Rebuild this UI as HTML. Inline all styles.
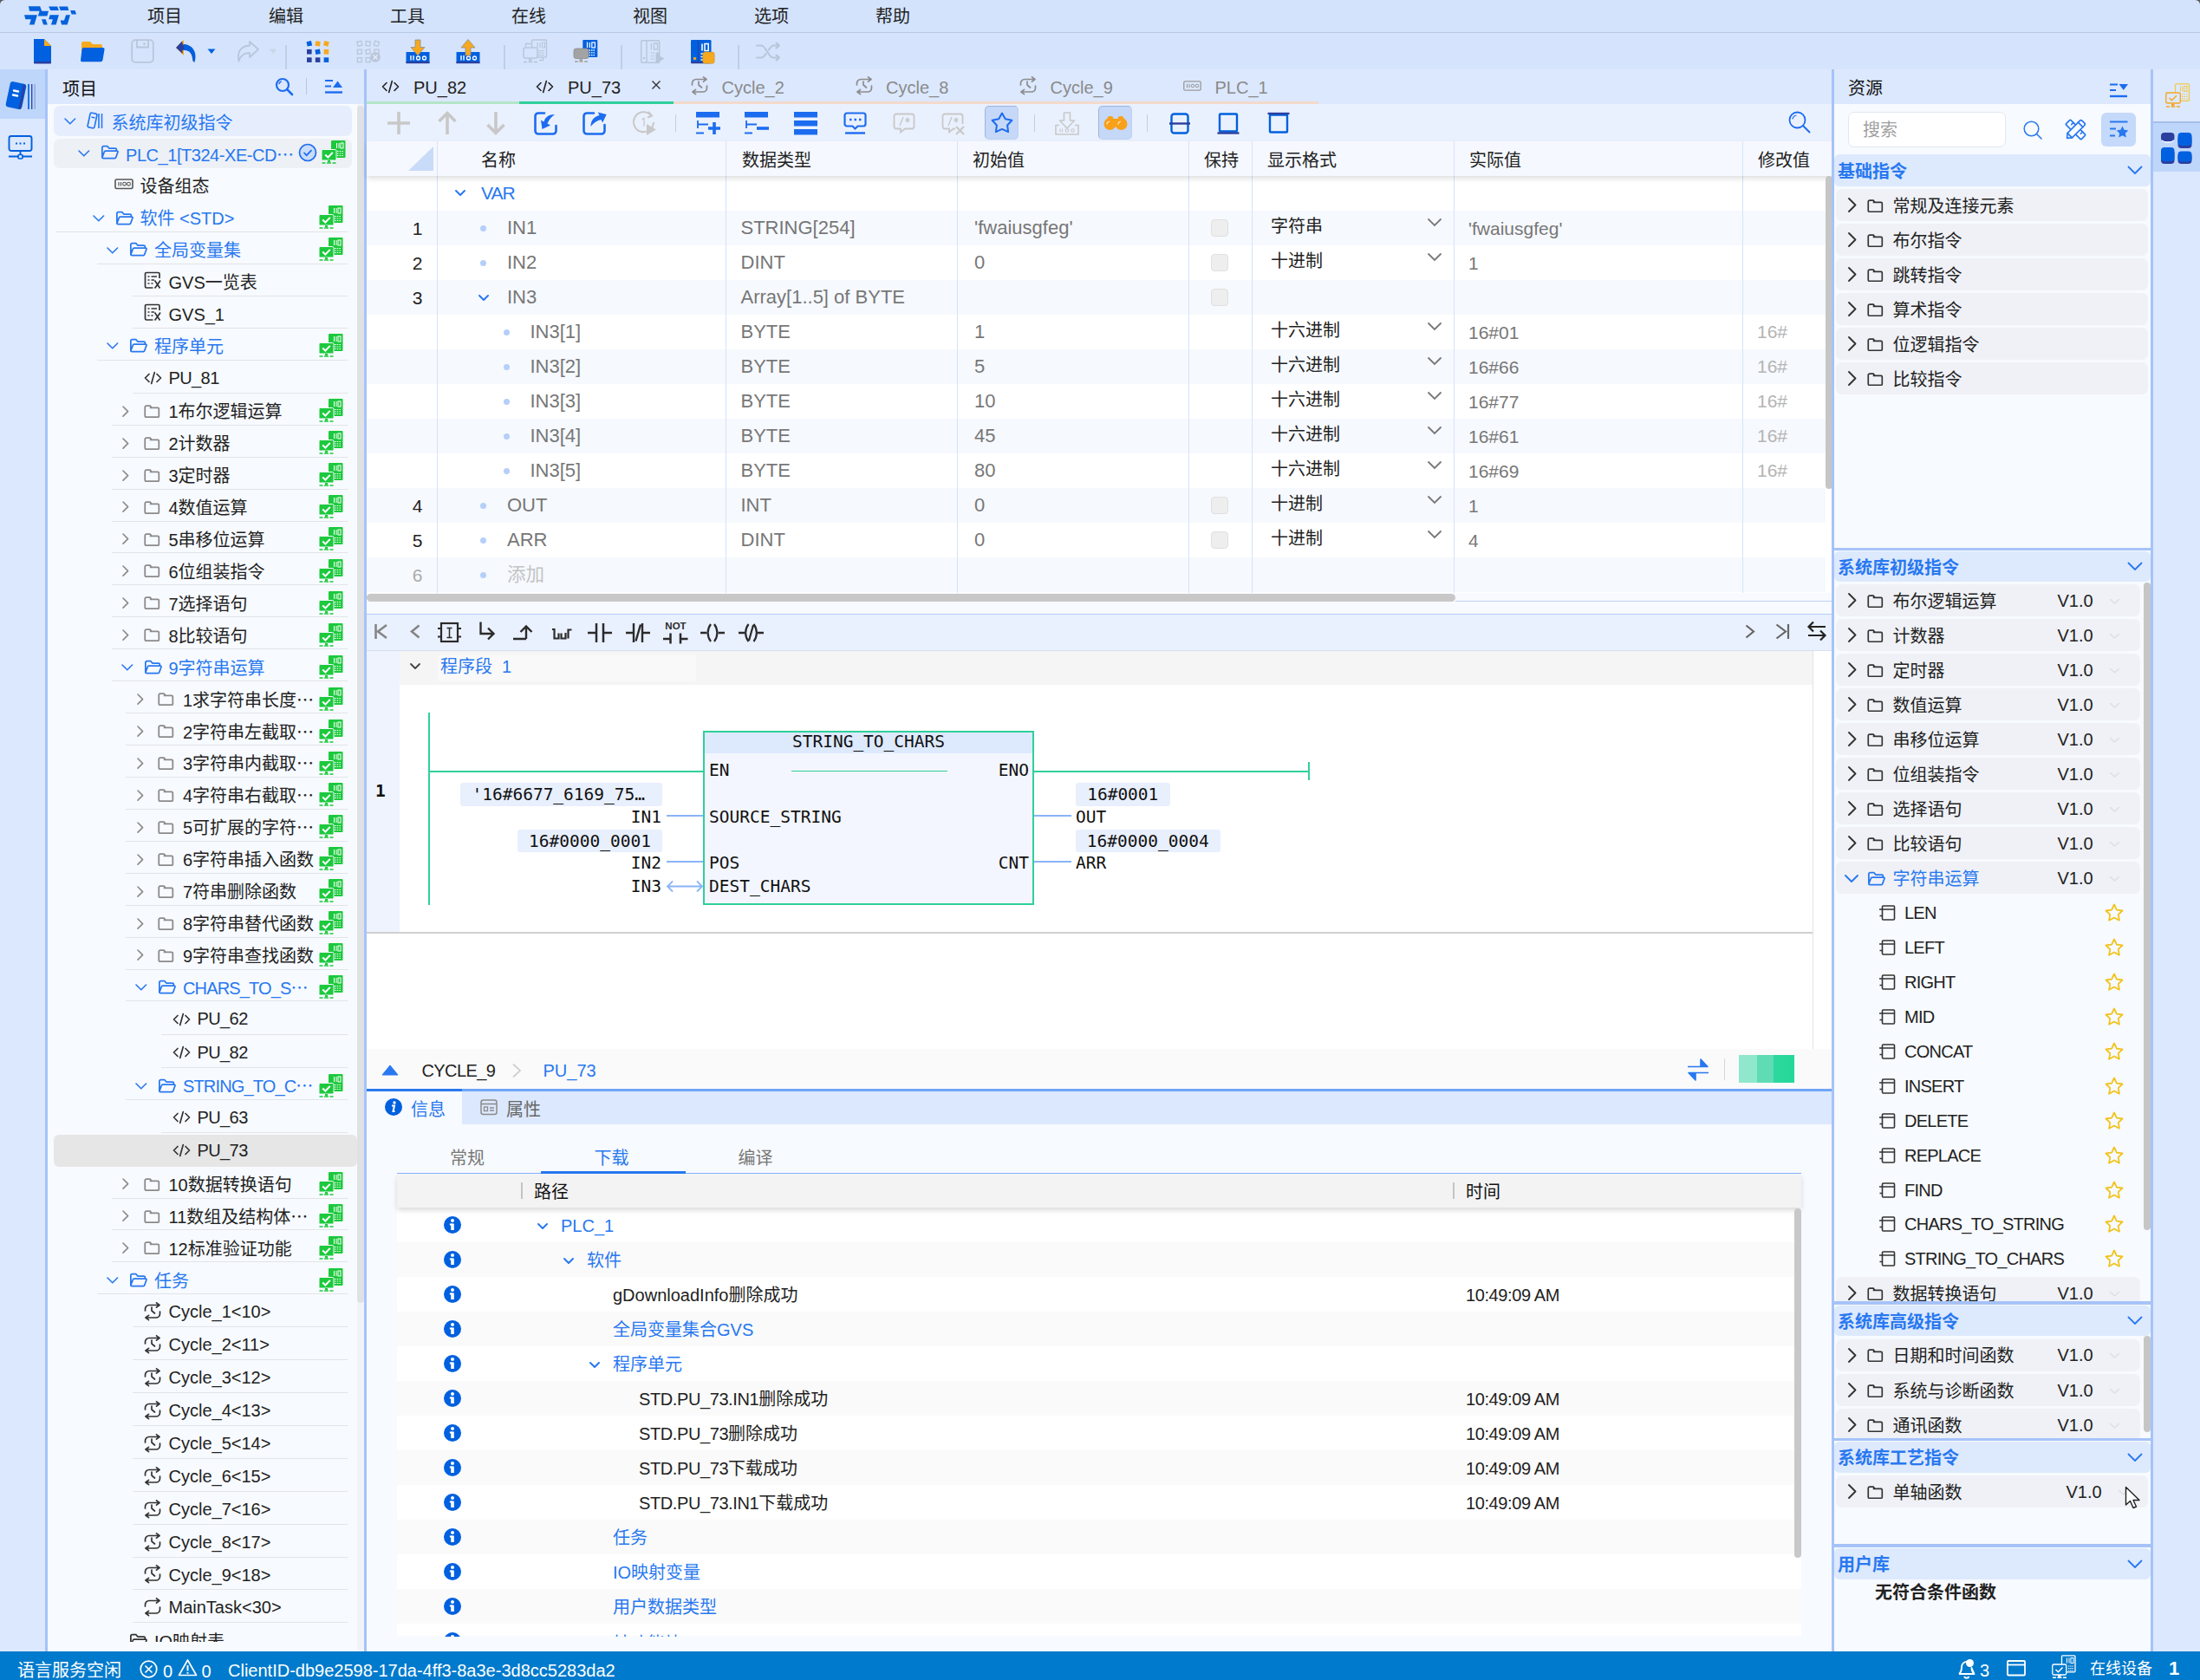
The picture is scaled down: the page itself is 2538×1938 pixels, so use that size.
<!DOCTYPE html>
<html lang="zh-CN"><head><meta charset="utf-8"><title>PLC IDE</title><style>
html,body{margin:0;padding:0;}
body{width:2538px;height:1938px;overflow:hidden;background:#f7fafe;font-family:"Liberation Sans","Noto Sans CJK SC",sans-serif;font-size:20px;color:#222;}
#app{position:relative;width:2538px;height:1938px;overflow:hidden;}
#app div,#app svg{position:absolute;box-sizing:border-box;}
#app svg{overflow:visible;}
.t{white-space:nowrap;padding-top:2.5px;}
.a{font-family:"Liberation Sans","Noto Sans CJK SC",sans-serif;font-size:22px;color:#777;white-space:nowrap;}
.m{font-family:"DejaVu Sans Mono","Liberation Mono","Noto Sans CJK SC",monospace;font-size:19.5px;color:#111;white-space:nowrap;}
</style></head><body><div id="app">
<div style="left:0px;top:0px;width:2538px;height:37px;background:#d3e3fb;"></div>
<div style="left:0px;top:37px;width:2538px;height:1px;background:#b7c9e6;"></div>
<div style="left:0px;top:38px;width:2538px;height:42px;background:#d5e4fc;"></div>
<svg style="left:20px;top:0px;" width="70" height="36" viewBox="0 0 70 36"><g fill="#0562de">
<path d="M12.900 7.200 H26.200 L28.200 12.700 H36 L34.400 18.600 H23.900 L25.600 12.700 H14.100 Z"/>
<path d="M8 17.200 H22.900 L19.600 28.600 H13.900 L15.800 22.300 H9.400 Z"/>
<path d="M28 22.300 H32.700 L34.800 28.600 H30.100 Z"/>
<path d="M36.200 7.400 H46.200 L47.900 11.900 H38.300 Z"/>
<path d="M48.100 7.400 H58.100 L59.300 11.900 H49.700 Z"/>
<path d="M37.600 17.200 H47.900 L44.600 28.600 H38.900 L40.900 22.300 H36.200 Z"/>
<path d="M56.100 17.200 H61 L57.700 28.600 H51.100 L49.700 23.500 H54 Z"/>
<path d="M61.200 12.100 H66.500 L68.100 16.600 H62.600 Z"/></g></svg>
<div class="t" style="left:170px;top:-2px;height:36px;line-height:36px;color:#222;">项目</div>
<div class="t" style="left:310px;top:-2px;height:36px;line-height:36px;color:#222;">编辑</div>
<div class="t" style="left:450px;top:-2px;height:36px;line-height:36px;color:#222;">工具</div>
<div class="t" style="left:590px;top:-2px;height:36px;line-height:36px;color:#222;">在线</div>
<div class="t" style="left:730px;top:-2px;height:36px;line-height:36px;color:#222;">视图</div>
<div class="t" style="left:870px;top:-2px;height:36px;line-height:36px;color:#222;">选项</div>
<div class="t" style="left:1010px;top:-2px;height:36px;line-height:36px;color:#222;">帮助</div>
<svg style="left:38px;top:44px;" width="22" height="30" viewBox="0 0 22 30"><path d="M1 1 h12 l8 8 v19 a1 1 0 0 1 -1 1 h-18 a1 1 0 0 1 -1 -1 z" fill="#0060df"/><path d="M13 1 l8 8 h-8 z" fill="#f6a91e"/><rect x="1" y="27" width="20" height="2.5" rx="1" fill="#2a3f9e"/></svg>
<svg style="left:92px;top:45px;" width="29" height="28" viewBox="0 0 29 28"><path d="M2 5 a2 2 0 0 1 2 -2 h8 l3 3 h9 a2 2 0 0 1 2 2 v6 h-24 z" fill="#f6a91e"/><path d="M4.5 10 h22 a2 2 0 0 1 2 2.3 l-2 12 a2.5 2.5 0 0 1 -2.4 2 h-21 a2 2 0 0 1 -2 -2.3 l1.4 -12 a2.2 2.2 0 0 1 2 -2 z" fill="#0060df"/></svg>
<svg style="left:151px;top:45px;" width="27" height="28" viewBox="0 0 27 28"><rect x="1.2" y="1.2" width="24.6" height="25.6" rx="4" fill="none" stroke="#b9c5da" stroke-width="1.8"/><path d="M7 1.5 v8 h13 v-8" fill="none" stroke="#b9c5da" stroke-width="1.8"/><path d="M15.5 4 v3" stroke="#b9c5da" stroke-width="1.8"/></svg>
<svg style="left:202px;top:44px;" width="28" height="30" viewBox="0 0 28 30"><path d="M1 11 l9 -9 v18 z" fill="#f6a91e"/><path d="M8 3.5 L1 11 l7.5 7 v-4.2 c7 -0.5 10.5 2.5 11.5 9.5 c0.3 2 0.6 4 1.5 4.5 c3.5 -10 -1 -20 -12.5 -20.3 z" fill="#2a3f9e"/><path d="M10 7 c8 0.3 13.5 6 13.5 14 c0 2.5 -0.5 5 -1.2 7 c-1 -0.7 -1.3 -2.5 -1.6 -4.5 c-1 -6.5 -4 -9.5 -10.7 -9.7 z" fill="#0060df"/></svg>
<svg style="left:239px;top:56px;" width="10" height="7" viewBox="0 0 10 7"><path d="M0.5 0.5 h9 l-4.5 5.5 z" fill="#0060df"/></svg>
<svg style="left:272px;top:46px;" width="28" height="27" viewBox="0 0 28 27"><path d="M16 2 l10 9 l-10 9 v-5 c-6 0 -10 2 -12.5 9.5 c-2 -9 1 -17.500 12.500 -18 z" fill="none" stroke="#b9c5da" stroke-width="1.8" stroke-linejoin="round"/></svg>
<svg style="left:310px;top:56px;" width="10" height="7" viewBox="0 0 10 7"><path d="M0.5 0.5 h9 l-4.5 5.5 z" fill="#ccd6e8"/></svg>
<div style="left:329px;top:52px;width:1.5px;height:28px;background:#c0cee6;"></div>
<svg style="left:352px;top:44px;" width="30" height="31" viewBox="0 0 30 31"><rect x="2.0" y="3.5" width="5.6" height="5.6" fill="#0060df" transform="rotate(-12 4.8 6.3)"/><rect x="11.8" y="3.5" width="5.6" height="5.6" fill="#f6a91e" transform="rotate(8 14.600000000000001 6.3)"/><rect x="21.6" y="3.5" width="5.6" height="5.6" fill="#f6a91e" transform="rotate(14 24.400000000000002 6.3)"/><rect x="2.0" y="12.9" width="5.6" height="5.6" fill="#2a3f9e" transform="rotate(0 4.8 15.7)"/><rect x="11.8" y="12.9" width="5.6" height="5.6" fill="#0060df" transform="rotate(-10 14.600000000000001 15.7)"/><rect x="21.6" y="12.9" width="5.6" height="5.6" fill="#f6a91e" transform="rotate(0 24.400000000000002 15.7)"/><rect x="2.0" y="22.3" width="5.6" height="5.6" fill="#2a3f9e" transform="rotate(0 4.8 25.1)"/><rect x="11.8" y="22.3" width="5.6" height="5.6" fill="#2a3f9e" transform="rotate(0 14.600000000000001 25.1)"/><rect x="21.6" y="22.3" width="5.6" height="5.6" fill="#0060df" transform="rotate(0 24.400000000000002 25.1)"/></svg>
<svg style="left:410px;top:44px;" width="30" height="31" viewBox="0 0 30 31"><rect x="2.3" y="3.8" width="5" height="5" fill="none" stroke="#b9c5da" stroke-width="1.3" transform="rotate(-12 4.8 6.3)"/><rect x="12.100000000000001" y="3.8" width="5" height="5" fill="none" stroke="#b9c5da" stroke-width="1.3" transform="rotate(8 14.600000000000001 6.3)"/><rect x="21.900000000000002" y="3.8" width="5" height="5" fill="none" stroke="#b9c5da" stroke-width="1.3" transform="rotate(14 24.400000000000002 6.3)"/><rect x="2.3" y="13.2" width="5" height="5" fill="none" stroke="#b9c5da" stroke-width="1.3" transform="rotate(0 4.8 15.7)"/><rect x="12.100000000000001" y="13.2" width="5" height="5" fill="none" stroke="#b9c5da" stroke-width="1.3" transform="rotate(-10 14.600000000000001 15.7)"/><rect x="21.900000000000002" y="13.2" width="5" height="5" fill="none" stroke="#b9c5da" stroke-width="1.3" transform="rotate(0 24.400000000000002 15.7)"/><rect x="2.3" y="22.6" width="5" height="5" fill="none" stroke="#b9c5da" stroke-width="1.3" transform="rotate(0 4.8 25.1)"/><rect x="12.100000000000001" y="22.6" width="5" height="5" fill="none" stroke="#b9c5da" stroke-width="1.3" transform="rotate(0 14.600000000000001 25.1)"/><circle cx="23" cy="22" r="5.8" fill="#b9c5da"/><path d="M20.500 19.500 l5 5 M25.500 19.500 l-5 5" stroke="#e4ecfa" stroke-width="1.5"/></svg>
<svg style="left:468px;top:42px;" width="28" height="32" viewBox="0 0 28 32"><rect x="0.500" y="18" width="27" height="13" rx="0.500" fill="#0060df"/><rect x="0.500" y="29" width="27" height="2.200" fill="#2a3f9e"/><path d="M6 22 v5.500 M9 22 v5.500" stroke="#fff" stroke-width="1.400"/><circle cx="14.500" cy="25" r="2" fill="none" stroke="#fff" stroke-width="1.300"/><circle cx="21.500" cy="25" r="2" fill="none" stroke="#fff" stroke-width="1.300"/><path d="M11 4 h6 v8.500 h5 l-8 9.500 l-8 -9.500 h5 z" fill="#f6a91e" stroke="#8d8d8d" stroke-width="0.800" stroke-linejoin="round"/></svg>
<svg style="left:526px;top:42px;" width="28" height="32" viewBox="0 0 28 32"><rect x="0.500" y="18" width="27" height="13" rx="0.500" fill="#0060df"/><rect x="0.500" y="29" width="27" height="2.200" fill="#2a3f9e"/><path d="M6 22 v5.500 M9 22 v5.500" stroke="#fff" stroke-width="1.400"/><circle cx="14.500" cy="25" r="2" fill="none" stroke="#fff" stroke-width="1.300"/><circle cx="21.500" cy="25" r="2" fill="none" stroke="#fff" stroke-width="1.300"/><path d="M14 3.500 l8 9.500 h-5 v9 h-6 v-9 h-5 z" fill="#f6a91e" stroke="#8d8d8d" stroke-width="0.800" stroke-linejoin="round"/></svg>
<div style="left:581px;top:52px;width:1.5px;height:28px;background:#c0cee6;"></div>
<svg style="left:603px;top:45px;" width="29" height="29" viewBox="0 0 29 29"><rect x="10.500" y="1" width="17" height="20" rx="1.500" fill="none" stroke="#b9c5da" stroke-width="1.400"/><path d="M17 4 v6 M20 4 v6 M22.500 4 h3 v6 h-3 z M18 13.500 h7 M18 16 h7 M18 18.500 h7" stroke="#b9c5da" stroke-width="1.100" fill="none" stroke-dasharray="none"/><rect x="1" y="10" width="16" height="12" rx="2" fill="#d5e4fc" stroke="#b9c5da" stroke-width="1.500"/><path d="M3.500 9 v-3.500 h6 M19 24.500 h4.500 v-3" fill="none" stroke="#b9c5da" stroke-width="1.300"/><rect x="7" y="22.500" width="3.500" height="3" fill="#b9c5da"/><path d="M1 26.500 h4 M6.500 26.500 h5 M13 26.500 h4" stroke="#b9c5da" stroke-width="1.500"/></svg>
<svg style="left:661px;top:45px;" width="30" height="29" viewBox="0 0 30 29"><rect x="11.300" y="1" width="17" height="20" rx="0.800" fill="#0060df"/><path d="M16.500 3.500 v6.500 M19.300 4 v6" stroke="#fff" stroke-width="1.200"/><rect x="21.800" y="4" width="3.600" height="6" fill="none" stroke="#fff" stroke-width="1.200"/><path d="M18.500 13 h7.500 M18.500 15.800 h7.500 M18.500 18.600 h7.500" stroke="#fff" stroke-width="1.300" stroke-dasharray="1.500 1"/><rect x="1" y="11" width="17" height="11.500" rx="2.500" fill="#a3a3a3" stroke="#8b8b8b" stroke-width="0.800"/><rect x="7.500" y="22.500" width="3.500" height="3" fill="#a3a3a3"/><path d="M2 26 h4 M7.500 26 h4 M13 26 h4" stroke="#a3a3a3" stroke-width="1.500"/></svg>
<div style="left:716px;top:52px;width:1.5px;height:28px;background:#c0cee6;"></div>
<svg style="left:738px;top:45px;" width="32" height="29" viewBox="0 0 32 29"><rect x="1.700" y="1.700" width="21" height="25.500" rx="1.500" fill="none" stroke="#b9c5da" stroke-width="1.500"/><path d="M8 2 v25" stroke="#b9c5da" stroke-width="1.400"/><path d="M13.500 5 v7 M16.500 5 h4 v7 h-4 z" stroke="#b9c5da" stroke-width="1.300" fill="none"/><path d="M13 16 h5 M13 19.500 h5 M13 23 h5" stroke="#b9c5da" stroke-width="1.400" stroke-dasharray="1.500 1" fill="none"/><circle cx="5" cy="22" r="1.300" fill="#b9c5da"/><path d="M18.500 15.500 h4 v4 l6 3 l-6 3.500 v2 h-4 z" fill="#b9c5da"/></svg>
<svg style="left:797px;top:45.5px;" width="28" height="28" viewBox="0 0 28 28"><rect x="0" y="0" width="23.500" height="27" rx="1.200" fill="#0060df"/><rect x="0" y="25" width="23.500" height="2.200" rx="1" fill="#2a3f9e"/><path d="M8.500 0.500 v25" stroke="#2a3f9e" stroke-width="1.100"/><path d="M13 4.500 v8" stroke="#fff" stroke-width="1.600"/><rect x="16" y="4.500" width="4.200" height="8" fill="none" stroke="#fff" stroke-width="1.500"/><circle cx="4.500" cy="21.500" r="1.700" fill="#f6a91e"/><path d="M11.500 16 h2.500 M11.500 19.500 h2.500 M11.500 23 h2.500" stroke="#fff" stroke-width="1.600"/><rect x="13.700" y="14" width="13.500" height="13.200" rx="2.600" fill="#f6a91e" stroke="#b9892f" stroke-width="0.500"/></svg>
<div style="left:851px;top:52px;width:1.5px;height:28px;background:#c0cee6;"></div>
<svg style="left:872px;top:49px;" width="30" height="22" viewBox="0 0 30 22"><path d="M1 3.500 h5 c6 0 8 14 14 14 h7 M1 17.500 h5 c2.500 0 4 -2 5.500 -4.500 M15 8.500 c1.500 -2.500 3 -5 5.500 -5 h6.500 M23.500 0.500 l3.500 3 l-3.500 3 M23.500 14.500 l3.500 3 l-3.500 3" fill="none" stroke="#b9c5da" stroke-width="2.100" stroke-linecap="round" stroke-linejoin="round"/></svg>
<div style="left:0px;top:80px;width:52px;height:1825px;background:#dce8fd;"></div>
<div style="left:0px;top:80px;width:52px;height:57px;background:#bfd6fb;"></div>
<div style="left:52px;top:80px;width:3px;height:1825px;background:#a6c3f8;"></div>
<svg style="left:6px;top:92px;" width="38" height="36" viewBox="0 0 38 36"><rect x="3" y="3" width="19" height="30" rx="3.500" fill="#0060df" transform="rotate(12 12 18)"/><path d="M19.500 4.500 l2.500 0.600 l-5.500 28 l-2.500 -0.500 z" fill="#2a3f9e" transform="translate(1.500 0.800)"/><path d="M10 12.500 l5 1 M9 17.500 l5 1" stroke="#fff" stroke-width="2.400" stroke-linecap="round"/><path d="M27 5 v29" stroke="#0060df" stroke-width="1.700"/><path d="M30.700 5 v29" stroke="#2a3f9e" stroke-width="1.300"/><path d="M34.200 5 v29" stroke="#8ea9dc" stroke-width="1.500"/></svg>
<svg style="left:9px;top:155px;" width="30" height="31" viewBox="0 0 30 31"><rect x="1.500" y="2" width="26" height="17" rx="2.500" fill="none" stroke="#0060df" stroke-width="1.900"/><path d="M9 10.500 h2 M13.500 10.500 h2 M18 10.500 h2" stroke="#0060df" stroke-width="2"/><path d="M14.500 19 v5 M1 25.500 h27" stroke="#0060df" stroke-width="1.900"/><rect x="12" y="23.500" width="5" height="4.500" rx="1.200" fill="#dce8fd" stroke="#0060df" stroke-width="1.700"/></svg>
<div style="left:55px;top:80px;width:366px;height:1825px;background:#f7fafe;"></div>
<div style="left:55px;top:80px;width:366px;height:40px;background:#dce8fd;"></div>
<div class="t" style="left:72px;top:80px;height:41px;line-height:41px;color:#111;">项目</div>
<svg style="left:317px;top:89px;" width="22" height="22" viewBox="0 0 22 22"><circle cx="9" cy="9" r="7" fill="none" stroke="#1c6cf0" stroke-width="2.200"/><path d="M14.200 14.200 L20 20" stroke="#1c6cf0" stroke-width="2.600" stroke-linecap="round"/><path d="M4.800 8 a4.500 4.500 0 0 1 3 -3.200" fill="none" stroke="#1c6cf0" stroke-width="1.400"/></svg>
<div style="left:353px;top:90px;width:1px;height:19px;background:#b9c6dc;"></div>
<svg style="left:374px;top:91px;" width="22" height="18" viewBox="0 0 22 18"><path d="M1 2 h9 M1 8.500 h7 " stroke="#1c6cf0" stroke-width="2.200"/><path d="M1 15.500 h20" stroke="#1c6cf0" stroke-width="2.400"/><path d="M10 10 l5.500 -7.500 l5.500 7.500 z" fill="#1c6cf0"/></svg>
<div style="left:412px;top:120px;width:8px;height:1785px;background:#f0f3f8;"></div>
<div style="left:412px;top:122px;width:7.5px;height:1381px;background:#dfe1e5;border-radius:4px;"></div>
<div style="left:420px;top:80px;width:3px;height:1825px;background:#a6c3f8;"></div>
<div style="left:62px;top:122px;width:344px;height:35px;background:#e6eefd;border-radius:7px;"></div>
<svg style="left:72.7px;top:133.64499999999998px;" width="15.6" height="11.8" viewBox="0 0 15.6 11.8"><path d="M2 3 L7.8 8.8 L13.6 3" fill="none" stroke="#2878f0" stroke-width="1.6" stroke-linecap="round" stroke-linejoin="round"/></svg>
<svg style="left:99.0px;top:128.545px;" width="20" height="21" viewBox="0 0 20 21"><rect x="3.500" y="1.500" width="8" height="17" rx="1.800" fill="none" stroke="#2878f0" stroke-width="1.700" transform="rotate(12 7.500 10)"/><path d="M6.500 6 l4 0.900" stroke="#2878f0" stroke-width="1.500"/><path d="M15 2 v17 M18.500 2 v17" stroke="#2878f0" stroke-width="1.600"/></svg>
<div class="t" style="left:128.5px;top:120.08px;height:36.93px;line-height:36.93px;color:#2878f0;padding-top:3.5px;">系统库初级指令</div>
<div style="left:62px;top:159.5px;width:344px;height:34px;background:#edf0f5;border-radius:7px;"></div>
<svg style="left:89.2px;top:170.575px;" width="15.6" height="11.8" viewBox="0 0 15.6 11.8"><path d="M2 3 L7.8 8.8 L13.6 3" fill="none" stroke="#2878f0" stroke-width="1.6" stroke-linecap="round" stroke-linejoin="round"/></svg>
<svg style="left:116.0px;top:166.475px;" width="21.5" height="18.5" viewBox="0 0 23 19"><path d="M2 16.5 V4.2 a1.7 1.7 0 0 1 1.7 -1.7 h4.8 l2 2.5 h7.5 a1.7 1.7 0 0 1 1.7 1.7 v1.6 M2 16.5 l2.6 -7 a1.6 1.6 0 0 1 1.5 -1.1 h14.2 a1 1 0 0 1 1 1.4 l-2.3 6.4 a1.6 1.6 0 0 1 -1.5 1.1 h-14 a1.5 1.5 0 0 1 -1.5 -1.5 z" fill="none" stroke="#2878f0" stroke-width="1.9" stroke-linejoin="round"/></svg>
<div class="t" style="left:145.0px;top:157.01px;height:36.93px;line-height:36.93px;color:#2878f0;padding-top:3.5px;"><span style="letter-spacing:-0.45px">PLC_1[T324-XE-CD</span>⋯</div>
<svg style="left:371px;top:161.975px;" width="28" height="27" viewBox="0 0 28 27"><rect x="11" y="0" width="16.5" height="20" rx="1" fill="#1cc93c"/>
<path d="M17.5 3 v6 M20 3 v6" stroke="#fff" stroke-width="1" fill="none"/><rect x="22" y="3" width="3" height="6" fill="none" stroke="#fff" stroke-width="1"/>
<path d="M18 12.5 h7 M18 15 h7 M18 17.5 h7" stroke="#fff" stroke-width="1.2" stroke-dasharray="1.5 1.2" fill="none"/>
<rect x="0" y="10.5" width="17" height="12.5" rx="1.5" fill="#1cc93c" stroke="#f4f8ff" stroke-width="1"/>
<path d="M4.2 16.5 l3.2 3 l5.4 -5.6" fill="none" stroke="#fff" stroke-width="2"/>
<rect x="7" y="23" width="3" height="2.2" fill="#1cc93c"/>
<path d="M0.5 26 h4 M6 26 h5 M12.5 26 h4" stroke="#1cc93c" stroke-width="1.6" fill="none"/></svg>
<svg style="left:344px;top:164.975px;" width="22" height="22" viewBox="0 0 22 22"><circle cx="11" cy="11" r="9.500" fill="#c9dcfb" stroke="#1c6cf0" stroke-width="1.700"/><path d="M6.500 11 l3.200 3.200 l5.800 -6" fill="none" stroke="#1c6cf0" stroke-width="1.700"/></svg>
<svg style="left:132.0px;top:205.905px;" width="22" height="13" viewBox="0 0 22 13"><rect x="1" y="1" width="20" height="10.500" rx="1.500" fill="none" stroke="#555" stroke-width="1.600"/><path d="M5 4 v4.500 M7.500 4 v4.500" stroke="#555" stroke-width="1.200"/><circle cx="11.500" cy="6.200" r="1.900" fill="none" stroke="#555" stroke-width="1.100"/><circle cx="16.500" cy="6.200" r="1.900" fill="none" stroke="#555" stroke-width="1.100"/></svg>
<div class="t" style="left:161.5px;top:193.94px;height:36.93px;line-height:36.93px;color:#222;padding-top:3.4px;">设备组态</div>
<div style="left:64px;top:266.8px;width:337px;height:1px;background:#e2e4e8;"></div>
<svg style="left:105.7px;top:245.635px;" width="15.6" height="11.8" viewBox="0 0 15.6 11.8"><path d="M2 3 L7.8 8.8 L13.6 3" fill="none" stroke="#2878f0" stroke-width="1.6" stroke-linecap="round" stroke-linejoin="round"/></svg>
<svg style="left:132.5px;top:241.535px;" width="21.5" height="18.5" viewBox="0 0 23 19"><path d="M2 16.5 V4.2 a1.7 1.7 0 0 1 1.7 -1.7 h4.8 l2 2.5 h7.5 a1.7 1.7 0 0 1 1.7 1.7 v1.6 M2 16.5 l2.6 -7 a1.6 1.6 0 0 1 1.5 -1.1 h14.2 a1 1 0 0 1 1 1.4 l-2.3 6.4 a1.6 1.6 0 0 1 -1.5 1.1 h-14 a1.5 1.5 0 0 1 -1.5 -1.5 z" fill="none" stroke="#2878f0" stroke-width="1.9" stroke-linejoin="round"/></svg>
<div class="t" style="left:161.5px;top:230.87px;height:36.93px;line-height:36.93px;color:#2878f0;padding-top:3.4px;">软件 &lt;STD&gt;</div>
<svg style="left:367.5px;top:237.335px;" width="28" height="27" viewBox="0 0 28 27"><rect x="11" y="0" width="16.5" height="20" rx="1" fill="#1cc93c"/>
<path d="M17.5 3 v6 M20 3 v6" stroke="#fff" stroke-width="1" fill="none"/><rect x="22" y="3" width="3" height="6" fill="none" stroke="#fff" stroke-width="1"/>
<path d="M18 12.5 h7 M18 15 h7 M18 17.5 h7" stroke="#fff" stroke-width="1.2" stroke-dasharray="1.5 1.2" fill="none"/>
<rect x="0" y="10.5" width="17" height="12.5" rx="1.5" fill="#1cc93c" stroke="#f4f8ff" stroke-width="1"/>
<path d="M4.2 16.5 l3.2 3 l5.4 -5.6" fill="none" stroke="#fff" stroke-width="2"/>
<rect x="7" y="23" width="3" height="2.2" fill="#1cc93c"/>
<path d="M0.5 26 h4 M6 26 h5 M12.5 26 h4" stroke="#1cc93c" stroke-width="1.6" fill="none"/></svg>
<div style="left:112.0px;top:303.73px;width:289.0px;height:1px;background:#e2e4e8;"></div>
<svg style="left:122.2px;top:282.565px;" width="15.6" height="11.8" viewBox="0 0 15.6 11.8"><path d="M2 3 L7.8 8.8 L13.6 3" fill="none" stroke="#2878f0" stroke-width="1.6" stroke-linecap="round" stroke-linejoin="round"/></svg>
<svg style="left:149.0px;top:278.465px;" width="21.5" height="18.5" viewBox="0 0 23 19"><path d="M2 16.5 V4.2 a1.7 1.7 0 0 1 1.7 -1.7 h4.8 l2 2.5 h7.5 a1.7 1.7 0 0 1 1.7 1.7 v1.6 M2 16.5 l2.6 -7 a1.6 1.6 0 0 1 1.5 -1.1 h14.2 a1 1 0 0 1 1 1.4 l-2.3 6.4 a1.6 1.6 0 0 1 -1.5 1.1 h-14 a1.5 1.5 0 0 1 -1.5 -1.5 z" fill="none" stroke="#2878f0" stroke-width="1.9" stroke-linejoin="round"/></svg>
<div class="t" style="left:178.0px;top:267.8px;height:36.93px;line-height:36.93px;color:#2878f0;padding-top:3.4px;">全局变量集</div>
<svg style="left:367.5px;top:274.265px;" width="28" height="27" viewBox="0 0 28 27"><rect x="11" y="0" width="16.5" height="20" rx="1" fill="#1cc93c"/>
<path d="M17.5 3 v6 M20 3 v6" stroke="#fff" stroke-width="1" fill="none"/><rect x="22" y="3" width="3" height="6" fill="none" stroke="#fff" stroke-width="1"/>
<path d="M18 12.5 h7 M18 15 h7 M18 17.5 h7" stroke="#fff" stroke-width="1.2" stroke-dasharray="1.5 1.2" fill="none"/>
<rect x="0" y="10.5" width="17" height="12.5" rx="1.5" fill="#1cc93c" stroke="#f4f8ff" stroke-width="1"/>
<path d="M4.2 16.5 l3.2 3 l5.4 -5.6" fill="none" stroke="#fff" stroke-width="2"/>
<rect x="7" y="23" width="3" height="2.2" fill="#1cc93c"/>
<path d="M0.5 26 h4 M6 26 h5 M12.5 26 h4" stroke="#1cc93c" stroke-width="1.6" fill="none"/></svg>
<div style="left:152.5px;top:340.66px;width:248.5px;height:1px;background:#e2e4e8;"></div>
<svg style="left:165.5px;top:313.195px;" width="21" height="21" viewBox="0 0 21 21"><path d="M18 8 V3 a1.500 1.500 0 0 0 -1.500 -1.500 h-13.500 a1.500 1.500 0 0 0 -1.500 1.500 v14.500 a1.500 1.500 0 0 0 1.500 1.500 h7.500" fill="none" stroke="#333" stroke-width="1.700"/><path d="M4.500 6 h2 M8.500 6 h6.500 M4.500 10 h2 M8.500 10 h3.500 M4.500 14 h2 M8.500 14 h2" stroke="#333" stroke-width="1.600"/><path d="M12.500 10.500 l6 9 M19 10.500 c-2 3 -4 6 -6.500 9" stroke="#333" stroke-width="1.700" fill="none"/></svg>
<div class="t" style="left:194.5px;top:304.73px;height:36.93px;line-height:36.93px;color:#222;padding-top:3.4px;">GVS一览表</div>
<div style="left:152.5px;top:377.59000000000003px;width:248.5px;height:1px;background:#e2e4e8;"></div>
<svg style="left:165.5px;top:350.125px;" width="21" height="21" viewBox="0 0 21 21"><path d="M18 8 V3 a1.500 1.500 0 0 0 -1.500 -1.500 h-13.500 a1.500 1.500 0 0 0 -1.500 1.500 v14.500 a1.500 1.500 0 0 0 1.500 1.500 h7.500" fill="none" stroke="#333" stroke-width="1.700"/><path d="M4.500 6 h2 M8.500 6 h6.500 M4.500 10 h2 M8.500 10 h3.500 M4.500 14 h2 M8.500 14 h2" stroke="#333" stroke-width="1.600"/><path d="M12.500 10.500 l6 9 M19 10.500 c-2 3 -4 6 -6.500 9" stroke="#333" stroke-width="1.700" fill="none"/></svg>
<div class="t" style="left:194.5px;top:341.66px;height:36.93px;line-height:36.93px;color:#222;padding-top:3.4px;">GVS_1</div>
<div style="left:112.0px;top:414.52px;width:289.0px;height:1px;background:#e2e4e8;"></div>
<svg style="left:122.2px;top:393.35499999999996px;" width="15.6" height="11.8" viewBox="0 0 15.6 11.8"><path d="M2 3 L7.8 8.8 L13.6 3" fill="none" stroke="#2878f0" stroke-width="1.6" stroke-linecap="round" stroke-linejoin="round"/></svg>
<svg style="left:149.0px;top:389.25499999999994px;" width="21.5" height="18.5" viewBox="0 0 23 19"><path d="M2 16.5 V4.2 a1.7 1.7 0 0 1 1.7 -1.7 h4.8 l2 2.5 h7.5 a1.7 1.7 0 0 1 1.7 1.7 v1.6 M2 16.5 l2.6 -7 a1.6 1.6 0 0 1 1.5 -1.1 h14.2 a1 1 0 0 1 1 1.4 l-2.3 6.4 a1.6 1.6 0 0 1 -1.5 1.1 h-14 a1.5 1.5 0 0 1 -1.5 -1.5 z" fill="none" stroke="#2878f0" stroke-width="1.9" stroke-linejoin="round"/></svg>
<div class="t" style="left:178.0px;top:378.59px;height:36.93px;line-height:36.93px;color:#2878f0;padding-top:3.4px;">程序单元</div>
<svg style="left:367.5px;top:385.05499999999995px;" width="28" height="27" viewBox="0 0 28 27"><rect x="11" y="0" width="16.5" height="20" rx="1" fill="#1cc93c"/>
<path d="M17.5 3 v6 M20 3 v6" stroke="#fff" stroke-width="1" fill="none"/><rect x="22" y="3" width="3" height="6" fill="none" stroke="#fff" stroke-width="1"/>
<path d="M18 12.5 h7 M18 15 h7 M18 17.5 h7" stroke="#fff" stroke-width="1.2" stroke-dasharray="1.5 1.2" fill="none"/>
<rect x="0" y="10.5" width="17" height="12.5" rx="1.5" fill="#1cc93c" stroke="#f4f8ff" stroke-width="1"/>
<path d="M4.2 16.5 l3.2 3 l5.4 -5.6" fill="none" stroke="#fff" stroke-width="2"/>
<rect x="7" y="23" width="3" height="2.2" fill="#1cc93c"/>
<path d="M0.5 26 h4 M6 26 h5 M12.5 26 h4" stroke="#1cc93c" stroke-width="1.6" fill="none"/></svg>
<div style="left:152.5px;top:452.82px;width:248.5px;height:1px;background:#e2e4e8;"></div>
<svg style="left:165.5px;top:427.66999999999996px;" width="21" height="16" viewBox="0 0 21 16"><path d="M6 3.5 L1.5 8 L6 12.5 M15 3.5 L19.5 8 L15 12.5 M12.3 1.5 L8.7 14.5" fill="none" stroke="#333" stroke-width="1.7" stroke-linecap="round" stroke-linejoin="round"/></svg>
<div class="t" style="left:194.5px;top:415.52px;height:38.3px;line-height:38.3px;color:#222;padding-top:1px;letter-spacing:-0.6px;">PU_81</div>
<div style="left:128.5px;top:489.75px;width:272.5px;height:1px;background:#e2e4e8;"></div>
<svg style="left:139.2px;top:466.68499999999995px;" width="11.6" height="15.2" viewBox="0 0 11.6 15.2"><path d="M3 2 L8.6 7.6 L3 13.2" fill="none" stroke="#8a8a8a" stroke-width="1.6" stroke-linecap="round" stroke-linejoin="round"/></svg>
<svg style="left:165.5px;top:465.78499999999997px;" width="18.5" height="16" viewBox="0 0 22 19"><path d="M1.5 4.5 a2 2 0 0 1 2 -2 h5 l2 2.6 h8.5 a1.6 1.6 0 0 1 1.6 1.6 v9.8 a1.6 1.6 0 0 1 -1.6 1.6 h-15.9 a1.6 1.6 0 0 1 -1.6 -1.6 z M8 5.1 h3" fill="none" stroke="#8a8a8a" stroke-width="2.1" stroke-linejoin="round"/></svg>
<div class="t" style="left:194.5px;top:453.82px;height:36.93px;line-height:36.93px;color:#222;padding-top:3.4px;">1布尔逻辑运算</div>
<svg style="left:367.5px;top:460.28499999999997px;" width="28" height="27" viewBox="0 0 28 27"><rect x="11" y="0" width="16.5" height="20" rx="1" fill="#1cc93c"/>
<path d="M17.5 3 v6 M20 3 v6" stroke="#fff" stroke-width="1" fill="none"/><rect x="22" y="3" width="3" height="6" fill="none" stroke="#fff" stroke-width="1"/>
<path d="M18 12.5 h7 M18 15 h7 M18 17.5 h7" stroke="#fff" stroke-width="1.2" stroke-dasharray="1.5 1.2" fill="none"/>
<rect x="0" y="10.5" width="17" height="12.5" rx="1.5" fill="#1cc93c" stroke="#f4f8ff" stroke-width="1"/>
<path d="M4.2 16.5 l3.2 3 l5.4 -5.6" fill="none" stroke="#fff" stroke-width="2"/>
<rect x="7" y="23" width="3" height="2.2" fill="#1cc93c"/>
<path d="M0.5 26 h4 M6 26 h5 M12.5 26 h4" stroke="#1cc93c" stroke-width="1.6" fill="none"/></svg>
<div style="left:128.5px;top:526.68px;width:272.5px;height:1px;background:#e2e4e8;"></div>
<svg style="left:139.2px;top:503.61499999999995px;" width="11.6" height="15.2" viewBox="0 0 11.6 15.2"><path d="M3 2 L8.6 7.6 L3 13.2" fill="none" stroke="#8a8a8a" stroke-width="1.6" stroke-linecap="round" stroke-linejoin="round"/></svg>
<svg style="left:165.5px;top:502.715px;" width="18.5" height="16" viewBox="0 0 22 19"><path d="M1.5 4.5 a2 2 0 0 1 2 -2 h5 l2 2.6 h8.5 a1.6 1.6 0 0 1 1.6 1.6 v9.8 a1.6 1.6 0 0 1 -1.6 1.6 h-15.9 a1.6 1.6 0 0 1 -1.6 -1.6 z M8 5.1 h3" fill="none" stroke="#8a8a8a" stroke-width="2.1" stroke-linejoin="round"/></svg>
<div class="t" style="left:194.5px;top:490.75px;height:36.93px;line-height:36.93px;color:#222;padding-top:3.4px;">2计数器</div>
<svg style="left:367.5px;top:497.215px;" width="28" height="27" viewBox="0 0 28 27"><rect x="11" y="0" width="16.5" height="20" rx="1" fill="#1cc93c"/>
<path d="M17.5 3 v6 M20 3 v6" stroke="#fff" stroke-width="1" fill="none"/><rect x="22" y="3" width="3" height="6" fill="none" stroke="#fff" stroke-width="1"/>
<path d="M18 12.5 h7 M18 15 h7 M18 17.5 h7" stroke="#fff" stroke-width="1.2" stroke-dasharray="1.5 1.2" fill="none"/>
<rect x="0" y="10.5" width="17" height="12.5" rx="1.5" fill="#1cc93c" stroke="#f4f8ff" stroke-width="1"/>
<path d="M4.2 16.5 l3.2 3 l5.4 -5.6" fill="none" stroke="#fff" stroke-width="2"/>
<rect x="7" y="23" width="3" height="2.2" fill="#1cc93c"/>
<path d="M0.5 26 h4 M6 26 h5 M12.5 26 h4" stroke="#1cc93c" stroke-width="1.6" fill="none"/></svg>
<div style="left:128.5px;top:563.6099999999999px;width:272.5px;height:1px;background:#e2e4e8;"></div>
<svg style="left:139.2px;top:540.545px;" width="11.6" height="15.2" viewBox="0 0 11.6 15.2"><path d="M3 2 L8.6 7.6 L3 13.2" fill="none" stroke="#8a8a8a" stroke-width="1.6" stroke-linecap="round" stroke-linejoin="round"/></svg>
<svg style="left:165.5px;top:539.645px;" width="18.5" height="16" viewBox="0 0 22 19"><path d="M1.5 4.5 a2 2 0 0 1 2 -2 h5 l2 2.6 h8.5 a1.6 1.6 0 0 1 1.6 1.6 v9.8 a1.6 1.6 0 0 1 -1.6 1.6 h-15.9 a1.6 1.6 0 0 1 -1.6 -1.6 z M8 5.1 h3" fill="none" stroke="#8a8a8a" stroke-width="2.1" stroke-linejoin="round"/></svg>
<div class="t" style="left:194.5px;top:527.68px;height:36.93px;line-height:36.93px;color:#222;padding-top:3.4px;">3定时器</div>
<svg style="left:367.5px;top:534.145px;" width="28" height="27" viewBox="0 0 28 27"><rect x="11" y="0" width="16.5" height="20" rx="1" fill="#1cc93c"/>
<path d="M17.5 3 v6 M20 3 v6" stroke="#fff" stroke-width="1" fill="none"/><rect x="22" y="3" width="3" height="6" fill="none" stroke="#fff" stroke-width="1"/>
<path d="M18 12.5 h7 M18 15 h7 M18 17.5 h7" stroke="#fff" stroke-width="1.2" stroke-dasharray="1.5 1.2" fill="none"/>
<rect x="0" y="10.5" width="17" height="12.5" rx="1.5" fill="#1cc93c" stroke="#f4f8ff" stroke-width="1"/>
<path d="M4.2 16.5 l3.2 3 l5.4 -5.6" fill="none" stroke="#fff" stroke-width="2"/>
<rect x="7" y="23" width="3" height="2.2" fill="#1cc93c"/>
<path d="M0.5 26 h4 M6 26 h5 M12.5 26 h4" stroke="#1cc93c" stroke-width="1.6" fill="none"/></svg>
<div style="left:128.5px;top:600.54px;width:272.5px;height:1px;background:#e2e4e8;"></div>
<svg style="left:139.2px;top:577.475px;" width="11.6" height="15.2" viewBox="0 0 11.6 15.2"><path d="M3 2 L8.6 7.6 L3 13.2" fill="none" stroke="#8a8a8a" stroke-width="1.6" stroke-linecap="round" stroke-linejoin="round"/></svg>
<svg style="left:165.5px;top:576.575px;" width="18.5" height="16" viewBox="0 0 22 19"><path d="M1.5 4.5 a2 2 0 0 1 2 -2 h5 l2 2.6 h8.5 a1.6 1.6 0 0 1 1.6 1.6 v9.8 a1.6 1.6 0 0 1 -1.6 1.6 h-15.9 a1.6 1.6 0 0 1 -1.6 -1.6 z M8 5.1 h3" fill="none" stroke="#8a8a8a" stroke-width="2.1" stroke-linejoin="round"/></svg>
<div class="t" style="left:194.5px;top:564.61px;height:36.93px;line-height:36.93px;color:#222;padding-top:3.4px;">4数值运算</div>
<svg style="left:367.5px;top:571.075px;" width="28" height="27" viewBox="0 0 28 27"><rect x="11" y="0" width="16.5" height="20" rx="1" fill="#1cc93c"/>
<path d="M17.5 3 v6 M20 3 v6" stroke="#fff" stroke-width="1" fill="none"/><rect x="22" y="3" width="3" height="6" fill="none" stroke="#fff" stroke-width="1"/>
<path d="M18 12.5 h7 M18 15 h7 M18 17.5 h7" stroke="#fff" stroke-width="1.2" stroke-dasharray="1.5 1.2" fill="none"/>
<rect x="0" y="10.5" width="17" height="12.5" rx="1.5" fill="#1cc93c" stroke="#f4f8ff" stroke-width="1"/>
<path d="M4.2 16.5 l3.2 3 l5.4 -5.6" fill="none" stroke="#fff" stroke-width="2"/>
<rect x="7" y="23" width="3" height="2.2" fill="#1cc93c"/>
<path d="M0.5 26 h4 M6 26 h5 M12.5 26 h4" stroke="#1cc93c" stroke-width="1.6" fill="none"/></svg>
<div style="left:128.5px;top:637.4699999999999px;width:272.5px;height:1px;background:#e2e4e8;"></div>
<svg style="left:139.2px;top:614.405px;" width="11.6" height="15.2" viewBox="0 0 11.6 15.2"><path d="M3 2 L8.6 7.6 L3 13.2" fill="none" stroke="#8a8a8a" stroke-width="1.6" stroke-linecap="round" stroke-linejoin="round"/></svg>
<svg style="left:165.5px;top:613.505px;" width="18.5" height="16" viewBox="0 0 22 19"><path d="M1.5 4.5 a2 2 0 0 1 2 -2 h5 l2 2.6 h8.5 a1.6 1.6 0 0 1 1.6 1.6 v9.8 a1.6 1.6 0 0 1 -1.6 1.6 h-15.9 a1.6 1.6 0 0 1 -1.6 -1.6 z M8 5.1 h3" fill="none" stroke="#8a8a8a" stroke-width="2.1" stroke-linejoin="round"/></svg>
<div class="t" style="left:194.5px;top:601.54px;height:36.93px;line-height:36.93px;color:#222;padding-top:3.4px;">5串移位运算</div>
<svg style="left:367.5px;top:608.005px;" width="28" height="27" viewBox="0 0 28 27"><rect x="11" y="0" width="16.5" height="20" rx="1" fill="#1cc93c"/>
<path d="M17.5 3 v6 M20 3 v6" stroke="#fff" stroke-width="1" fill="none"/><rect x="22" y="3" width="3" height="6" fill="none" stroke="#fff" stroke-width="1"/>
<path d="M18 12.5 h7 M18 15 h7 M18 17.5 h7" stroke="#fff" stroke-width="1.2" stroke-dasharray="1.5 1.2" fill="none"/>
<rect x="0" y="10.5" width="17" height="12.5" rx="1.5" fill="#1cc93c" stroke="#f4f8ff" stroke-width="1"/>
<path d="M4.2 16.5 l3.2 3 l5.4 -5.6" fill="none" stroke="#fff" stroke-width="2"/>
<rect x="7" y="23" width="3" height="2.2" fill="#1cc93c"/>
<path d="M0.5 26 h4 M6 26 h5 M12.5 26 h4" stroke="#1cc93c" stroke-width="1.6" fill="none"/></svg>
<div style="left:128.5px;top:674.4px;width:272.5px;height:1px;background:#e2e4e8;"></div>
<svg style="left:139.2px;top:651.335px;" width="11.6" height="15.2" viewBox="0 0 11.6 15.2"><path d="M3 2 L8.6 7.6 L3 13.2" fill="none" stroke="#8a8a8a" stroke-width="1.6" stroke-linecap="round" stroke-linejoin="round"/></svg>
<svg style="left:165.5px;top:650.4350000000001px;" width="18.5" height="16" viewBox="0 0 22 19"><path d="M1.5 4.5 a2 2 0 0 1 2 -2 h5 l2 2.6 h8.5 a1.6 1.6 0 0 1 1.6 1.6 v9.8 a1.6 1.6 0 0 1 -1.6 1.6 h-15.9 a1.6 1.6 0 0 1 -1.6 -1.6 z M8 5.1 h3" fill="none" stroke="#8a8a8a" stroke-width="2.1" stroke-linejoin="round"/></svg>
<div class="t" style="left:194.5px;top:638.47px;height:36.93px;line-height:36.93px;color:#222;padding-top:3.4px;">6位组装指令</div>
<svg style="left:367.5px;top:644.9350000000001px;" width="28" height="27" viewBox="0 0 28 27"><rect x="11" y="0" width="16.5" height="20" rx="1" fill="#1cc93c"/>
<path d="M17.5 3 v6 M20 3 v6" stroke="#fff" stroke-width="1" fill="none"/><rect x="22" y="3" width="3" height="6" fill="none" stroke="#fff" stroke-width="1"/>
<path d="M18 12.5 h7 M18 15 h7 M18 17.5 h7" stroke="#fff" stroke-width="1.2" stroke-dasharray="1.5 1.2" fill="none"/>
<rect x="0" y="10.5" width="17" height="12.5" rx="1.5" fill="#1cc93c" stroke="#f4f8ff" stroke-width="1"/>
<path d="M4.2 16.5 l3.2 3 l5.4 -5.6" fill="none" stroke="#fff" stroke-width="2"/>
<rect x="7" y="23" width="3" height="2.2" fill="#1cc93c"/>
<path d="M0.5 26 h4 M6 26 h5 M12.5 26 h4" stroke="#1cc93c" stroke-width="1.6" fill="none"/></svg>
<div style="left:128.5px;top:711.3299999999999px;width:272.5px;height:1px;background:#e2e4e8;"></div>
<svg style="left:139.2px;top:688.265px;" width="11.6" height="15.2" viewBox="0 0 11.6 15.2"><path d="M3 2 L8.6 7.6 L3 13.2" fill="none" stroke="#8a8a8a" stroke-width="1.6" stroke-linecap="round" stroke-linejoin="round"/></svg>
<svg style="left:165.5px;top:687.365px;" width="18.5" height="16" viewBox="0 0 22 19"><path d="M1.5 4.5 a2 2 0 0 1 2 -2 h5 l2 2.6 h8.5 a1.6 1.6 0 0 1 1.6 1.6 v9.8 a1.6 1.6 0 0 1 -1.6 1.6 h-15.9 a1.6 1.6 0 0 1 -1.6 -1.6 z M8 5.1 h3" fill="none" stroke="#8a8a8a" stroke-width="2.1" stroke-linejoin="round"/></svg>
<div class="t" style="left:194.5px;top:675.4px;height:36.93px;line-height:36.93px;color:#222;padding-top:3.4px;">7选择语句</div>
<svg style="left:367.5px;top:681.865px;" width="28" height="27" viewBox="0 0 28 27"><rect x="11" y="0" width="16.5" height="20" rx="1" fill="#1cc93c"/>
<path d="M17.5 3 v6 M20 3 v6" stroke="#fff" stroke-width="1" fill="none"/><rect x="22" y="3" width="3" height="6" fill="none" stroke="#fff" stroke-width="1"/>
<path d="M18 12.5 h7 M18 15 h7 M18 17.5 h7" stroke="#fff" stroke-width="1.2" stroke-dasharray="1.5 1.2" fill="none"/>
<rect x="0" y="10.5" width="17" height="12.5" rx="1.5" fill="#1cc93c" stroke="#f4f8ff" stroke-width="1"/>
<path d="M4.2 16.5 l3.2 3 l5.4 -5.6" fill="none" stroke="#fff" stroke-width="2"/>
<rect x="7" y="23" width="3" height="2.2" fill="#1cc93c"/>
<path d="M0.5 26 h4 M6 26 h5 M12.5 26 h4" stroke="#1cc93c" stroke-width="1.6" fill="none"/></svg>
<div style="left:128.5px;top:748.26px;width:272.5px;height:1px;background:#e2e4e8;"></div>
<svg style="left:139.2px;top:725.195px;" width="11.6" height="15.2" viewBox="0 0 11.6 15.2"><path d="M3 2 L8.6 7.6 L3 13.2" fill="none" stroke="#8a8a8a" stroke-width="1.6" stroke-linecap="round" stroke-linejoin="round"/></svg>
<svg style="left:165.5px;top:724.2950000000001px;" width="18.5" height="16" viewBox="0 0 22 19"><path d="M1.5 4.5 a2 2 0 0 1 2 -2 h5 l2 2.6 h8.5 a1.6 1.6 0 0 1 1.6 1.6 v9.8 a1.6 1.6 0 0 1 -1.6 1.6 h-15.9 a1.6 1.6 0 0 1 -1.6 -1.6 z M8 5.1 h3" fill="none" stroke="#8a8a8a" stroke-width="2.1" stroke-linejoin="round"/></svg>
<div class="t" style="left:194.5px;top:712.33px;height:36.93px;line-height:36.93px;color:#222;padding-top:3.4px;">8比较语句</div>
<svg style="left:367.5px;top:718.7950000000001px;" width="28" height="27" viewBox="0 0 28 27"><rect x="11" y="0" width="16.5" height="20" rx="1" fill="#1cc93c"/>
<path d="M17.5 3 v6 M20 3 v6" stroke="#fff" stroke-width="1" fill="none"/><rect x="22" y="3" width="3" height="6" fill="none" stroke="#fff" stroke-width="1"/>
<path d="M18 12.5 h7 M18 15 h7 M18 17.5 h7" stroke="#fff" stroke-width="1.2" stroke-dasharray="1.5 1.2" fill="none"/>
<rect x="0" y="10.5" width="17" height="12.5" rx="1.5" fill="#1cc93c" stroke="#f4f8ff" stroke-width="1"/>
<path d="M4.2 16.5 l3.2 3 l5.4 -5.6" fill="none" stroke="#fff" stroke-width="2"/>
<rect x="7" y="23" width="3" height="2.2" fill="#1cc93c"/>
<path d="M0.5 26 h4 M6 26 h5 M12.5 26 h4" stroke="#1cc93c" stroke-width="1.6" fill="none"/></svg>
<div style="left:128.5px;top:785.1899999999999px;width:272.5px;height:1px;background:#e2e4e8;"></div>
<svg style="left:138.7px;top:764.0250000000001px;" width="15.6" height="11.8" viewBox="0 0 15.6 11.8"><path d="M2 3 L7.8 8.8 L13.6 3" fill="none" stroke="#2878f0" stroke-width="1.6" stroke-linecap="round" stroke-linejoin="round"/></svg>
<svg style="left:165.5px;top:759.9250000000001px;" width="21.5" height="18.5" viewBox="0 0 23 19"><path d="M2 16.5 V4.2 a1.7 1.7 0 0 1 1.7 -1.7 h4.8 l2 2.5 h7.5 a1.7 1.7 0 0 1 1.7 1.7 v1.6 M2 16.5 l2.6 -7 a1.6 1.6 0 0 1 1.5 -1.1 h14.2 a1 1 0 0 1 1 1.4 l-2.3 6.4 a1.6 1.6 0 0 1 -1.5 1.1 h-14 a1.5 1.5 0 0 1 -1.5 -1.5 z" fill="none" stroke="#2878f0" stroke-width="1.9" stroke-linejoin="round"/></svg>
<div class="t" style="left:194.5px;top:749.26px;height:36.93px;line-height:36.93px;color:#2878f0;padding-top:3.4px;">9字符串运算</div>
<svg style="left:367.5px;top:755.725px;" width="28" height="27" viewBox="0 0 28 27"><rect x="11" y="0" width="16.5" height="20" rx="1" fill="#1cc93c"/>
<path d="M17.5 3 v6 M20 3 v6" stroke="#fff" stroke-width="1" fill="none"/><rect x="22" y="3" width="3" height="6" fill="none" stroke="#fff" stroke-width="1"/>
<path d="M18 12.5 h7 M18 15 h7 M18 17.5 h7" stroke="#fff" stroke-width="1.2" stroke-dasharray="1.5 1.2" fill="none"/>
<rect x="0" y="10.5" width="17" height="12.5" rx="1.5" fill="#1cc93c" stroke="#f4f8ff" stroke-width="1"/>
<path d="M4.2 16.5 l3.2 3 l5.4 -5.6" fill="none" stroke="#fff" stroke-width="2"/>
<rect x="7" y="23" width="3" height="2.2" fill="#1cc93c"/>
<path d="M0.5 26 h4 M6 26 h5 M12.5 26 h4" stroke="#1cc93c" stroke-width="1.6" fill="none"/></svg>
<div style="left:145.0px;top:822.12px;width:256.0px;height:1px;background:#e2e4e8;"></div>
<svg style="left:155.7px;top:799.0550000000001px;" width="11.6" height="15.2" viewBox="0 0 11.6 15.2"><path d="M3 2 L8.6 7.6 L3 13.2" fill="none" stroke="#8a8a8a" stroke-width="1.6" stroke-linecap="round" stroke-linejoin="round"/></svg>
<svg style="left:182.0px;top:798.1550000000001px;" width="18.5" height="16" viewBox="0 0 22 19"><path d="M1.5 4.5 a2 2 0 0 1 2 -2 h5 l2 2.6 h8.5 a1.6 1.6 0 0 1 1.6 1.6 v9.8 a1.6 1.6 0 0 1 -1.6 1.6 h-15.9 a1.6 1.6 0 0 1 -1.6 -1.6 z M8 5.1 h3" fill="none" stroke="#8a8a8a" stroke-width="2.1" stroke-linejoin="round"/></svg>
<div class="t" style="left:211.0px;top:786.19px;height:36.93px;line-height:36.93px;color:#222;padding-top:3.4px;">1求字符串长度⋯</div>
<svg style="left:367.5px;top:792.6550000000001px;" width="28" height="27" viewBox="0 0 28 27"><rect x="11" y="0" width="16.5" height="20" rx="1" fill="#1cc93c"/>
<path d="M17.5 3 v6 M20 3 v6" stroke="#fff" stroke-width="1" fill="none"/><rect x="22" y="3" width="3" height="6" fill="none" stroke="#fff" stroke-width="1"/>
<path d="M18 12.5 h7 M18 15 h7 M18 17.5 h7" stroke="#fff" stroke-width="1.2" stroke-dasharray="1.5 1.2" fill="none"/>
<rect x="0" y="10.5" width="17" height="12.5" rx="1.5" fill="#1cc93c" stroke="#f4f8ff" stroke-width="1"/>
<path d="M4.2 16.5 l3.2 3 l5.4 -5.6" fill="none" stroke="#fff" stroke-width="2"/>
<rect x="7" y="23" width="3" height="2.2" fill="#1cc93c"/>
<path d="M0.5 26 h4 M6 26 h5 M12.5 26 h4" stroke="#1cc93c" stroke-width="1.6" fill="none"/></svg>
<div style="left:145.0px;top:859.05px;width:256.0px;height:1px;background:#e2e4e8;"></div>
<svg style="left:155.7px;top:835.985px;" width="11.6" height="15.2" viewBox="0 0 11.6 15.2"><path d="M3 2 L8.6 7.6 L3 13.2" fill="none" stroke="#8a8a8a" stroke-width="1.6" stroke-linecap="round" stroke-linejoin="round"/></svg>
<svg style="left:182.0px;top:835.085px;" width="18.5" height="16" viewBox="0 0 22 19"><path d="M1.5 4.5 a2 2 0 0 1 2 -2 h5 l2 2.6 h8.5 a1.6 1.6 0 0 1 1.6 1.6 v9.8 a1.6 1.6 0 0 1 -1.6 1.6 h-15.9 a1.6 1.6 0 0 1 -1.6 -1.6 z M8 5.1 h3" fill="none" stroke="#8a8a8a" stroke-width="2.1" stroke-linejoin="round"/></svg>
<div class="t" style="left:211.0px;top:823.12px;height:36.93px;line-height:36.93px;color:#222;padding-top:3.4px;">2字符串左截取⋯</div>
<svg style="left:367.5px;top:829.585px;" width="28" height="27" viewBox="0 0 28 27"><rect x="11" y="0" width="16.5" height="20" rx="1" fill="#1cc93c"/>
<path d="M17.5 3 v6 M20 3 v6" stroke="#fff" stroke-width="1" fill="none"/><rect x="22" y="3" width="3" height="6" fill="none" stroke="#fff" stroke-width="1"/>
<path d="M18 12.5 h7 M18 15 h7 M18 17.5 h7" stroke="#fff" stroke-width="1.2" stroke-dasharray="1.5 1.2" fill="none"/>
<rect x="0" y="10.5" width="17" height="12.5" rx="1.5" fill="#1cc93c" stroke="#f4f8ff" stroke-width="1"/>
<path d="M4.2 16.5 l3.2 3 l5.4 -5.6" fill="none" stroke="#fff" stroke-width="2"/>
<rect x="7" y="23" width="3" height="2.2" fill="#1cc93c"/>
<path d="M0.5 26 h4 M6 26 h5 M12.5 26 h4" stroke="#1cc93c" stroke-width="1.6" fill="none"/></svg>
<div style="left:145.0px;top:895.9799999999999px;width:256.0px;height:1px;background:#e2e4e8;"></div>
<svg style="left:155.7px;top:872.915px;" width="11.6" height="15.2" viewBox="0 0 11.6 15.2"><path d="M3 2 L8.6 7.6 L3 13.2" fill="none" stroke="#8a8a8a" stroke-width="1.6" stroke-linecap="round" stroke-linejoin="round"/></svg>
<svg style="left:182.0px;top:872.015px;" width="18.5" height="16" viewBox="0 0 22 19"><path d="M1.5 4.5 a2 2 0 0 1 2 -2 h5 l2 2.6 h8.5 a1.6 1.6 0 0 1 1.6 1.6 v9.8 a1.6 1.6 0 0 1 -1.6 1.6 h-15.9 a1.6 1.6 0 0 1 -1.6 -1.6 z M8 5.1 h3" fill="none" stroke="#8a8a8a" stroke-width="2.1" stroke-linejoin="round"/></svg>
<div class="t" style="left:211.0px;top:860.05px;height:36.93px;line-height:36.93px;color:#222;padding-top:3.4px;">3字符串内截取⋯</div>
<svg style="left:367.5px;top:866.515px;" width="28" height="27" viewBox="0 0 28 27"><rect x="11" y="0" width="16.5" height="20" rx="1" fill="#1cc93c"/>
<path d="M17.5 3 v6 M20 3 v6" stroke="#fff" stroke-width="1" fill="none"/><rect x="22" y="3" width="3" height="6" fill="none" stroke="#fff" stroke-width="1"/>
<path d="M18 12.5 h7 M18 15 h7 M18 17.5 h7" stroke="#fff" stroke-width="1.2" stroke-dasharray="1.5 1.2" fill="none"/>
<rect x="0" y="10.5" width="17" height="12.5" rx="1.5" fill="#1cc93c" stroke="#f4f8ff" stroke-width="1"/>
<path d="M4.2 16.5 l3.2 3 l5.4 -5.6" fill="none" stroke="#fff" stroke-width="2"/>
<rect x="7" y="23" width="3" height="2.2" fill="#1cc93c"/>
<path d="M0.5 26 h4 M6 26 h5 M12.5 26 h4" stroke="#1cc93c" stroke-width="1.6" fill="none"/></svg>
<div style="left:145.0px;top:932.91px;width:256.0px;height:1px;background:#e2e4e8;"></div>
<svg style="left:155.7px;top:909.845px;" width="11.6" height="15.2" viewBox="0 0 11.6 15.2"><path d="M3 2 L8.6 7.6 L3 13.2" fill="none" stroke="#8a8a8a" stroke-width="1.6" stroke-linecap="round" stroke-linejoin="round"/></svg>
<svg style="left:182.0px;top:908.945px;" width="18.5" height="16" viewBox="0 0 22 19"><path d="M1.5 4.5 a2 2 0 0 1 2 -2 h5 l2 2.6 h8.5 a1.6 1.6 0 0 1 1.6 1.6 v9.8 a1.6 1.6 0 0 1 -1.6 1.6 h-15.9 a1.6 1.6 0 0 1 -1.6 -1.6 z M8 5.1 h3" fill="none" stroke="#8a8a8a" stroke-width="2.1" stroke-linejoin="round"/></svg>
<div class="t" style="left:211.0px;top:896.98px;height:36.93px;line-height:36.93px;color:#222;padding-top:3.4px;">4字符串右截取⋯</div>
<svg style="left:367.5px;top:903.445px;" width="28" height="27" viewBox="0 0 28 27"><rect x="11" y="0" width="16.5" height="20" rx="1" fill="#1cc93c"/>
<path d="M17.5 3 v6 M20 3 v6" stroke="#fff" stroke-width="1" fill="none"/><rect x="22" y="3" width="3" height="6" fill="none" stroke="#fff" stroke-width="1"/>
<path d="M18 12.5 h7 M18 15 h7 M18 17.5 h7" stroke="#fff" stroke-width="1.2" stroke-dasharray="1.5 1.2" fill="none"/>
<rect x="0" y="10.5" width="17" height="12.5" rx="1.5" fill="#1cc93c" stroke="#f4f8ff" stroke-width="1"/>
<path d="M4.2 16.5 l3.2 3 l5.4 -5.6" fill="none" stroke="#fff" stroke-width="2"/>
<rect x="7" y="23" width="3" height="2.2" fill="#1cc93c"/>
<path d="M0.5 26 h4 M6 26 h5 M12.5 26 h4" stroke="#1cc93c" stroke-width="1.6" fill="none"/></svg>
<div style="left:145.0px;top:969.8399999999999px;width:256.0px;height:1px;background:#e2e4e8;"></div>
<svg style="left:155.7px;top:946.775px;" width="11.6" height="15.2" viewBox="0 0 11.6 15.2"><path d="M3 2 L8.6 7.6 L3 13.2" fill="none" stroke="#8a8a8a" stroke-width="1.6" stroke-linecap="round" stroke-linejoin="round"/></svg>
<svg style="left:182.0px;top:945.875px;" width="18.5" height="16" viewBox="0 0 22 19"><path d="M1.5 4.5 a2 2 0 0 1 2 -2 h5 l2 2.6 h8.5 a1.6 1.6 0 0 1 1.6 1.6 v9.8 a1.6 1.6 0 0 1 -1.6 1.6 h-15.9 a1.6 1.6 0 0 1 -1.6 -1.6 z M8 5.1 h3" fill="none" stroke="#8a8a8a" stroke-width="2.1" stroke-linejoin="round"/></svg>
<div class="t" style="left:211.0px;top:933.91px;height:36.93px;line-height:36.93px;color:#222;padding-top:3.4px;">5可扩展的字符⋯</div>
<svg style="left:367.5px;top:940.375px;" width="28" height="27" viewBox="0 0 28 27"><rect x="11" y="0" width="16.5" height="20" rx="1" fill="#1cc93c"/>
<path d="M17.5 3 v6 M20 3 v6" stroke="#fff" stroke-width="1" fill="none"/><rect x="22" y="3" width="3" height="6" fill="none" stroke="#fff" stroke-width="1"/>
<path d="M18 12.5 h7 M18 15 h7 M18 17.5 h7" stroke="#fff" stroke-width="1.2" stroke-dasharray="1.5 1.2" fill="none"/>
<rect x="0" y="10.5" width="17" height="12.5" rx="1.5" fill="#1cc93c" stroke="#f4f8ff" stroke-width="1"/>
<path d="M4.2 16.5 l3.2 3 l5.4 -5.6" fill="none" stroke="#fff" stroke-width="2"/>
<rect x="7" y="23" width="3" height="2.2" fill="#1cc93c"/>
<path d="M0.5 26 h4 M6 26 h5 M12.5 26 h4" stroke="#1cc93c" stroke-width="1.6" fill="none"/></svg>
<div style="left:145.0px;top:1006.77px;width:256.0px;height:1px;background:#e2e4e8;"></div>
<svg style="left:155.7px;top:983.705px;" width="11.6" height="15.2" viewBox="0 0 11.6 15.2"><path d="M3 2 L8.6 7.6 L3 13.2" fill="none" stroke="#8a8a8a" stroke-width="1.6" stroke-linecap="round" stroke-linejoin="round"/></svg>
<svg style="left:182.0px;top:982.8050000000001px;" width="18.5" height="16" viewBox="0 0 22 19"><path d="M1.5 4.5 a2 2 0 0 1 2 -2 h5 l2 2.6 h8.5 a1.6 1.6 0 0 1 1.6 1.6 v9.8 a1.6 1.6 0 0 1 -1.6 1.6 h-15.9 a1.6 1.6 0 0 1 -1.6 -1.6 z M8 5.1 h3" fill="none" stroke="#8a8a8a" stroke-width="2.1" stroke-linejoin="round"/></svg>
<div class="t" style="left:211.0px;top:970.84px;height:36.93px;line-height:36.93px;color:#222;padding-top:3.4px;">6字符串插入函数</div>
<svg style="left:367.5px;top:977.3050000000001px;" width="28" height="27" viewBox="0 0 28 27"><rect x="11" y="0" width="16.5" height="20" rx="1" fill="#1cc93c"/>
<path d="M17.5 3 v6 M20 3 v6" stroke="#fff" stroke-width="1" fill="none"/><rect x="22" y="3" width="3" height="6" fill="none" stroke="#fff" stroke-width="1"/>
<path d="M18 12.5 h7 M18 15 h7 M18 17.5 h7" stroke="#fff" stroke-width="1.2" stroke-dasharray="1.5 1.2" fill="none"/>
<rect x="0" y="10.5" width="17" height="12.5" rx="1.5" fill="#1cc93c" stroke="#f4f8ff" stroke-width="1"/>
<path d="M4.2 16.5 l3.2 3 l5.4 -5.6" fill="none" stroke="#fff" stroke-width="2"/>
<rect x="7" y="23" width="3" height="2.2" fill="#1cc93c"/>
<path d="M0.5 26 h4 M6 26 h5 M12.5 26 h4" stroke="#1cc93c" stroke-width="1.6" fill="none"/></svg>
<div style="left:145.0px;top:1043.7px;width:256.0px;height:1px;background:#e2e4e8;"></div>
<svg style="left:155.7px;top:1020.6349999999999px;" width="11.6" height="15.2" viewBox="0 0 11.6 15.2"><path d="M3 2 L8.6 7.6 L3 13.2" fill="none" stroke="#8a8a8a" stroke-width="1.6" stroke-linecap="round" stroke-linejoin="round"/></svg>
<svg style="left:182.0px;top:1019.7349999999999px;" width="18.5" height="16" viewBox="0 0 22 19"><path d="M1.5 4.5 a2 2 0 0 1 2 -2 h5 l2 2.6 h8.5 a1.6 1.6 0 0 1 1.6 1.6 v9.8 a1.6 1.6 0 0 1 -1.6 1.6 h-15.9 a1.6 1.6 0 0 1 -1.6 -1.6 z M8 5.1 h3" fill="none" stroke="#8a8a8a" stroke-width="2.1" stroke-linejoin="round"/></svg>
<div class="t" style="left:211.0px;top:1007.77px;height:36.93px;line-height:36.93px;color:#222;padding-top:3.4px;">7符串删除函数</div>
<svg style="left:367.5px;top:1014.2349999999999px;" width="28" height="27" viewBox="0 0 28 27"><rect x="11" y="0" width="16.5" height="20" rx="1" fill="#1cc93c"/>
<path d="M17.5 3 v6 M20 3 v6" stroke="#fff" stroke-width="1" fill="none"/><rect x="22" y="3" width="3" height="6" fill="none" stroke="#fff" stroke-width="1"/>
<path d="M18 12.5 h7 M18 15 h7 M18 17.5 h7" stroke="#fff" stroke-width="1.2" stroke-dasharray="1.5 1.2" fill="none"/>
<rect x="0" y="10.5" width="17" height="12.5" rx="1.5" fill="#1cc93c" stroke="#f4f8ff" stroke-width="1"/>
<path d="M4.2 16.5 l3.2 3 l5.4 -5.6" fill="none" stroke="#fff" stroke-width="2"/>
<rect x="7" y="23" width="3" height="2.2" fill="#1cc93c"/>
<path d="M0.5 26 h4 M6 26 h5 M12.5 26 h4" stroke="#1cc93c" stroke-width="1.6" fill="none"/></svg>
<div style="left:145.0px;top:1080.63px;width:256.0px;height:1px;background:#e2e4e8;"></div>
<svg style="left:155.7px;top:1057.565px;" width="11.6" height="15.2" viewBox="0 0 11.6 15.2"><path d="M3 2 L8.6 7.6 L3 13.2" fill="none" stroke="#8a8a8a" stroke-width="1.6" stroke-linecap="round" stroke-linejoin="round"/></svg>
<svg style="left:182.0px;top:1056.665px;" width="18.5" height="16" viewBox="0 0 22 19"><path d="M1.5 4.5 a2 2 0 0 1 2 -2 h5 l2 2.6 h8.5 a1.6 1.6 0 0 1 1.6 1.6 v9.8 a1.6 1.6 0 0 1 -1.6 1.6 h-15.9 a1.6 1.6 0 0 1 -1.6 -1.6 z M8 5.1 h3" fill="none" stroke="#8a8a8a" stroke-width="2.1" stroke-linejoin="round"/></svg>
<div class="t" style="left:211.0px;top:1044.7px;height:36.93px;line-height:36.93px;color:#222;padding-top:3.4px;">8字符串替代函数</div>
<svg style="left:367.5px;top:1051.165px;" width="28" height="27" viewBox="0 0 28 27"><rect x="11" y="0" width="16.5" height="20" rx="1" fill="#1cc93c"/>
<path d="M17.5 3 v6 M20 3 v6" stroke="#fff" stroke-width="1" fill="none"/><rect x="22" y="3" width="3" height="6" fill="none" stroke="#fff" stroke-width="1"/>
<path d="M18 12.5 h7 M18 15 h7 M18 17.5 h7" stroke="#fff" stroke-width="1.2" stroke-dasharray="1.5 1.2" fill="none"/>
<rect x="0" y="10.5" width="17" height="12.5" rx="1.5" fill="#1cc93c" stroke="#f4f8ff" stroke-width="1"/>
<path d="M4.2 16.5 l3.2 3 l5.4 -5.6" fill="none" stroke="#fff" stroke-width="2"/>
<rect x="7" y="23" width="3" height="2.2" fill="#1cc93c"/>
<path d="M0.5 26 h4 M6 26 h5 M12.5 26 h4" stroke="#1cc93c" stroke-width="1.6" fill="none"/></svg>
<div style="left:145.0px;top:1117.5600000000002px;width:256.0px;height:1px;background:#e2e4e8;"></div>
<svg style="left:155.7px;top:1094.4950000000001px;" width="11.6" height="15.2" viewBox="0 0 11.6 15.2"><path d="M3 2 L8.6 7.6 L3 13.2" fill="none" stroke="#8a8a8a" stroke-width="1.6" stroke-linecap="round" stroke-linejoin="round"/></svg>
<svg style="left:182.0px;top:1093.595px;" width="18.5" height="16" viewBox="0 0 22 19"><path d="M1.5 4.5 a2 2 0 0 1 2 -2 h5 l2 2.6 h8.5 a1.6 1.6 0 0 1 1.6 1.6 v9.8 a1.6 1.6 0 0 1 -1.6 1.6 h-15.9 a1.6 1.6 0 0 1 -1.6 -1.6 z M8 5.1 h3" fill="none" stroke="#8a8a8a" stroke-width="2.1" stroke-linejoin="round"/></svg>
<div class="t" style="left:211.0px;top:1081.63px;height:36.93px;line-height:36.93px;color:#222;padding-top:3.4px;">9字符串查找函数</div>
<svg style="left:367.5px;top:1088.095px;" width="28" height="27" viewBox="0 0 28 27"><rect x="11" y="0" width="16.5" height="20" rx="1" fill="#1cc93c"/>
<path d="M17.5 3 v6 M20 3 v6" stroke="#fff" stroke-width="1" fill="none"/><rect x="22" y="3" width="3" height="6" fill="none" stroke="#fff" stroke-width="1"/>
<path d="M18 12.5 h7 M18 15 h7 M18 17.5 h7" stroke="#fff" stroke-width="1.2" stroke-dasharray="1.5 1.2" fill="none"/>
<rect x="0" y="10.5" width="17" height="12.5" rx="1.5" fill="#1cc93c" stroke="#f4f8ff" stroke-width="1"/>
<path d="M4.2 16.5 l3.2 3 l5.4 -5.6" fill="none" stroke="#fff" stroke-width="2"/>
<rect x="7" y="23" width="3" height="2.2" fill="#1cc93c"/>
<path d="M0.5 26 h4 M6 26 h5 M12.5 26 h4" stroke="#1cc93c" stroke-width="1.6" fill="none"/></svg>
<div style="left:145.0px;top:1154.49px;width:256.0px;height:1px;background:#e2e4e8;"></div>
<svg style="left:155.2px;top:1133.3249999999998px;" width="15.6" height="11.8" viewBox="0 0 15.6 11.8"><path d="M2 3 L7.8 8.8 L13.6 3" fill="none" stroke="#2878f0" stroke-width="1.6" stroke-linecap="round" stroke-linejoin="round"/></svg>
<svg style="left:182.0px;top:1129.225px;" width="21.5" height="18.5" viewBox="0 0 23 19"><path d="M2 16.5 V4.2 a1.7 1.7 0 0 1 1.7 -1.7 h4.8 l2 2.5 h7.5 a1.7 1.7 0 0 1 1.7 1.7 v1.6 M2 16.5 l2.6 -7 a1.6 1.6 0 0 1 1.5 -1.1 h14.2 a1 1 0 0 1 1 1.4 l-2.3 6.4 a1.6 1.6 0 0 1 -1.5 1.1 h-14 a1.5 1.5 0 0 1 -1.5 -1.5 z" fill="none" stroke="#2878f0" stroke-width="1.9" stroke-linejoin="round"/></svg>
<div class="t" style="left:211.0px;top:1118.56px;height:36.93px;line-height:36.93px;color:#2878f0;padding-top:3.4px;"><span style="letter-spacing:-0.85px">CHARS_TO_S</span>⋯</div>
<svg style="left:367.5px;top:1125.0249999999999px;" width="28" height="27" viewBox="0 0 28 27"><rect x="11" y="0" width="16.5" height="20" rx="1" fill="#1cc93c"/>
<path d="M17.5 3 v6 M20 3 v6" stroke="#fff" stroke-width="1" fill="none"/><rect x="22" y="3" width="3" height="6" fill="none" stroke="#fff" stroke-width="1"/>
<path d="M18 12.5 h7 M18 15 h7 M18 17.5 h7" stroke="#fff" stroke-width="1.2" stroke-dasharray="1.5 1.2" fill="none"/>
<rect x="0" y="10.5" width="17" height="12.5" rx="1.5" fill="#1cc93c" stroke="#f4f8ff" stroke-width="1"/>
<path d="M4.2 16.5 l3.2 3 l5.4 -5.6" fill="none" stroke="#fff" stroke-width="2"/>
<rect x="7" y="23" width="3" height="2.2" fill="#1cc93c"/>
<path d="M0.5 26 h4 M6 26 h5 M12.5 26 h4" stroke="#1cc93c" stroke-width="1.6" fill="none"/></svg>
<div style="left:185.5px;top:1192.79px;width:215.5px;height:1px;background:#e2e4e8;"></div>
<svg style="left:198.5px;top:1167.64px;" width="21" height="16" viewBox="0 0 21 16"><path d="M6 3.5 L1.5 8 L6 12.5 M15 3.5 L19.5 8 L15 12.5 M12.3 1.5 L8.7 14.5" fill="none" stroke="#333" stroke-width="1.7" stroke-linecap="round" stroke-linejoin="round"/></svg>
<div class="t" style="left:227.5px;top:1155.49px;height:38.3px;line-height:38.3px;color:#222;padding-top:1px;letter-spacing:-0.6px;">PU_62</div>
<div style="left:185.5px;top:1231.09px;width:215.5px;height:1px;background:#e2e4e8;"></div>
<svg style="left:198.5px;top:1205.94px;" width="21" height="16" viewBox="0 0 21 16"><path d="M6 3.5 L1.5 8 L6 12.5 M15 3.5 L19.5 8 L15 12.5 M12.3 1.5 L8.7 14.5" fill="none" stroke="#333" stroke-width="1.7" stroke-linecap="round" stroke-linejoin="round"/></svg>
<div class="t" style="left:227.5px;top:1193.79px;height:38.3px;line-height:38.3px;color:#222;padding-top:1px;letter-spacing:-0.6px;">PU_82</div>
<div style="left:145.0px;top:1268.02px;width:256.0px;height:1px;background:#e2e4e8;"></div>
<svg style="left:155.2px;top:1246.8549999999998px;" width="15.6" height="11.8" viewBox="0 0 15.6 11.8"><path d="M2 3 L7.8 8.8 L13.6 3" fill="none" stroke="#2878f0" stroke-width="1.6" stroke-linecap="round" stroke-linejoin="round"/></svg>
<svg style="left:182.0px;top:1242.7549999999999px;" width="21.5" height="18.5" viewBox="0 0 23 19"><path d="M2 16.5 V4.2 a1.7 1.7 0 0 1 1.7 -1.7 h4.8 l2 2.5 h7.5 a1.7 1.7 0 0 1 1.7 1.7 v1.6 M2 16.5 l2.6 -7 a1.6 1.6 0 0 1 1.5 -1.1 h14.2 a1 1 0 0 1 1 1.4 l-2.3 6.4 a1.6 1.6 0 0 1 -1.5 1.1 h-14 a1.5 1.5 0 0 1 -1.5 -1.5 z" fill="none" stroke="#2878f0" stroke-width="1.9" stroke-linejoin="round"/></svg>
<div class="t" style="left:211.0px;top:1232.09px;height:36.93px;line-height:36.93px;color:#2878f0;padding-top:3.4px;"><span style="letter-spacing:-0.85px">STRING_TO_C</span>⋯</div>
<svg style="left:367.5px;top:1238.5549999999998px;" width="28" height="27" viewBox="0 0 28 27"><rect x="11" y="0" width="16.5" height="20" rx="1" fill="#1cc93c"/>
<path d="M17.5 3 v6 M20 3 v6" stroke="#fff" stroke-width="1" fill="none"/><rect x="22" y="3" width="3" height="6" fill="none" stroke="#fff" stroke-width="1"/>
<path d="M18 12.5 h7 M18 15 h7 M18 17.5 h7" stroke="#fff" stroke-width="1.2" stroke-dasharray="1.5 1.2" fill="none"/>
<rect x="0" y="10.5" width="17" height="12.5" rx="1.5" fill="#1cc93c" stroke="#f4f8ff" stroke-width="1"/>
<path d="M4.2 16.5 l3.2 3 l5.4 -5.6" fill="none" stroke="#fff" stroke-width="2"/>
<rect x="7" y="23" width="3" height="2.2" fill="#1cc93c"/>
<path d="M0.5 26 h4 M6 26 h5 M12.5 26 h4" stroke="#1cc93c" stroke-width="1.6" fill="none"/></svg>
<div style="left:185.5px;top:1306.32px;width:215.5px;height:1px;background:#e2e4e8;"></div>
<svg style="left:198.5px;top:1281.17px;" width="21" height="16" viewBox="0 0 21 16"><path d="M6 3.5 L1.5 8 L6 12.5 M15 3.5 L19.5 8 L15 12.5 M12.3 1.5 L8.7 14.5" fill="none" stroke="#333" stroke-width="1.7" stroke-linecap="round" stroke-linejoin="round"/></svg>
<div class="t" style="left:227.5px;top:1269.02px;height:38.3px;line-height:38.3px;color:#222;padding-top:1px;letter-spacing:-0.6px;">PU_63</div>
<div style="left:62px;top:1309.32px;width:350px;height:36.5px;background:#e6e6e6;border-radius:6px;"></div>
<svg style="left:198.5px;top:1319.47px;" width="21" height="16" viewBox="0 0 21 16"><path d="M6 3.5 L1.5 8 L6 12.5 M15 3.5 L19.5 8 L15 12.5 M12.3 1.5 L8.7 14.5" fill="none" stroke="#333" stroke-width="1.7" stroke-linecap="round" stroke-linejoin="round"/></svg>
<div class="t" style="left:227.5px;top:1307.32px;height:38.3px;line-height:38.3px;color:#222;padding-top:1px;letter-spacing:-0.6px;">PU_73</div>
<div style="left:128.5px;top:1381.55px;width:272.5px;height:1px;background:#e2e4e8;"></div>
<svg style="left:139.2px;top:1358.485px;" width="11.6" height="15.2" viewBox="0 0 11.6 15.2"><path d="M3 2 L8.6 7.6 L3 13.2" fill="none" stroke="#8a8a8a" stroke-width="1.6" stroke-linecap="round" stroke-linejoin="round"/></svg>
<svg style="left:165.5px;top:1357.5849999999998px;" width="18.5" height="16" viewBox="0 0 22 19"><path d="M1.5 4.5 a2 2 0 0 1 2 -2 h5 l2 2.6 h8.5 a1.6 1.6 0 0 1 1.6 1.6 v9.8 a1.6 1.6 0 0 1 -1.6 1.6 h-15.9 a1.6 1.6 0 0 1 -1.6 -1.6 z M8 5.1 h3" fill="none" stroke="#8a8a8a" stroke-width="2.1" stroke-linejoin="round"/></svg>
<div class="t" style="left:194.5px;top:1345.62px;height:36.93px;line-height:36.93px;color:#222;padding-top:3.4px;">10数据转换语句</div>
<svg style="left:367.5px;top:1352.0849999999998px;" width="28" height="27" viewBox="0 0 28 27"><rect x="11" y="0" width="16.5" height="20" rx="1" fill="#1cc93c"/>
<path d="M17.5 3 v6 M20 3 v6" stroke="#fff" stroke-width="1" fill="none"/><rect x="22" y="3" width="3" height="6" fill="none" stroke="#fff" stroke-width="1"/>
<path d="M18 12.5 h7 M18 15 h7 M18 17.5 h7" stroke="#fff" stroke-width="1.2" stroke-dasharray="1.5 1.2" fill="none"/>
<rect x="0" y="10.5" width="17" height="12.5" rx="1.5" fill="#1cc93c" stroke="#f4f8ff" stroke-width="1"/>
<path d="M4.2 16.5 l3.2 3 l5.4 -5.6" fill="none" stroke="#fff" stroke-width="2"/>
<rect x="7" y="23" width="3" height="2.2" fill="#1cc93c"/>
<path d="M0.5 26 h4 M6 26 h5 M12.5 26 h4" stroke="#1cc93c" stroke-width="1.6" fill="none"/></svg>
<div style="left:128.5px;top:1418.48px;width:272.5px;height:1px;background:#e2e4e8;"></div>
<svg style="left:139.2px;top:1395.415px;" width="11.6" height="15.2" viewBox="0 0 11.6 15.2"><path d="M3 2 L8.6 7.6 L3 13.2" fill="none" stroke="#8a8a8a" stroke-width="1.6" stroke-linecap="round" stroke-linejoin="round"/></svg>
<svg style="left:165.5px;top:1394.5149999999999px;" width="18.5" height="16" viewBox="0 0 22 19"><path d="M1.5 4.5 a2 2 0 0 1 2 -2 h5 l2 2.6 h8.5 a1.6 1.6 0 0 1 1.6 1.6 v9.8 a1.6 1.6 0 0 1 -1.6 1.6 h-15.9 a1.6 1.6 0 0 1 -1.6 -1.6 z M8 5.1 h3" fill="none" stroke="#8a8a8a" stroke-width="2.1" stroke-linejoin="round"/></svg>
<div class="t" style="left:194.5px;top:1382.55px;height:36.93px;line-height:36.93px;color:#222;padding-top:3.4px;">11数组及结构体⋯</div>
<svg style="left:367.5px;top:1389.0149999999999px;" width="28" height="27" viewBox="0 0 28 27"><rect x="11" y="0" width="16.5" height="20" rx="1" fill="#1cc93c"/>
<path d="M17.5 3 v6 M20 3 v6" stroke="#fff" stroke-width="1" fill="none"/><rect x="22" y="3" width="3" height="6" fill="none" stroke="#fff" stroke-width="1"/>
<path d="M18 12.5 h7 M18 15 h7 M18 17.5 h7" stroke="#fff" stroke-width="1.2" stroke-dasharray="1.5 1.2" fill="none"/>
<rect x="0" y="10.5" width="17" height="12.5" rx="1.5" fill="#1cc93c" stroke="#f4f8ff" stroke-width="1"/>
<path d="M4.2 16.5 l3.2 3 l5.4 -5.6" fill="none" stroke="#fff" stroke-width="2"/>
<rect x="7" y="23" width="3" height="2.2" fill="#1cc93c"/>
<path d="M0.5 26 h4 M6 26 h5 M12.5 26 h4" stroke="#1cc93c" stroke-width="1.6" fill="none"/></svg>
<div style="left:128.5px;top:1455.41px;width:272.5px;height:1px;background:#e2e4e8;"></div>
<svg style="left:139.2px;top:1432.345px;" width="11.6" height="15.2" viewBox="0 0 11.6 15.2"><path d="M3 2 L8.6 7.6 L3 13.2" fill="none" stroke="#8a8a8a" stroke-width="1.6" stroke-linecap="round" stroke-linejoin="round"/></svg>
<svg style="left:165.5px;top:1431.445px;" width="18.5" height="16" viewBox="0 0 22 19"><path d="M1.5 4.5 a2 2 0 0 1 2 -2 h5 l2 2.6 h8.5 a1.6 1.6 0 0 1 1.6 1.6 v9.8 a1.6 1.6 0 0 1 -1.6 1.6 h-15.9 a1.6 1.6 0 0 1 -1.6 -1.6 z M8 5.1 h3" fill="none" stroke="#8a8a8a" stroke-width="2.1" stroke-linejoin="round"/></svg>
<div class="t" style="left:194.5px;top:1419.48px;height:36.93px;line-height:36.93px;color:#222;padding-top:3.4px;">12标准验证功能</div>
<svg style="left:367.5px;top:1425.945px;" width="28" height="27" viewBox="0 0 28 27"><rect x="11" y="0" width="16.5" height="20" rx="1" fill="#1cc93c"/>
<path d="M17.5 3 v6 M20 3 v6" stroke="#fff" stroke-width="1" fill="none"/><rect x="22" y="3" width="3" height="6" fill="none" stroke="#fff" stroke-width="1"/>
<path d="M18 12.5 h7 M18 15 h7 M18 17.5 h7" stroke="#fff" stroke-width="1.2" stroke-dasharray="1.5 1.2" fill="none"/>
<rect x="0" y="10.5" width="17" height="12.5" rx="1.5" fill="#1cc93c" stroke="#f4f8ff" stroke-width="1"/>
<path d="M4.2 16.5 l3.2 3 l5.4 -5.6" fill="none" stroke="#fff" stroke-width="2"/>
<rect x="7" y="23" width="3" height="2.2" fill="#1cc93c"/>
<path d="M0.5 26 h4 M6 26 h5 M12.5 26 h4" stroke="#1cc93c" stroke-width="1.6" fill="none"/></svg>
<div style="left:112.0px;top:1492.3400000000001px;width:289.0px;height:1px;background:#e2e4e8;"></div>
<svg style="left:122.2px;top:1471.175px;" width="15.6" height="11.8" viewBox="0 0 15.6 11.8"><path d="M2 3 L7.8 8.8 L13.6 3" fill="none" stroke="#2878f0" stroke-width="1.6" stroke-linecap="round" stroke-linejoin="round"/></svg>
<svg style="left:149.0px;top:1467.075px;" width="21.5" height="18.5" viewBox="0 0 23 19"><path d="M2 16.5 V4.2 a1.7 1.7 0 0 1 1.7 -1.7 h4.8 l2 2.5 h7.5 a1.7 1.7 0 0 1 1.7 1.7 v1.6 M2 16.5 l2.6 -7 a1.6 1.6 0 0 1 1.5 -1.1 h14.2 a1 1 0 0 1 1 1.4 l-2.3 6.4 a1.6 1.6 0 0 1 -1.5 1.1 h-14 a1.5 1.5 0 0 1 -1.5 -1.5 z" fill="none" stroke="#2878f0" stroke-width="1.9" stroke-linejoin="round"/></svg>
<div class="t" style="left:178.0px;top:1456.41px;height:36.93px;line-height:36.93px;color:#2878f0;padding-top:3.4px;">任务</div>
<svg style="left:367.5px;top:1462.875px;" width="28" height="27" viewBox="0 0 28 27"><rect x="11" y="0" width="16.5" height="20" rx="1" fill="#1cc93c"/>
<path d="M17.5 3 v6 M20 3 v6" stroke="#fff" stroke-width="1" fill="none"/><rect x="22" y="3" width="3" height="6" fill="none" stroke="#fff" stroke-width="1"/>
<path d="M18 12.5 h7 M18 15 h7 M18 17.5 h7" stroke="#fff" stroke-width="1.2" stroke-dasharray="1.5 1.2" fill="none"/>
<rect x="0" y="10.5" width="17" height="12.5" rx="1.5" fill="#1cc93c" stroke="#f4f8ff" stroke-width="1"/>
<path d="M4.2 16.5 l3.2 3 l5.4 -5.6" fill="none" stroke="#fff" stroke-width="2"/>
<rect x="7" y="23" width="3" height="2.2" fill="#1cc93c"/>
<path d="M0.5 26 h4 M6 26 h5 M12.5 26 h4" stroke="#1cc93c" stroke-width="1.6" fill="none"/></svg>
<div style="left:152.5px;top:1530.24px;width:248.5px;height:1px;background:#e2e4e8;"></div>
<svg style="left:165.0px;top:1502.29px;" width="22" height="22" viewBox="0 0 22 22"><path d="M2.5 10 V8 a4.5 4.5 0 0 1 4.5 -4.5 h12 M15.5 0.8 L19 3.5 L15.5 6.2 M19.5 11 v2.5 a4.5 4.5 0 0 1 -4.5 4.5 h-12 M6.5 15.3 L3 18 L6.5 20.7" fill="none" stroke="#333" stroke-width="1.7" stroke-linecap="round" stroke-linejoin="round"/><path d="M10 6 V10 L13.5 13" fill="none" stroke="#333" stroke-width="1.7" stroke-linecap="round" stroke-linejoin="round"/></svg>
<div class="t" style="left:194.5px;top:1493.34px;height:37.9px;line-height:37.9px;color:#222;padding-top:2px;">Cycle_1&lt;10&gt;</div>
<div style="left:152.5px;top:1568.14px;width:248.5px;height:1px;background:#e2e4e8;"></div>
<svg style="left:165.0px;top:1540.19px;" width="22" height="22" viewBox="0 0 22 22"><path d="M2.5 10 V8 a4.5 4.5 0 0 1 4.5 -4.5 h12 M15.5 0.8 L19 3.5 L15.5 6.2 M19.5 11 v2.5 a4.5 4.5 0 0 1 -4.5 4.5 h-12 M6.5 15.3 L3 18 L6.5 20.7" fill="none" stroke="#333" stroke-width="1.7" stroke-linecap="round" stroke-linejoin="round"/><path d="M10 6 V10 L13.5 13" fill="none" stroke="#333" stroke-width="1.7" stroke-linecap="round" stroke-linejoin="round"/></svg>
<div class="t" style="left:194.5px;top:1531.24px;height:37.9px;line-height:37.9px;color:#222;padding-top:2px;">Cycle_2&lt;11&gt;</div>
<div style="left:152.5px;top:1606.0400000000002px;width:248.5px;height:1px;background:#e2e4e8;"></div>
<svg style="left:165.0px;top:1578.0900000000001px;" width="22" height="22" viewBox="0 0 22 22"><path d="M2.5 10 V8 a4.5 4.5 0 0 1 4.5 -4.5 h12 M15.5 0.8 L19 3.5 L15.5 6.2 M19.5 11 v2.5 a4.5 4.5 0 0 1 -4.5 4.5 h-12 M6.5 15.3 L3 18 L6.5 20.7" fill="none" stroke="#333" stroke-width="1.7" stroke-linecap="round" stroke-linejoin="round"/><path d="M10 6 V10 L13.5 13" fill="none" stroke="#333" stroke-width="1.7" stroke-linecap="round" stroke-linejoin="round"/></svg>
<div class="t" style="left:194.5px;top:1569.14px;height:37.9px;line-height:37.9px;color:#222;padding-top:2px;">Cycle_3&lt;12&gt;</div>
<div style="left:152.5px;top:1643.94px;width:248.5px;height:1px;background:#e2e4e8;"></div>
<svg style="left:165.0px;top:1615.99px;" width="22" height="22" viewBox="0 0 22 22"><path d="M2.5 10 V8 a4.5 4.5 0 0 1 4.5 -4.5 h12 M15.5 0.8 L19 3.5 L15.5 6.2 M19.5 11 v2.5 a4.5 4.5 0 0 1 -4.5 4.5 h-12 M6.5 15.3 L3 18 L6.5 20.7" fill="none" stroke="#333" stroke-width="1.7" stroke-linecap="round" stroke-linejoin="round"/><path d="M10 6 V10 L13.5 13" fill="none" stroke="#333" stroke-width="1.7" stroke-linecap="round" stroke-linejoin="round"/></svg>
<div class="t" style="left:194.5px;top:1607.04px;height:37.9px;line-height:37.9px;color:#222;padding-top:2px;">Cycle_4&lt;13&gt;</div>
<div style="left:152.5px;top:1681.8400000000001px;width:248.5px;height:1px;background:#e2e4e8;"></div>
<svg style="left:165.0px;top:1653.89px;" width="22" height="22" viewBox="0 0 22 22"><path d="M2.5 10 V8 a4.5 4.5 0 0 1 4.5 -4.5 h12 M15.5 0.8 L19 3.5 L15.5 6.2 M19.5 11 v2.5 a4.5 4.5 0 0 1 -4.5 4.5 h-12 M6.5 15.3 L3 18 L6.5 20.7" fill="none" stroke="#333" stroke-width="1.7" stroke-linecap="round" stroke-linejoin="round"/><path d="M10 6 V10 L13.5 13" fill="none" stroke="#333" stroke-width="1.7" stroke-linecap="round" stroke-linejoin="round"/></svg>
<div class="t" style="left:194.5px;top:1644.94px;height:37.9px;line-height:37.9px;color:#222;padding-top:2px;">Cycle_5&lt;14&gt;</div>
<div style="left:152.5px;top:1719.74px;width:248.5px;height:1px;background:#e2e4e8;"></div>
<svg style="left:165.0px;top:1691.79px;" width="22" height="22" viewBox="0 0 22 22"><path d="M2.5 10 V8 a4.5 4.5 0 0 1 4.5 -4.5 h12 M15.5 0.8 L19 3.5 L15.5 6.2 M19.5 11 v2.5 a4.5 4.5 0 0 1 -4.5 4.5 h-12 M6.5 15.3 L3 18 L6.5 20.7" fill="none" stroke="#333" stroke-width="1.7" stroke-linecap="round" stroke-linejoin="round"/><path d="M10 6 V10 L13.5 13" fill="none" stroke="#333" stroke-width="1.7" stroke-linecap="round" stroke-linejoin="round"/></svg>
<div class="t" style="left:194.5px;top:1682.84px;height:37.9px;line-height:37.9px;color:#222;padding-top:2px;">Cycle_6&lt;15&gt;</div>
<div style="left:152.5px;top:1757.64px;width:248.5px;height:1px;background:#e2e4e8;"></div>
<svg style="left:165.0px;top:1729.69px;" width="22" height="22" viewBox="0 0 22 22"><path d="M2.5 10 V8 a4.5 4.5 0 0 1 4.5 -4.5 h12 M15.5 0.8 L19 3.5 L15.5 6.2 M19.5 11 v2.5 a4.5 4.5 0 0 1 -4.5 4.5 h-12 M6.5 15.3 L3 18 L6.5 20.7" fill="none" stroke="#333" stroke-width="1.7" stroke-linecap="round" stroke-linejoin="round"/><path d="M10 6 V10 L13.5 13" fill="none" stroke="#333" stroke-width="1.7" stroke-linecap="round" stroke-linejoin="round"/></svg>
<div class="t" style="left:194.5px;top:1720.74px;height:37.9px;line-height:37.9px;color:#222;padding-top:2px;">Cycle_7&lt;16&gt;</div>
<div style="left:152.5px;top:1795.5400000000002px;width:248.5px;height:1px;background:#e2e4e8;"></div>
<svg style="left:165.0px;top:1767.5900000000001px;" width="22" height="22" viewBox="0 0 22 22"><path d="M2.5 10 V8 a4.5 4.5 0 0 1 4.5 -4.5 h12 M15.5 0.8 L19 3.5 L15.5 6.2 M19.5 11 v2.5 a4.5 4.5 0 0 1 -4.5 4.5 h-12 M6.5 15.3 L3 18 L6.5 20.7" fill="none" stroke="#333" stroke-width="1.7" stroke-linecap="round" stroke-linejoin="round"/><path d="M10 6 V10 L13.5 13" fill="none" stroke="#333" stroke-width="1.7" stroke-linecap="round" stroke-linejoin="round"/></svg>
<div class="t" style="left:194.5px;top:1758.64px;height:37.9px;line-height:37.9px;color:#222;padding-top:2px;">Cycle_8&lt;17&gt;</div>
<div style="left:152.5px;top:1833.44px;width:248.5px;height:1px;background:#e2e4e8;"></div>
<svg style="left:165.0px;top:1805.49px;" width="22" height="22" viewBox="0 0 22 22"><path d="M2.5 10 V8 a4.5 4.5 0 0 1 4.5 -4.5 h12 M15.5 0.8 L19 3.5 L15.5 6.2 M19.5 11 v2.5 a4.5 4.5 0 0 1 -4.5 4.5 h-12 M6.5 15.3 L3 18 L6.5 20.7" fill="none" stroke="#333" stroke-width="1.7" stroke-linecap="round" stroke-linejoin="round"/><path d="M10 6 V10 L13.5 13" fill="none" stroke="#333" stroke-width="1.7" stroke-linecap="round" stroke-linejoin="round"/></svg>
<div class="t" style="left:194.5px;top:1796.54px;height:37.9px;line-height:37.9px;color:#222;padding-top:2px;">Cycle_9&lt;18&gt;</div>
<div style="left:152.5px;top:1871.3400000000001px;width:248.5px;height:1px;background:#e2e4e8;"></div>
<svg style="left:165.0px;top:1843.39px;" width="22" height="22" viewBox="0 0 22 22"><path d="M2.5 10 V8 a4.5 4.5 0 0 1 4.5 -4.5 h12 M15.5 0.8 L19 3.5 L15.5 6.2 M19.5 11 v2.5 a4.5 4.5 0 0 1 -4.5 4.5 h-12 M6.5 15.3 L3 18 L6.5 20.7" fill="none" stroke="#333" stroke-width="1.7" stroke-linecap="round" stroke-linejoin="round"/></svg>
<div class="t" style="left:194.5px;top:1834.44px;height:37.9px;line-height:37.9px;color:#222;padding-top:2px;">MainTask&lt;30&gt;</div>
<div style="left:112.0px;top:1908.27px;width:289.0px;height:1px;background:#e2e4e8;"></div>
<svg style="left:149.0px;top:1883.0049999999999px;" width="21.5" height="18.5" viewBox="0 0 23 19"><path d="M2 16.5 V4.2 a1.7 1.7 0 0 1 1.7 -1.7 h4.8 l2 2.5 h7.5 a1.7 1.7 0 0 1 1.7 1.7 v1.6 M2 16.5 l2.6 -7 a1.6 1.6 0 0 1 1.5 -1.1 h14.2 a1 1 0 0 1 1 1.4 l-2.3 6.4 a1.6 1.6 0 0 1 -1.5 1.1 h-14 a1.5 1.5 0 0 1 -1.5 -1.5 z" fill="none" stroke="#333" stroke-width="1.9" stroke-linejoin="round"/></svg>
<div class="t" style="left:178.0px;top:1872.34px;height:36.93px;line-height:36.93px;color:#222;padding-top:3.4px;">IO映射表</div>
<div style="left:423px;top:80px;width:1690px;height:37px;background:#dce8fd;"></div>
<div style="left:423px;top:117px;width:176px;height:3px;background:#b4e5c8;"></div>
<div style="left:599px;top:117px;width:178px;height:3px;background:#2fd09b;"></div>
<div style="left:777px;top:117px;width:744px;height:3px;background:#f4dacb;"></div>
<div style="left:1521px;top:117px;width:592px;height:3px;background:#dce8fd;"></div>
<svg style="left:440px;top:91.5px;" width="21" height="16" viewBox="0 0 21 16"><path d="M6 3.5 L1.5 8 L6 12.5 M15 3.5 L19.5 8 L15 12.5 M12.3 1.5 L8.7 14.5" fill="none" stroke="#222" stroke-width="1.6" stroke-linecap="round" stroke-linejoin="round"/></svg>
<div class="t" style="left:477px;top:79px;height:38px;line-height:38px;color:#222;">PU_82</div>
<svg style="left:618px;top:91.5px;" width="21" height="16" viewBox="0 0 21 16"><path d="M6 3.5 L1.5 8 L6 12.5 M15 3.5 L19.5 8 L15 12.5 M12.3 1.5 L8.7 14.5" fill="none" stroke="#222" stroke-width="1.6" stroke-linecap="round" stroke-linejoin="round"/></svg>
<div class="t" style="left:655px;top:79px;height:38px;line-height:38px;color:#222;">PU_73</div>
<svg style="left:751px;top:92px;" width="12" height="12" viewBox="0 0 12 12"><path d="M1.500 1.500 l9 9 M10.500 1.500 l-9 9" stroke="#333" stroke-width="1.400"/></svg>
<svg style="left:796px;top:87.5px;" width="22" height="22" viewBox="0 0 22 22"><path d="M2.5 10 V8 a4.5 4.5 0 0 1 4.5 -4.5 h12 M15.5 0.8 L19 3.5 L15.5 6.2 M19.5 11 v2.5 a4.5 4.5 0 0 1 -4.5 4.5 h-12 M6.5 15.3 L3 18 L6.5 20.7" fill="none" stroke="#8c8c8c" stroke-width="1.7" stroke-linecap="round" stroke-linejoin="round"/><path d="M10 6 V10 L13.5 13" fill="none" stroke="#8c8c8c" stroke-width="1.7" stroke-linecap="round" stroke-linejoin="round"/></svg>
<div class="t" style="left:832.5px;top:79px;height:38px;line-height:38px;color:#8a8a8a;">Cycle_2</div>
<svg style="left:985.5px;top:87.5px;" width="22" height="22" viewBox="0 0 22 22"><path d="M2.5 10 V8 a4.5 4.5 0 0 1 4.5 -4.5 h12 M15.5 0.8 L19 3.5 L15.5 6.2 M19.5 11 v2.5 a4.5 4.5 0 0 1 -4.5 4.5 h-12 M6.5 15.3 L3 18 L6.5 20.7" fill="none" stroke="#8c8c8c" stroke-width="1.7" stroke-linecap="round" stroke-linejoin="round"/><path d="M10 6 V10 L13.5 13" fill="none" stroke="#8c8c8c" stroke-width="1.7" stroke-linecap="round" stroke-linejoin="round"/></svg>
<div class="t" style="left:1022.0px;top:79px;height:38px;line-height:38px;color:#8a8a8a;">Cycle_8</div>
<svg style="left:1175px;top:87.5px;" width="22" height="22" viewBox="0 0 22 22"><path d="M2.5 10 V8 a4.5 4.5 0 0 1 4.5 -4.5 h12 M15.5 0.8 L19 3.5 L15.5 6.2 M19.5 11 v2.5 a4.5 4.5 0 0 1 -4.5 4.5 h-12 M6.5 15.3 L3 18 L6.5 20.7" fill="none" stroke="#8c8c8c" stroke-width="1.7" stroke-linecap="round" stroke-linejoin="round"/><path d="M10 6 V10 L13.5 13" fill="none" stroke="#8c8c8c" stroke-width="1.7" stroke-linecap="round" stroke-linejoin="round"/></svg>
<div class="t" style="left:1211.5px;top:79px;height:38px;line-height:38px;color:#8a8a8a;">Cycle_9</div>
<svg style="left:1364.5px;top:93px;" width="21" height="12" viewBox="0 0 21 12"><rect x="0.800" y="0.800" width="19.400" height="10.400" rx="1.500" fill="none" stroke="#999" stroke-width="1.300"/><path d="M4.500 3.800 v4.500 M7 3.800 v4.500" stroke="#999" stroke-width="1.100"/><circle cx="11" cy="6" r="1.800" fill="none" stroke="#999" stroke-width="1"/><circle cx="16" cy="6" r="1.800" fill="none" stroke="#999" stroke-width="1"/></svg>
<div class="t" style="left:1401.5px;top:79px;height:38px;line-height:38px;color:#8a8a8a;">PLC_1</div>
<div style="left:423px;top:120px;width:1690px;height:43px;background:#eaf1fe;"></div>
<svg style="left:446px;top:128px;" width="28" height="28" viewBox="0 0 28 28"><path d="M14 1 v26 M1 14 h26" stroke="#c8c8c8" stroke-width="3.600"/></svg>
<svg style="left:504px;top:128px;" width="24" height="28" viewBox="0 0 24 28"><path d="M12 27 V3 M2.500 12 L12 2.500 L21.500 12" fill="none" stroke="#c8c8c8" stroke-width="3.600"/></svg>
<svg style="left:560px;top:128px;" width="24" height="28" viewBox="0 0 24 28"><path d="M12 1 V25 M2.500 16 L12 25.500 L21.500 16" fill="none" stroke="#c8c8c8" stroke-width="3.600"/></svg>
<svg style="left:616px;top:129px;" width="27" height="27" viewBox="0 0 27 27"><path d="M12 1.500 H5 a3.500 3.500 0 0 0 -3.500 3.500 v17 a3.500 3.500 0 0 0 3.500 3.500 h17 a3.500 3.500 0 0 0 3.500 -3.500 v-6" fill="none" stroke="#1c6cf0" stroke-width="2.600" stroke-linecap="round"/><path d="M24 3 c-7 0 -11 3 -12.500 8.500 l-3.500 -2 l1.500 10.500 l9.500 -4.500 l-3.500 -2 c1.500 -4 4 -7 8.500 -10.500 z" fill="#1c6cf0"/></svg>
<svg style="left:672px;top:127px;" width="28" height="29" viewBox="0 0 28 29"><path d="M13 3.500 H5 a3.500 3.500 0 0 0 -3.500 3.500 v17 a3.500 3.500 0 0 0 3.500 3.500 h17 a3.500 3.500 0 0 0 3.500 -3.500 v-7" fill="none" stroke="#1c6cf0" stroke-width="2.600" stroke-linecap="round"/><path d="M9.500 19 c0 -7 3.500 -11.500 10 -13 l-1.800 -3.500 l10 2.500 l-4.500 9.500 l-1.800 -3.500 c-4.500 1 -8.500 3.500 -11.900 8 z" fill="#1c6cf0"/></svg>
<svg style="left:729px;top:128px;" width="29" height="29" viewBox="0 0 29 29"><path d="M22 5 a11.500 11.500 0 1 0 3 8" fill="none" stroke="#c8c8c8" stroke-width="2"/><path d="M19 1 l4 4.500 l-5 2" fill="none" stroke="#c8c8c8" stroke-width="2"/><path d="M17 15 l11 6.500 l-11 6.500 z" fill="#c8c8c8"/><path d="M11.500 10 l2.500 -1.500 v9" fill="none" stroke="#c8c8c8" stroke-width="1.300"/></svg>
<div style="left:779px;top:132px;width:1px;height:20px;background:#c3cde0;"></div>
<svg style="left:803px;top:129px;" width="28" height="29" viewBox="0 0 28 29"><rect x="0" y="0" width="27" height="6.500" fill="#1c6cf0"/><path d="M2 10 v9 M2 14.500 h12 M0 24.500 h9" stroke="#1c6cf0" stroke-width="1.800" fill="none"/><path d="M21 12 v14 M14 19 h14" stroke="#1c6cf0" stroke-width="3.600"/></svg>
<svg style="left:859px;top:129px;" width="28" height="29" viewBox="0 0 28 29"><rect x="0" y="0" width="27" height="6.500" fill="#1c6cf0"/><path d="M2 10 v9 M2 14.500 h12 M0 24.500 h9" stroke="#1c6cf0" stroke-width="1.800" fill="none"/><path d="M14 19 h14" stroke="#1c6cf0" stroke-width="3.600"/></svg>
<svg style="left:916px;top:129px;" width="28" height="28" viewBox="0 0 28 28"><rect x="0" y="0" width="27" height="6.500" fill="#1c6cf0"/><rect x="0" y="10" width="27" height="6.500" fill="#1c6cf0"/><rect x="0" y="20" width="27" height="6.500" fill="#1c6cf0"/></svg>
<svg style="left:973px;top:129px;" width="28" height="27" viewBox="0 0 28 27"><path d="M4 1.500 h19 a2.500 2.500 0 0 1 2.500 2.500 v10 a2.500 2.500 0 0 1 -2.500 2.500 h-6.500 l-3 3 l-3 -3 h-6.500 a2.500 2.500 0 0 1 -2.500 -2.500 v-10 a2.500 2.500 0 0 1 2.500 -2.500 z" fill="none" stroke="#1c6cf0" stroke-width="2.200"/><path d="M7 9 h2.500 M12.500 9 h2.500 M18 9 h2.500" stroke="#1c6cf0" stroke-width="2.400"/><path d="M2 24.500 h23" stroke="#1c6cf0" stroke-width="2.400"/></svg>
<svg style="left:1030px;top:130px;" width="27" height="26" viewBox="0 0 27 26"><path d="M4 1.500 h18 a2.500 2.500 0 0 1 2.500 2.500 v12 a2.500 2.500 0 0 1 -2.500 2.500 h-8 l-5 4 v-4 h-5 a2.500 2.500 0 0 1 -2.500 -2.500 v-12 a2.500 2.500 0 0 1 2.500 -2.500 z" fill="none" stroke="#c8c8c8" stroke-width="1.800"/><path d="M12 5 l-4 10 M17 5.500 v6 M14.500 7 l5 3 M19.500 7 l-5 3" stroke="#c8c8c8" stroke-width="1.400"/></svg>
<svg style="left:1086px;top:130px;" width="28" height="27" viewBox="0 0 28 27"><path d="M16 18.500 h-2 l-5 4 v-4 h-5 a2.500 2.500 0 0 1 -2.500 -2.500 v-12 a2.500 2.500 0 0 1 2.500 -2.500 h18 a2.500 2.500 0 0 1 2.500 2.500 v9" fill="none" stroke="#c8c8c8" stroke-width="1.800"/><path d="M12 5 l-4 10 M17 5.500 v6 M14.500 7 l5 3 M19.500 7 l-5 3" stroke="#c8c8c8" stroke-width="1.400"/><path d="M17 16 l9 9 M26 16 l-9 9" stroke="#c8c8c8" stroke-width="2.200"/></svg>
<div style="left:1136px;top:122px;width:39px;height:39px;background:#c5d8f8;border-radius:5px;border:1px solid #bdd0f3;border-left:1.500px solid #9cb4df;border-top:1.500px solid #9cb4df;"></div>
<svg style="left:1142px;top:128px;" width="28" height="28" viewBox="0 0 28 28"><path d="M14.0 2.5 L17.8 9.3 L25.4 10.8 L20.1 16.5 L21.1 24.2 L14.0 20.9 L6.9 24.2 L7.9 16.5 L2.6 10.8 L10.2 9.3 Z" fill="none" stroke="#1c6cf0" stroke-width="2" stroke-linejoin="round"/></svg>
<div style="left:1193px;top:132px;width:1px;height:20px;background:#c3cde0;"></div>
<svg style="left:1217px;top:129px;" width="28" height="27" viewBox="0 0 28 27"><path d="M10.500 1 h7 v9 h5 l-8.500 9 l-8.500 -9 h5 z" fill="none" stroke="#c8c8c8" stroke-width="1.600" stroke-linejoin="round"/><path d="M5 15.500 h-4 v10.500 h26 v-10.500 h-4" fill="none" stroke="#c8c8c8" stroke-width="1.600"/><path d="M6 19.500 v4 M8.500 19.500 v4" stroke="#c8c8c8" stroke-width="1.100"/><circle cx="14" cy="21.500" r="1.800" fill="none" stroke="#c8c8c8" stroke-width="1.100"/><circle cx="20.500" cy="21.500" r="1.800" fill="none" stroke="#c8c8c8" stroke-width="1.100"/></svg>
<div style="left:1267px;top:122px;width:39px;height:39px;background:#c5d8f8;border-radius:5px;border:1px solid #bdd0f3;border-left:1.500px solid #9cb4df;border-top:1.500px solid #9cb4df;"></div>
<svg style="left:1273px;top:133px;" width="28" height="18" viewBox="0 0 28 18"><circle cx="7.500" cy="10" r="7" fill="#f9a01b"/><circle cx="20.500" cy="10" r="7" fill="#f9a01b"/><rect x="4.500" y="1" width="7" height="8" rx="3" fill="#f9a01b"/><rect x="16.500" y="1" width="7" height="8" rx="3" fill="#f9a01b"/><rect x="10" y="4" width="8" height="6" fill="#f9a01b"/><path d="M4 10.500 a3.500 3.500 0 0 1 3 -3.500 M17 10.500 a3.500 3.500 0 0 1 3 -3.500" fill="none" stroke="#fde6b8" stroke-width="1.200"/></svg>
<div style="left:1323px;top:132px;width:1px;height:20px;background:#c3cde0;"></div>
<svg style="left:1349px;top:130px;" width="24" height="25" viewBox="0 0 24 25"><rect x="2.500" y="1.500" width="19" height="22" rx="3" fill="none" stroke="#0060df" stroke-width="2.400"/><path d="M0 12.500 h24" stroke="#2a3f9e" stroke-width="2.400"/></svg>
<svg style="left:1404px;top:130px;" width="26" height="26" viewBox="0 0 26 26"><rect x="3" y="1.500" width="20" height="20" rx="1" fill="none" stroke="#0060df" stroke-width="2.400"/><path d="M0.500 23.500 h25" stroke="#2a3f9e" stroke-width="2.400"/></svg>
<svg style="left:1462px;top:129px;" width="26" height="26" viewBox="0 0 26 26"><rect x="3" y="3.500" width="20" height="20" rx="1" fill="none" stroke="#0060df" stroke-width="2.400"/><path d="M0.500 2 h25" stroke="#2a3f9e" stroke-width="2.400"/></svg>
<svg style="left:2063px;top:128px;" width="26" height="26" viewBox="0 0 26 26"><circle cx="10.500" cy="10.500" r="9" fill="none" stroke="#1c6cf0" stroke-width="1.800"/><path d="M17 17 L24.500 24.500" stroke="#1c6cf0" stroke-width="2" stroke-linecap="round"/><path d="M5 9.500 a5.500 5.500 0 0 1 4.500 -4.500" fill="none" stroke="#1c6cf0" stroke-width="1.200"/></svg>
<div style="left:423px;top:163px;width:1690px;height:545px;background:#fff;"></div>
<div style="left:423px;top:243px;width:1683px;height:40px;background:#f6f9fe;"></div>
<div style="left:423px;top:323px;width:1683px;height:40px;background:#f6f9fe;"></div>
<div style="left:423px;top:403px;width:1683px;height:40px;background:#f6f9fe;"></div>
<div style="left:423px;top:483px;width:1683px;height:40px;background:#f6f9fe;"></div>
<div style="left:423px;top:563px;width:1683px;height:40px;background:#f6f9fe;"></div>
<div style="left:423px;top:643px;width:1683px;height:40px;background:#f6f9fe;"></div>
<div style="left:504px;top:163px;width:1px;height:521px;background:#d6e3fb;"></div>
<div style="left:837px;top:163px;width:1px;height:521px;background:#d6e3fb;"></div>
<div style="left:1104px;top:163px;width:1px;height:521px;background:#d6e3fb;"></div>
<div style="left:1371px;top:163px;width:1px;height:521px;background:#d6e3fb;"></div>
<div style="left:1444px;top:163px;width:1px;height:521px;background:#d6e3fb;"></div>
<div style="left:1677px;top:163px;width:1px;height:521px;background:#d6e3fb;"></div>
<div style="left:2010px;top:163px;width:1px;height:521px;background:#d6e3fb;"></div>
<div style="left:423px;top:163px;width:1690px;height:40px;background:#f5f8fe;box-shadow:0 3px 6px rgba(0,0,0,0.13);"></div>
<div style="left:504px;top:163px;width:1px;height:40px;background:#d6e3fb;"></div>
<div style="left:837px;top:163px;width:1px;height:40px;background:#d6e3fb;"></div>
<div style="left:1104px;top:163px;width:1px;height:40px;background:#d6e3fb;"></div>
<div style="left:1371px;top:163px;width:1px;height:40px;background:#d6e3fb;"></div>
<div style="left:1444px;top:163px;width:1px;height:40px;background:#d6e3fb;"></div>
<div style="left:1677px;top:163px;width:1px;height:40px;background:#d6e3fb;"></div>
<div style="left:2010px;top:163px;width:1px;height:40px;background:#d6e3fb;"></div>
<svg style="left:470px;top:168px;" width="31" height="30" viewBox="0 0 31 30"><path d="M30 1 V29 H1 Z" fill="#c8dbf9"/></svg>
<div class="t" style="left:555px;top:161px;height:42px;line-height:42px;color:#222;">名称</div>
<div class="t" style="left:856px;top:161px;height:42px;line-height:42px;color:#222;">数据类型</div>
<div class="t" style="left:1122px;top:161px;height:42px;line-height:42px;color:#222;">初始值</div>
<div class="t" style="left:1389px;top:161px;height:42px;line-height:42px;color:#222;">保持</div>
<div class="t" style="left:1462px;top:161px;height:42px;line-height:42px;color:#222;">显示格式</div>
<div class="t" style="left:1695px;top:161px;height:42px;line-height:42px;color:#222;">实际值</div>
<div class="t" style="left:2028px;top:161px;height:42px;line-height:42px;color:#222;">修改值</div>
<svg style="left:524px;top:216.5px;" width="14" height="11" viewBox="0 0 14 11"><path d="M2 3 L7 8 L12 3" fill="none" stroke="#2878f0" stroke-width="2" stroke-linecap="round" stroke-linejoin="round"/></svg>
<div class="t" style="left:555px;top:199.5px;height:41px;line-height:41px;color:#2878f0;font-size:21px;letter-spacing:-1px;">VAR</div>
<div class="t" style="left:432px;top:241px;height:40px;line-height:40px;width:81px;text-align:center;font-size:21px;color:#222;padding-left:18px;">1</div>
<div style="left:554px;top:260px;width:7px;height:7px;background:#b5cffa;border-radius:50%;"></div>
<div class="a" style="left:585px;top:241.5px;height:41px;line-height:41px;">IN1</div>
<div class="a" style="left:854.5px;top:242px;height:41px;line-height:41px;">STRING[254]</div>
<div class="a" style="left:1124px;top:242px;height:41px;line-height:41px;">'fwaiusgfeg'</div>
<div style="left:1397px;top:253px;width:20px;height:20px;background:#eeeeee;border:1px solid #e0e0e0;border-radius:4px;"></div>
<div class="t" style="left:1466px;top:238.5px;height:41px;line-height:41px;color:#222;">字符串</div>
<svg style="left:1646px;top:250.5px;" width="18" height="11" viewBox="0 0 18 11"><path d="M1.500 1.500 L9 9 L16.500 1.500" fill="none" stroke="#777" stroke-width="1.800"/></svg>
<div class="t" style="left:1694px;top:240px;height:41px;line-height:41px;color:#777;font-size:21px;">'fwaiusgfeg'</div>
<div class="t" style="left:432px;top:281px;height:40px;line-height:40px;width:81px;text-align:center;font-size:21px;color:#222;padding-left:18px;">2</div>
<div style="left:554px;top:300px;width:7px;height:7px;background:#b5cffa;border-radius:50%;"></div>
<div class="a" style="left:585px;top:281.5px;height:41px;line-height:41px;">IN2</div>
<div class="a" style="left:854.5px;top:282px;height:41px;line-height:41px;">DINT</div>
<div class="a" style="left:1124px;top:282px;height:41px;line-height:41px;">0</div>
<div style="left:1397px;top:293px;width:20px;height:20px;background:#eeeeee;border:1px solid #e0e0e0;border-radius:4px;"></div>
<div class="t" style="left:1466px;top:278.5px;height:41px;line-height:41px;color:#222;">十进制</div>
<svg style="left:1646px;top:290.5px;" width="18" height="11" viewBox="0 0 18 11"><path d="M1.500 1.500 L9 9 L16.500 1.500" fill="none" stroke="#777" stroke-width="1.800"/></svg>
<div class="t" style="left:1694px;top:280px;height:41px;line-height:41px;color:#777;font-size:21px;">1</div>
<div class="t" style="left:432px;top:321px;height:40px;line-height:40px;width:81px;text-align:center;font-size:21px;color:#222;padding-left:18px;">3</div>
<svg style="left:550.5px;top:338.0px;" width="14" height="11" viewBox="0 0 14 11"><path d="M2 3 L7 8 L12 3" fill="none" stroke="#2878f0" stroke-width="2" stroke-linecap="round" stroke-linejoin="round"/></svg>
<div class="a" style="left:585px;top:321.5px;height:41px;line-height:41px;">IN3</div>
<div class="a" style="left:854.5px;top:322px;height:41px;line-height:41px;">Array[1..5] of BYTE</div>
<div style="left:1397px;top:333px;width:20px;height:20px;background:#eeeeee;border:1px solid #e0e0e0;border-radius:4px;"></div>
<div style="left:580.5px;top:380px;width:7px;height:7px;background:#b5cffa;border-radius:50%;"></div>
<div class="a" style="left:611.5px;top:361.5px;height:41px;line-height:41px;">IN3[1]</div>
<div class="a" style="left:854.5px;top:362px;height:41px;line-height:41px;">BYTE</div>
<div class="a" style="left:1124px;top:362px;height:41px;line-height:41px;">1</div>
<div class="t" style="left:1466px;top:358.5px;height:41px;line-height:41px;color:#222;">十六进制</div>
<svg style="left:1646px;top:370.5px;" width="18" height="11" viewBox="0 0 18 11"><path d="M1.500 1.500 L9 9 L16.500 1.500" fill="none" stroke="#777" stroke-width="1.800"/></svg>
<div class="t" style="left:1694px;top:360px;height:41px;line-height:41px;color:#777;font-size:21px;">16#01</div>
<div class="t" style="left:2027px;top:359px;height:41px;line-height:41px;color:#b4b4b4;font-size:21px;">16#</div>
<div style="left:580.5px;top:420px;width:7px;height:7px;background:#b5cffa;border-radius:50%;"></div>
<div class="a" style="left:611.5px;top:401.5px;height:41px;line-height:41px;">IN3[2]</div>
<div class="a" style="left:854.5px;top:402px;height:41px;line-height:41px;">BYTE</div>
<div class="a" style="left:1124px;top:402px;height:41px;line-height:41px;">5</div>
<div class="t" style="left:1466px;top:398.5px;height:41px;line-height:41px;color:#222;">十六进制</div>
<svg style="left:1646px;top:410.5px;" width="18" height="11" viewBox="0 0 18 11"><path d="M1.500 1.500 L9 9 L16.500 1.500" fill="none" stroke="#777" stroke-width="1.800"/></svg>
<div class="t" style="left:1694px;top:400px;height:41px;line-height:41px;color:#777;font-size:21px;">16#66</div>
<div class="t" style="left:2027px;top:399px;height:41px;line-height:41px;color:#b4b4b4;font-size:21px;">16#</div>
<div style="left:580.5px;top:460px;width:7px;height:7px;background:#b5cffa;border-radius:50%;"></div>
<div class="a" style="left:611.5px;top:441.5px;height:41px;line-height:41px;">IN3[3]</div>
<div class="a" style="left:854.5px;top:442px;height:41px;line-height:41px;">BYTE</div>
<div class="a" style="left:1124px;top:442px;height:41px;line-height:41px;">10</div>
<div class="t" style="left:1466px;top:438.5px;height:41px;line-height:41px;color:#222;">十六进制</div>
<svg style="left:1646px;top:450.5px;" width="18" height="11" viewBox="0 0 18 11"><path d="M1.500 1.500 L9 9 L16.500 1.500" fill="none" stroke="#777" stroke-width="1.800"/></svg>
<div class="t" style="left:1694px;top:440px;height:41px;line-height:41px;color:#777;font-size:21px;">16#77</div>
<div class="t" style="left:2027px;top:439px;height:41px;line-height:41px;color:#b4b4b4;font-size:21px;">16#</div>
<div style="left:580.5px;top:500px;width:7px;height:7px;background:#b5cffa;border-radius:50%;"></div>
<div class="a" style="left:611.5px;top:481.5px;height:41px;line-height:41px;">IN3[4]</div>
<div class="a" style="left:854.5px;top:482px;height:41px;line-height:41px;">BYTE</div>
<div class="a" style="left:1124px;top:482px;height:41px;line-height:41px;">45</div>
<div class="t" style="left:1466px;top:478.5px;height:41px;line-height:41px;color:#222;">十六进制</div>
<svg style="left:1646px;top:490.5px;" width="18" height="11" viewBox="0 0 18 11"><path d="M1.500 1.500 L9 9 L16.500 1.500" fill="none" stroke="#777" stroke-width="1.800"/></svg>
<div class="t" style="left:1694px;top:480px;height:41px;line-height:41px;color:#777;font-size:21px;">16#61</div>
<div class="t" style="left:2027px;top:479px;height:41px;line-height:41px;color:#b4b4b4;font-size:21px;">16#</div>
<div style="left:580.5px;top:540px;width:7px;height:7px;background:#b5cffa;border-radius:50%;"></div>
<div class="a" style="left:611.5px;top:521.5px;height:41px;line-height:41px;">IN3[5]</div>
<div class="a" style="left:854.5px;top:522px;height:41px;line-height:41px;">BYTE</div>
<div class="a" style="left:1124px;top:522px;height:41px;line-height:41px;">80</div>
<div class="t" style="left:1466px;top:518.5px;height:41px;line-height:41px;color:#222;">十六进制</div>
<svg style="left:1646px;top:530.5px;" width="18" height="11" viewBox="0 0 18 11"><path d="M1.500 1.500 L9 9 L16.500 1.500" fill="none" stroke="#777" stroke-width="1.800"/></svg>
<div class="t" style="left:1694px;top:520px;height:41px;line-height:41px;color:#777;font-size:21px;">16#69</div>
<div class="t" style="left:2027px;top:519px;height:41px;line-height:41px;color:#b4b4b4;font-size:21px;">16#</div>
<div class="t" style="left:432px;top:561px;height:40px;line-height:40px;width:81px;text-align:center;font-size:21px;color:#222;padding-left:18px;">4</div>
<div style="left:554px;top:580px;width:7px;height:7px;background:#b5cffa;border-radius:50%;"></div>
<div class="a" style="left:585px;top:561.5px;height:41px;line-height:41px;">OUT</div>
<div class="a" style="left:854.5px;top:562px;height:41px;line-height:41px;">INT</div>
<div class="a" style="left:1124px;top:562px;height:41px;line-height:41px;">0</div>
<div style="left:1397px;top:573px;width:20px;height:20px;background:#eeeeee;border:1px solid #e0e0e0;border-radius:4px;"></div>
<div class="t" style="left:1466px;top:558.5px;height:41px;line-height:41px;color:#222;">十进制</div>
<svg style="left:1646px;top:570.5px;" width="18" height="11" viewBox="0 0 18 11"><path d="M1.500 1.500 L9 9 L16.500 1.500" fill="none" stroke="#777" stroke-width="1.800"/></svg>
<div class="t" style="left:1694px;top:560px;height:41px;line-height:41px;color:#777;font-size:21px;">1</div>
<div class="t" style="left:432px;top:601px;height:40px;line-height:40px;width:81px;text-align:center;font-size:21px;color:#222;padding-left:18px;">5</div>
<div style="left:554px;top:620px;width:7px;height:7px;background:#b5cffa;border-radius:50%;"></div>
<div class="a" style="left:585px;top:601.5px;height:41px;line-height:41px;">ARR</div>
<div class="a" style="left:854.5px;top:602px;height:41px;line-height:41px;">DINT</div>
<div class="a" style="left:1124px;top:602px;height:41px;line-height:41px;">0</div>
<div style="left:1397px;top:613px;width:20px;height:20px;background:#eeeeee;border:1px solid #e0e0e0;border-radius:4px;"></div>
<div class="t" style="left:1466px;top:598.5px;height:41px;line-height:41px;color:#222;">十进制</div>
<svg style="left:1646px;top:610.5px;" width="18" height="11" viewBox="0 0 18 11"><path d="M1.500 1.500 L9 9 L16.500 1.500" fill="none" stroke="#777" stroke-width="1.800"/></svg>
<div class="t" style="left:1694px;top:600px;height:41px;line-height:41px;color:#777;font-size:21px;">4</div>
<div class="t" style="left:432px;top:641px;height:40px;line-height:40px;width:81px;text-align:center;font-size:21px;color:#aaa;padding-left:18px;">6</div>
<div style="left:554px;top:660px;width:7px;height:7px;background:#b5cffa;border-radius:50%;"></div>
<div class="t" style="left:585px;top:640.5px;height:41px;line-height:41px;color:#c4c4c4;font-size:21.500px;">添加</div>
<div style="left:2106px;top:203px;width:8px;height:361px;background:#c6c6c6;border-radius:4px;"></div>
<div style="left:423px;top:684px;width:1690px;height:24px;background:#f7fafe;"></div>
<div style="left:423px;top:684.5px;width:1256px;height:9px;background:#c8c8c8;border-radius:5px;"></div>
<div style="left:1679px;top:693px;width:434px;height:1px;background:#bcd2f8;"></div>
<div style="left:423px;top:707.5px;width:1690px;height:1.5px;background:#b4cdf8;"></div>
<div style="left:423px;top:709px;width:1690px;height:41px;background:#eaf1fe;"></div>
<div style="left:423px;top:750px;width:1690px;height:1px;background:#d5e0f3;"></div>
<svg style="left:431px;top:719px;" width="18" height="19" viewBox="0 0 18 19"><path d="M2.500 1 v17 M15 2 L5 9.500 L15 17" fill="none" stroke="#858585" stroke-width="2.600"/></svg>
<svg style="left:472px;top:720px;" width="14" height="17" viewBox="0 0 14 17"><path d="M11.500 1.500 L3 8.500 L11.500 15.500" fill="none" stroke="#858585" stroke-width="2.600"/></svg>
<svg style="left:505px;top:717px;" width="28" height="26" viewBox="0 0 28 26"><rect x="4" y="2" width="19" height="21" fill="none" stroke="#2b2b2b" stroke-width="2.200"/><path d="M0 8 h4 M0 17.500 h4 M23 8 h4 M23 17.500 h4" stroke="#2b2b2b" stroke-width="2.200"/><path d="M13.500 7.500 v11 M10.500 7.500 h6 M10.500 18.500 h6" stroke="#2b2b2b" stroke-width="1.500"/></svg>
<svg style="left:552px;top:717px;" width="20" height="22" viewBox="0 0 20 22"><path d="M2.500 0.500 v13.500 h14 M11 7.500 l6.500 6.500 l-6.500 6.500" fill="none" stroke="#2b2b2b" stroke-width="2.400"/></svg>
<svg style="left:591px;top:719px;" width="27" height="20" viewBox="0 0 27 20"><path d="M1 18 h15 M16 18 V3.500 M9.500 10 L16 3.500 L22.500 10" fill="none" stroke="#2b2b2b" stroke-width="2.400"/></svg>
<svg style="left:636px;top:724px;" width="25" height="16" viewBox="0 0 25 16"><path d="M1 2 h2.500 v10.500 h5 v-6 M11.500 6.500 v6 h5 v-6.500 M19.500 12.500 v-10 h4" fill="none" stroke="#2b2b2b" stroke-width="2.200"/></svg>
<svg style="left:678px;top:717px;" width="28" height="26" viewBox="0 0 28 26"><path d="M0 13 h10 M18 13 h10 M10 2 v22 M18 2 v22" stroke="#2b2b2b" stroke-width="2.500" fill="none"/></svg>
<svg style="left:722px;top:717px;" width="28" height="26" viewBox="0 0 28 26"><path d="M0 13 h9 M19 13 h9 M9 2 v22 M19 2 v22 M17 3.500 l-5.500 19" stroke="#2b2b2b" stroke-width="2.400" fill="none"/></svg>
<svg style="left:765px;top:715px;" width="29" height="28" viewBox="0 0 29 28"><path d="M0 22 h8.500 M20 22 h8.500 M8.500 15.500 v12 M20 15.500 v12" stroke="#2b2b2b" stroke-width="2.500" fill="none"/><text x="14.500" y="11" font-size="11.500" font-weight="bold" text-anchor="middle" fill="#2b2b2b" font-family="Liberation Sans, sans-serif">NOT</text></svg>
<svg style="left:808px;top:717px;" width="28" height="26" viewBox="0 0 28 26"><path d="M0 13 h7.500 M20.500 13 h7.500" stroke="#2b2b2b" stroke-width="2.400"/><path d="M12 3 c-4.500 6 -4.500 14 0 20 M16 3 c4.500 6 4.500 14 0 20" fill="none" stroke="#2b2b2b" stroke-width="2.200"/></svg>
<svg style="left:852px;top:717px;" width="29" height="26" viewBox="0 0 29 26"><path d="M0 13 h7 M22 13 h7" stroke="#2b2b2b" stroke-width="2.400"/><path d="M11.500 3 c-4.500 6 -4.500 14 0 20 M17.500 3 c4.500 6 4.500 14 0 20 M17 4 l-5 18" fill="none" stroke="#2b2b2b" stroke-width="2.200"/></svg>
<svg style="left:2012px;top:720px;" width="14" height="17" viewBox="0 0 14 17"><path d="M2.500 1.500 L11 8.500 L2.500 15.500" fill="none" stroke="#666" stroke-width="2.200"/></svg>
<svg style="left:2047px;top:719px;" width="18" height="19" viewBox="0 0 18 19"><path d="M16 1 v17 M2.500 1.500 L13 9.500 L2.500 17.500" fill="none" stroke="#666" stroke-width="2.200"/></svg>
<svg style="left:2084px;top:716px;" width="24" height="24" viewBox="0 0 24 24"><path d="M22 7 H2.500 M8 1.500 L2.500 7 L8 12.500 M2 17 H21.500 M16 11.500 L21.500 17 L16 22.500" fill="none" stroke="#222" stroke-width="2.200"/></svg>
<div style="left:423px;top:751px;width:1690px;height:460px;background:#fff;"></div>
<div style="left:423px;top:751px;width:38px;height:325px;background:#eef3fd;"></div>
<div style="left:461px;top:751px;width:1630px;height:39px;background:#f5f5f5;"></div>
<div style="left:505px;top:755px;width:298px;height:31px;background:#f9f9f9;border-radius:4px;"></div>
<svg style="left:472px;top:763.0px;" width="14" height="11" viewBox="0 0 14 11"><path d="M2 3 L7 8 L12 3" fill="none" stroke="#444" stroke-width="1.8" stroke-linecap="round" stroke-linejoin="round"/></svg>
<div class="t" style="left:508px;top:747px;height:38px;line-height:38px;color:#2878f0;">程序段&nbsp; 1</div>
<div style="left:423px;top:1075px;width:1668px;height:1.5px;background:#d0d0d0;"></div>
<div style="left:2091px;top:751px;width:1px;height:460px;background:#e3e3e3;"></div>
<div class="m" style="left:433px;top:900.0px;height:26px;line-height:26px;font-weight:bold;">1</div>
<div style="left:493.5px;top:822px;width:2px;height:221.5px;background:#2fd09b;"></div>
<div style="left:494px;top:888.5px;width:318px;height:2px;background:#2fd09b;"></div>
<div style="left:811px;top:843px;width:382px;height:201px;background:#f3f6fe;border:2px solid #2fd09b;"></div>
<div style="left:813px;top:845px;width:378px;height:24px;background:#dde9fd;"></div>
<div class="m" style="left:811px;top:843px;width:382px;height:26px;line-height:25px;text-align:center;">STRING_TO_CHARS</div>
<div style="left:913px;top:888.7px;width:179.5px;height:1.6px;background:#2fd09b;"></div>
<div class="m" style="left:818px;top:875.5px;height:26px;line-height:26px;">EN</div>
<div class="m" style="right:1351px;top:875.5px;height:26px;line-height:26px;">ENO</div>
<div class="m" style="left:818px;top:929.5px;height:26px;line-height:26px;">SOURCE_STRING</div>
<div class="m" style="left:818px;top:983.0px;height:26px;line-height:26px;">POS</div>
<div class="m" style="right:1351px;top:983.0px;height:26px;line-height:26px;">CNT</div>
<div class="m" style="left:818px;top:1010.0px;height:26px;line-height:26px;">DEST_CHARS</div>
<div style="left:531px;top:903px;width:233px;height:26.5px;background:#e8effd;border-radius:3px;"></div>
<div class="m" style="left:531px;top:903px;width:233px;height:27px;line-height:27px;text-align:center;padding-right:6.500px;">'16#6677_6169_75…</div>
<div class="m" style="right:1775px;top:929.5px;height:26px;line-height:26px;">IN1</div>
<div style="left:769px;top:939.5px;width:42px;height:2px;background:#8ab4f8;"></div>
<div style="left:597px;top:956.5px;width:167px;height:26.5px;background:#e8effd;border-radius:3px;"></div>
<div class="m" style="left:597px;top:956.500px;width:167px;height:27px;line-height:27px;text-align:center;">16#0000_0001</div>
<div class="m" style="right:1775px;top:982.5px;height:26px;line-height:26px;">IN2</div>
<div style="left:769px;top:992.7px;width:42px;height:2px;background:#8ab4f8;"></div>
<div class="m" style="right:1775px;top:1009.5px;height:26px;line-height:26px;">IN3</div>
<svg style="left:768px;top:1015px;" width="44" height="15" viewBox="0 0 44 15"><path d="M2 7.500 H42 M8 1.500 L2 7.500 L8 13.500 M36 1.500 L42 7.500 L36 13.500" fill="none" stroke="#8ab4f8" stroke-width="1.800"/></svg>
<div style="left:1193px;top:888.5px;width:317px;height:2px;background:#2fd09b;"></div>
<div style="left:1508.5px;top:879px;width:2px;height:21px;background:#2fd09b;"></div>
<div style="left:1241px;top:903px;width:108.5px;height:26.5px;background:#e8effd;border-radius:3px;"></div>
<div class="m" style="left:1241px;top:903px;width:108.500px;height:27px;line-height:27px;text-align:center;">16#0001</div>
<div style="left:1193px;top:939.5px;width:42.5px;height:2px;background:#8ab4f8;"></div>
<div class="m" style="left:1241px;top:929.5px;height:26px;line-height:26px;">OUT</div>
<div style="left:1241px;top:956.5px;width:166.5px;height:26.5px;background:#e8effd;border-radius:3px;"></div>
<div class="m" style="left:1241px;top:956.500px;width:166.500px;height:27px;line-height:27px;text-align:center;">16#0000_0004</div>
<div style="left:1193px;top:992.7px;width:42.5px;height:2px;background:#8ab4f8;"></div>
<div class="m" style="left:1241px;top:983.0px;height:26px;line-height:26px;">ARR</div>
<div style="left:423px;top:1210px;width:1690px;height:47px;background:#fafafa;"></div>
<svg style="left:440px;top:1228px;" width="20" height="13" viewBox="0 0 20 13"><path d="M10 1 L19 12 H1 Z" fill="#2878f0" stroke="#2878f0" stroke-width="1" stroke-linejoin="round"/></svg>
<div class="t" style="left:486.5px;top:1212px;height:40px;line-height:40px;color:#222;letter-spacing:-0.6px;">CYCLE_9</div>
<svg style="left:590px;top:1226px;" width="12" height="18" viewBox="0 0 12 18"><path d="M2 1.500 L10 9 L2 16.500" fill="none" stroke="#d0d0d0" stroke-width="1.800"/></svg>
<div class="t" style="left:626.5px;top:1212px;height:40px;line-height:40px;color:#2878f0;">PU_73</div>
<svg style="left:1945px;top:1220px;" width="28" height="28" viewBox="0 0 28 28"><path d="M2 10.500 H25 L17 2 V10.500 M26 17.500 H3 L11 26 V17.500" fill="#2878f0" stroke="#2878f0" stroke-width="1.600" stroke-linejoin="round"/></svg>
<div style="left:1989px;top:1221px;width:1px;height:25px;background:#d8d8d8;"></div>
<div style="left:2006px;top:1217px;width:64px;height:32px;background:linear-gradient(90deg,#8fe8cb 0%,#8fe8cb 33%,#5fdcb4 33%,#5fdcb4 62%,#2ed89e 62%,#23d898 100%);"></div>
<div style="left:423px;top:1256px;width:1690px;height:3px;background:#6fa5f8;"></div>
<div style="left:423px;top:1256px;width:110px;height:3px;background:#2878f0;"></div>
<div style="left:423px;top:1259px;width:1690px;height:37.5px;background:#dce8fd;"></div>
<div style="left:423px;top:1259px;width:110px;height:37.5px;background:#f7fafe;"></div>
<div style="left:423px;top:1296.5px;width:1690px;height:609px;background:#f7fafe;"></div>
<svg style="left:444px;top:1267px;" width="20" height="20" viewBox="0 0 20 20"><circle cx="10" cy="10" r="10" fill="#0060df"/><circle cx="11" cy="5" r="1.700" fill="#fff"/><path d="M8 8.500 h3 l-1.500 6.500 h2" stroke="#fff" stroke-width="2" fill="none"/></svg>
<div class="t" style="left:474px;top:1258px;height:38px;line-height:38px;color:#2878f0;">信息</div>
<svg style="left:554px;top:1268px;" width="20" height="19" viewBox="0 0 20 19"><rect x="1" y="1" width="18" height="16.500" rx="2.500" fill="none" stroke="#8a8a8a" stroke-width="1.500"/><path d="M1 5.500 h18" stroke="#8a8a8a" stroke-width="1.500"/><rect x="4.500" y="9" width="4" height="4.500" fill="none" stroke="#8a8a8a" stroke-width="1.300"/><path d="M11 10 h5 M11 13 h5" stroke="#8a8a8a" stroke-width="1.300"/></svg>
<div class="t" style="left:584px;top:1258px;height:38px;line-height:38px;color:#666;">属性</div>
<div class="t" style="left:519px;top:1313.5px;height:40px;line-height:40px;color:#777;">常规</div>
<div class="t" style="left:685.5px;top:1313.5px;height:40px;line-height:40px;color:#2878f0;">下载</div>
<div class="t" style="left:851.5px;top:1313.5px;height:40px;line-height:40px;color:#777;">编译</div>
<div style="left:458px;top:1353px;width:1620px;height:1.2px;background:#86b4f8;"></div>
<div style="left:624px;top:1350.5px;width:167px;height:3.5px;background:#2878f0;"></div>
<div style="left:458px;top:1393px;width:1620px;height:494px;overflow:hidden;background:#fff;">
<div style="left:0px;top:0px;width:1620px;height:40px;background:#fff;"></div>
<div style="left:0px;top:40px;width:1620px;height:40px;background:#fafafa;"></div>
<div style="left:0px;top:80px;width:1620px;height:40px;background:#fff;"></div>
<div style="left:0px;top:120px;width:1620px;height:40px;background:#fafafa;"></div>
<div style="left:0px;top:160px;width:1620px;height:40px;background:#fff;"></div>
<div style="left:0px;top:200px;width:1620px;height:40px;background:#fafafa;"></div>
<div style="left:0px;top:240px;width:1620px;height:40px;background:#fff;"></div>
<div style="left:0px;top:280px;width:1620px;height:40px;background:#fafafa;"></div>
<div style="left:0px;top:320px;width:1620px;height:40px;background:#fff;"></div>
<div style="left:0px;top:360px;width:1620px;height:40px;background:#fafafa;"></div>
<div style="left:0px;top:400px;width:1620px;height:40px;background:#fff;"></div>
<div style="left:0px;top:440px;width:1620px;height:40px;background:#fafafa;"></div>
<div style="left:0px;top:480px;width:1620px;height:40px;background:#fff;"></div>
</div>
<svg style="left:512px;top:1403px;" width="20" height="20" viewBox="0 0 20 20"><circle cx="10" cy="10" r="10" fill="#0060df"/><circle cx="10" cy="5.0" r="2.0" fill="#fff"/><rect x="8.2" y="8.5" width="3.5999999999999996" height="7.5" fill="#fff"/><rect x="6.800000000000001" y="8.5" width="3.0" height="2.0" fill="#fff"/></svg>
<svg style="left:619px;top:1408.5px;" width="14" height="11" viewBox="0 0 14 11"><path d="M2 3 L7 8 L12 3" fill="none" stroke="#2878f0" stroke-width="2" stroke-linecap="round" stroke-linejoin="round"/></svg>
<div class="t" style="left:647px;top:1391.2px;height:41px;line-height:41px;color:#2878f0;">PLC_1</div>
<svg style="left:512px;top:1443px;" width="20" height="20" viewBox="0 0 20 20"><circle cx="10" cy="10" r="10" fill="#0060df"/><circle cx="10" cy="5.0" r="2.0" fill="#fff"/><rect x="8.2" y="8.5" width="3.5999999999999996" height="7.5" fill="#fff"/><rect x="6.800000000000001" y="8.5" width="3.0" height="2.0" fill="#fff"/></svg>
<svg style="left:649px;top:1448.5px;" width="14" height="11" viewBox="0 0 14 11"><path d="M2 3 L7 8 L12 3" fill="none" stroke="#2878f0" stroke-width="2" stroke-linecap="round" stroke-linejoin="round"/></svg>
<div class="t" style="left:677px;top:1431.2px;height:41px;line-height:41px;color:#2878f0;">软件</div>
<svg style="left:512px;top:1483px;" width="20" height="20" viewBox="0 0 20 20"><circle cx="10" cy="10" r="10" fill="#0060df"/><circle cx="10" cy="5.0" r="2.0" fill="#fff"/><rect x="8.2" y="8.5" width="3.5999999999999996" height="7.5" fill="#fff"/><rect x="6.800000000000001" y="8.5" width="3.0" height="2.0" fill="#fff"/></svg>
<div class="t" style="left:707px;top:1471.2px;height:41px;line-height:41px;color:#222;">gDownloadInfo删除成功</div>
<div class="t" style="left:1691px;top:1471.2px;height:41px;line-height:41px;color:#222;letter-spacing:-0.4px;">10:49:09 AM</div>
<svg style="left:512px;top:1523px;" width="20" height="20" viewBox="0 0 20 20"><circle cx="10" cy="10" r="10" fill="#0060df"/><circle cx="10" cy="5.0" r="2.0" fill="#fff"/><rect x="8.2" y="8.5" width="3.5999999999999996" height="7.5" fill="#fff"/><rect x="6.800000000000001" y="8.5" width="3.0" height="2.0" fill="#fff"/></svg>
<div class="t" style="left:707px;top:1511.2px;height:41px;line-height:41px;color:#2878f0;">全局变量集合GVS</div>
<svg style="left:512px;top:1563px;" width="20" height="20" viewBox="0 0 20 20"><circle cx="10" cy="10" r="10" fill="#0060df"/><circle cx="10" cy="5.0" r="2.0" fill="#fff"/><rect x="8.2" y="8.5" width="3.5999999999999996" height="7.5" fill="#fff"/><rect x="6.800000000000001" y="8.5" width="3.0" height="2.0" fill="#fff"/></svg>
<svg style="left:679px;top:1568.5px;" width="14" height="11" viewBox="0 0 14 11"><path d="M2 3 L7 8 L12 3" fill="none" stroke="#2878f0" stroke-width="2" stroke-linecap="round" stroke-linejoin="round"/></svg>
<div class="t" style="left:707px;top:1551.2px;height:41px;line-height:41px;color:#2878f0;">程序单元</div>
<svg style="left:512px;top:1603px;" width="20" height="20" viewBox="0 0 20 20"><circle cx="10" cy="10" r="10" fill="#0060df"/><circle cx="10" cy="5.0" r="2.0" fill="#fff"/><rect x="8.2" y="8.5" width="3.5999999999999996" height="7.5" fill="#fff"/><rect x="6.800000000000001" y="8.5" width="3.0" height="2.0" fill="#fff"/></svg>
<div class="t" style="left:737px;top:1591.2px;height:41px;line-height:41px;color:#222;"><span style="letter-spacing:-0.4px">STD.PU_73.IN1</span>删除成功</div>
<div class="t" style="left:1691px;top:1591.2px;height:41px;line-height:41px;color:#222;letter-spacing:-0.4px;">10:49:09 AM</div>
<svg style="left:512px;top:1643px;" width="20" height="20" viewBox="0 0 20 20"><circle cx="10" cy="10" r="10" fill="#0060df"/><circle cx="10" cy="5.0" r="2.0" fill="#fff"/><rect x="8.2" y="8.5" width="3.5999999999999996" height="7.5" fill="#fff"/><rect x="6.800000000000001" y="8.5" width="3.0" height="2.0" fill="#fff"/></svg>
<div class="t" style="left:737px;top:1631.2px;height:41px;line-height:41px;color:#222;"><span style="letter-spacing:-0.4px">STD.PU_73</span>删除成功</div>
<div class="t" style="left:1691px;top:1631.2px;height:41px;line-height:41px;color:#222;letter-spacing:-0.4px;">10:49:09 AM</div>
<svg style="left:512px;top:1683px;" width="20" height="20" viewBox="0 0 20 20"><circle cx="10" cy="10" r="10" fill="#0060df"/><circle cx="10" cy="5.0" r="2.0" fill="#fff"/><rect x="8.2" y="8.5" width="3.5999999999999996" height="7.5" fill="#fff"/><rect x="6.800000000000001" y="8.5" width="3.0" height="2.0" fill="#fff"/></svg>
<div class="t" style="left:737px;top:1671.2px;height:41px;line-height:41px;color:#222;"><span style="letter-spacing:-0.4px">STD.PU_73</span>下载成功</div>
<div class="t" style="left:1691px;top:1671.2px;height:41px;line-height:41px;color:#222;letter-spacing:-0.4px;">10:49:09 AM</div>
<svg style="left:512px;top:1723px;" width="20" height="20" viewBox="0 0 20 20"><circle cx="10" cy="10" r="10" fill="#0060df"/><circle cx="10" cy="5.0" r="2.0" fill="#fff"/><rect x="8.2" y="8.5" width="3.5999999999999996" height="7.5" fill="#fff"/><rect x="6.800000000000001" y="8.5" width="3.0" height="2.0" fill="#fff"/></svg>
<div class="t" style="left:737px;top:1711.2px;height:41px;line-height:41px;color:#222;"><span style="letter-spacing:-0.4px">STD.PU_73.IN1</span>下载成功</div>
<div class="t" style="left:1691px;top:1711.2px;height:41px;line-height:41px;color:#222;letter-spacing:-0.4px;">10:49:09 AM</div>
<svg style="left:512px;top:1763px;" width="20" height="20" viewBox="0 0 20 20"><circle cx="10" cy="10" r="10" fill="#0060df"/><circle cx="10" cy="5.0" r="2.0" fill="#fff"/><rect x="8.2" y="8.5" width="3.5999999999999996" height="7.5" fill="#fff"/><rect x="6.800000000000001" y="8.5" width="3.0" height="2.0" fill="#fff"/></svg>
<div class="t" style="left:707px;top:1751.2px;height:41px;line-height:41px;color:#2878f0;">任务</div>
<svg style="left:512px;top:1803px;" width="20" height="20" viewBox="0 0 20 20"><circle cx="10" cy="10" r="10" fill="#0060df"/><circle cx="10" cy="5.0" r="2.0" fill="#fff"/><rect x="8.2" y="8.5" width="3.5999999999999996" height="7.5" fill="#fff"/><rect x="6.800000000000001" y="8.5" width="3.0" height="2.0" fill="#fff"/></svg>
<div class="t" style="left:707px;top:1791.2px;height:41px;line-height:41px;color:#2878f0;">IO映射变量</div>
<svg style="left:512px;top:1843px;" width="20" height="20" viewBox="0 0 20 20"><circle cx="10" cy="10" r="10" fill="#0060df"/><circle cx="10" cy="5.0" r="2.0" fill="#fff"/><rect x="8.2" y="8.5" width="3.5999999999999996" height="7.5" fill="#fff"/><rect x="6.800000000000001" y="8.5" width="3.0" height="2.0" fill="#fff"/></svg>
<div class="t" style="left:707px;top:1831.2px;height:41px;line-height:41px;color:#2878f0;">用户数据类型</div>
<div style="left:458px;top:1873px;width:1620px;height:14.500px;overflow:hidden;">
<svg style="left:54px;top:10px;" width="20" height="20" viewBox="0 0 20 20"><circle cx="10" cy="10" r="10" fill="#0060df"/><circle cx="10" cy="5.0" r="2.0" fill="#fff"/><rect x="8.2" y="8.5" width="3.5999999999999996" height="7.5" fill="#fff"/><rect x="6.800000000000001" y="8.5" width="3.0" height="2.0" fill="#fff"/></svg>
<div class="t" style="left:249px;top:0px;height:41px;line-height:41px;color:#2878f0;">轴功能块</div>
</div>
<div style="left:458px;top:1354.5px;width:1620px;height:38.5px;background:#f3f3f3;box-shadow:0 3px 6px rgba(0,0,0,0.15);"></div>
<div style="left:601px;top:1364px;width:1.5px;height:19px;background:#c4c4c4;"></div>
<div class="t" style="left:616px;top:1352px;height:40px;line-height:40px;color:#111;">路径</div>
<div style="left:1676px;top:1364px;width:1.5px;height:19px;background:#c4c4c4;"></div>
<div class="t" style="left:1691px;top:1352px;height:40px;line-height:40px;color:#111;">时间</div>
<div style="left:2069.5px;top:1394px;width:8px;height:403px;background:#c8c8c8;border-radius:4px;"></div>
<div style="left:2113px;top:80px;width:3px;height:1825px;background:#a6c3f8;"></div>
<div style="left:2116px;top:80px;width:365px;height:1825px;background:#f7fafe;"></div>
<div style="left:2116px;top:80px;width:365px;height:40px;background:#dce8fd;"></div>
<div class="t" style="left:2132px;top:79.5px;height:41px;line-height:41px;color:#111;">资源</div>
<svg style="left:2434px;top:96px;" width="21" height="17" viewBox="0 0 21 17"><path d="M0 1.500 h9 M0 8 h7" stroke="#1c6cf0" stroke-width="2.200"/><path d="M0 15 h20" stroke="#1c6cf0" stroke-width="2.400"/><path d="M10.500 1 h10.500 l-5.250 7 z" fill="#1c6cf0"/></svg>
<div style="left:2131.5px;top:128.5px;width:182px;height:41px;background:#fff;border:1px solid #e1e7f1;border-radius:7px;"></div>
<div class="t" style="left:2149px;top:127px;height:41px;line-height:41px;color:#a0a0a0;">搜索</div>
<svg style="left:2334px;top:138.5px;" width="23" height="23" viewBox="0 0 23 23"><circle cx="9.500" cy="9.500" r="8.300" fill="none" stroke="#2878f0" stroke-width="1.500"/><path d="M15.500 15.500 L21 21" stroke="#2878f0" stroke-width="1.600" stroke-linecap="round"/></svg>
<svg style="left:2382px;top:137px;" width="25" height="25" viewBox="0 0 25 25"><g fill="none" stroke="#2878f0" stroke-width="1.700" stroke-linejoin="round" stroke-linecap="round"><g transform="rotate(45 12.500 12.500)"><rect x="0" y="8.700" width="25" height="7.600" rx="1"/><path d="M5 8.700 v3 M9 8.700 v2 M16 8.700 v2 M20 8.700 v3"/></g><g transform="rotate(-45 12.500 12.500)"><path d="M3 8.700 H23 a2 2 0 0 1 2 2 v3.600 a2 2 0 0 1 -2 2 H3 L-1.500 12.500 Z" fill="#f7fafe"/><path d="M3 8.700 v7.600 M20.500 8.700 v7.600"/></g></g></svg>
<div style="left:2424px;top:130px;width:40px;height:38.5px;background:#c5d9fb;border-radius:6px;"></div>
<svg style="left:2434px;top:139px;" width="22" height="21" viewBox="0 0 22 21"><path d="M0 1.500 h20.500 M0 9.500 h7 M0 17.500 h6" stroke="#2878f0" stroke-width="2.200" fill="none"/><path d="M14.500 6.500 l2.100 4.300 l4.700 0.700 l-3.400 3.300 l0.800 4.700 l-4.200 -2.200 l-4.200 2.200 l0.800 -4.700 l-3.400 -3.300 l4.700 -0.700 z" fill="#2878f0"/></svg>
<div style="left:2116px;top:177.5px;width:365px;height:37px;background:#dde9fd;border-radius:6px;"></div>
<div class="t" style="left:2120px;top:176.0px;height:38px;line-height:38px;color:#2878f0;font-weight:bold;">基础指令</div>
<svg style="left:2454px;top:191.0px;" width="18" height="11" viewBox="0 0 18 11"><path d="M1.500 1.500 L9 9 L16.500 1.500" fill="none" stroke="#2878f0" stroke-width="1.800" stroke-linecap="round" stroke-linejoin="round"/></svg>
<div style="left:2118px;top:218.0px;width:360px;height:37px;background:#eff1f6;border-radius:7px;"></div>
<svg style="left:2129.75px;top:227.0px;" width="13.5" height="19.0" viewBox="0 0 13.5 19.0"><path d="M3 2 L10.5 9.5 L3 17.0" fill="none" stroke="#333" stroke-width="1.9" stroke-linecap="round" stroke-linejoin="round"/></svg>
<svg style="left:2154px;top:228.5px;" width="18.5" height="16" viewBox="0 0 22 19"><path d="M1.5 4.5 a2 2 0 0 1 2 -2 h5 l2 2.6 h8.5 a1.6 1.6 0 0 1 1.6 1.6 v9.8 a1.6 1.6 0 0 1 -1.6 1.6 h-15.9 a1.6 1.6 0 0 1 -1.6 -1.6 z M8 5.1 h3" fill="none" stroke="#333" stroke-width="2" stroke-linejoin="round"/></svg>
<div class="t" style="left:2183.5px;top:215.0px;height:40px;line-height:40px;color:#222;">常规及连接元素</div>
<div style="left:2118px;top:258.0px;width:360px;height:37px;background:#eff1f6;border-radius:7px;"></div>
<svg style="left:2129.75px;top:267.0px;" width="13.5" height="19.0" viewBox="0 0 13.5 19.0"><path d="M3 2 L10.5 9.5 L3 17.0" fill="none" stroke="#333" stroke-width="1.9" stroke-linecap="round" stroke-linejoin="round"/></svg>
<svg style="left:2154px;top:268.5px;" width="18.5" height="16" viewBox="0 0 22 19"><path d="M1.5 4.5 a2 2 0 0 1 2 -2 h5 l2 2.6 h8.5 a1.6 1.6 0 0 1 1.6 1.6 v9.8 a1.6 1.6 0 0 1 -1.6 1.6 h-15.9 a1.6 1.6 0 0 1 -1.6 -1.6 z M8 5.1 h3" fill="none" stroke="#333" stroke-width="2" stroke-linejoin="round"/></svg>
<div class="t" style="left:2183.5px;top:255.0px;height:40px;line-height:40px;color:#222;">布尔指令</div>
<div style="left:2118px;top:298.0px;width:360px;height:37px;background:#eff1f6;border-radius:7px;"></div>
<svg style="left:2129.75px;top:307.0px;" width="13.5" height="19.0" viewBox="0 0 13.5 19.0"><path d="M3 2 L10.5 9.5 L3 17.0" fill="none" stroke="#333" stroke-width="1.9" stroke-linecap="round" stroke-linejoin="round"/></svg>
<svg style="left:2154px;top:308.5px;" width="18.5" height="16" viewBox="0 0 22 19"><path d="M1.5 4.5 a2 2 0 0 1 2 -2 h5 l2 2.6 h8.5 a1.6 1.6 0 0 1 1.6 1.6 v9.8 a1.6 1.6 0 0 1 -1.6 1.6 h-15.9 a1.6 1.6 0 0 1 -1.6 -1.6 z M8 5.1 h3" fill="none" stroke="#333" stroke-width="2" stroke-linejoin="round"/></svg>
<div class="t" style="left:2183.5px;top:295.0px;height:40px;line-height:40px;color:#222;">跳转指令</div>
<div style="left:2118px;top:338.0px;width:360px;height:37px;background:#eff1f6;border-radius:7px;"></div>
<svg style="left:2129.75px;top:347.0px;" width="13.5" height="19.0" viewBox="0 0 13.5 19.0"><path d="M3 2 L10.5 9.5 L3 17.0" fill="none" stroke="#333" stroke-width="1.9" stroke-linecap="round" stroke-linejoin="round"/></svg>
<svg style="left:2154px;top:348.5px;" width="18.5" height="16" viewBox="0 0 22 19"><path d="M1.5 4.5 a2 2 0 0 1 2 -2 h5 l2 2.6 h8.5 a1.6 1.6 0 0 1 1.6 1.6 v9.8 a1.6 1.6 0 0 1 -1.6 1.6 h-15.9 a1.6 1.6 0 0 1 -1.6 -1.6 z M8 5.1 h3" fill="none" stroke="#333" stroke-width="2" stroke-linejoin="round"/></svg>
<div class="t" style="left:2183.5px;top:335.0px;height:40px;line-height:40px;color:#222;">算术指令</div>
<div style="left:2118px;top:378.0px;width:360px;height:37px;background:#eff1f6;border-radius:7px;"></div>
<svg style="left:2129.75px;top:387.0px;" width="13.5" height="19.0" viewBox="0 0 13.5 19.0"><path d="M3 2 L10.5 9.5 L3 17.0" fill="none" stroke="#333" stroke-width="1.9" stroke-linecap="round" stroke-linejoin="round"/></svg>
<svg style="left:2154px;top:388.5px;" width="18.5" height="16" viewBox="0 0 22 19"><path d="M1.5 4.5 a2 2 0 0 1 2 -2 h5 l2 2.6 h8.5 a1.6 1.6 0 0 1 1.6 1.6 v9.8 a1.6 1.6 0 0 1 -1.6 1.6 h-15.9 a1.6 1.6 0 0 1 -1.6 -1.6 z M8 5.1 h3" fill="none" stroke="#333" stroke-width="2" stroke-linejoin="round"/></svg>
<div class="t" style="left:2183.5px;top:375.0px;height:40px;line-height:40px;color:#222;">位逻辑指令</div>
<div style="left:2118px;top:418.0px;width:360px;height:37px;background:#eff1f6;border-radius:7px;"></div>
<svg style="left:2129.75px;top:427.0px;" width="13.5" height="19.0" viewBox="0 0 13.5 19.0"><path d="M3 2 L10.5 9.5 L3 17.0" fill="none" stroke="#333" stroke-width="1.9" stroke-linecap="round" stroke-linejoin="round"/></svg>
<svg style="left:2154px;top:428.5px;" width="18.5" height="16" viewBox="0 0 22 19"><path d="M1.5 4.5 a2 2 0 0 1 2 -2 h5 l2 2.6 h8.5 a1.6 1.6 0 0 1 1.6 1.6 v9.8 a1.6 1.6 0 0 1 -1.6 1.6 h-15.9 a1.6 1.6 0 0 1 -1.6 -1.6 z M8 5.1 h3" fill="none" stroke="#333" stroke-width="2" stroke-linejoin="round"/></svg>
<div class="t" style="left:2183.5px;top:415.0px;height:40px;line-height:40px;color:#222;">比较指令</div>
<div style="left:2116px;top:631.5px;width:365px;height:3.5px;background:#a6c3f8;"></div>
<div style="left:2116px;top:635.5px;width:365px;height:35.5px;background:#dde9fd;border-radius:6px;"></div>
<div class="t" style="left:2120px;top:634.0px;height:36.5px;line-height:36.5px;color:#2878f0;font-weight:bold;">系统库初级指令</div>
<svg style="left:2454px;top:648.25px;" width="18" height="11" viewBox="0 0 18 11"><path d="M1.500 1.500 L9 9 L16.500 1.500" fill="none" stroke="#2878f0" stroke-width="1.800" stroke-linecap="round" stroke-linejoin="round"/></svg>
<div style="left:2118px;top:674.0px;width:351px;height:37px;background:#eff1f6;border-radius:7px;"></div>
<svg style="left:2129.75px;top:683.0px;" width="13.5" height="19.0" viewBox="0 0 13.5 19.0"><path d="M3 2 L10.5 9.5 L3 17.0" fill="none" stroke="#333" stroke-width="1.9" stroke-linecap="round" stroke-linejoin="round"/></svg>
<svg style="left:2154px;top:684.5px;" width="18.5" height="16" viewBox="0 0 22 19"><path d="M1.5 4.5 a2 2 0 0 1 2 -2 h5 l2 2.6 h8.5 a1.6 1.6 0 0 1 1.6 1.6 v9.8 a1.6 1.6 0 0 1 -1.6 1.6 h-15.9 a1.6 1.6 0 0 1 -1.6 -1.6 z M8 5.1 h3" fill="none" stroke="#333" stroke-width="2" stroke-linejoin="round"/></svg>
<div class="t" style="left:2183.5px;top:671.0px;height:40px;line-height:40px;color:#222;">布尔逻辑运算</div>
<div class="t" style="left:2373.5px;top:670.0px;height:40px;line-height:40px;color:#222;">V1.0</div>
<svg style="left:2433.0px;top:689.5px;" width="13" height="8" viewBox="0 0 13 8"><path d="M1.500 1.500 L6.500 6 L11.500 1.500" fill="none" stroke="#dcdfe6" stroke-width="1.600" stroke-linecap="round" stroke-linejoin="round"/></svg>
<div style="left:2118px;top:714.0px;width:351px;height:37px;background:#eff1f6;border-radius:7px;"></div>
<svg style="left:2129.75px;top:723.0px;" width="13.5" height="19.0" viewBox="0 0 13.5 19.0"><path d="M3 2 L10.5 9.5 L3 17.0" fill="none" stroke="#333" stroke-width="1.9" stroke-linecap="round" stroke-linejoin="round"/></svg>
<svg style="left:2154px;top:724.5px;" width="18.5" height="16" viewBox="0 0 22 19"><path d="M1.5 4.5 a2 2 0 0 1 2 -2 h5 l2 2.6 h8.5 a1.6 1.6 0 0 1 1.6 1.6 v9.8 a1.6 1.6 0 0 1 -1.6 1.6 h-15.9 a1.6 1.6 0 0 1 -1.6 -1.6 z M8 5.1 h3" fill="none" stroke="#333" stroke-width="2" stroke-linejoin="round"/></svg>
<div class="t" style="left:2183.5px;top:711.0px;height:40px;line-height:40px;color:#222;">计数器</div>
<div class="t" style="left:2373.5px;top:710.0px;height:40px;line-height:40px;color:#222;">V1.0</div>
<svg style="left:2433.0px;top:729.5px;" width="13" height="8" viewBox="0 0 13 8"><path d="M1.500 1.500 L6.500 6 L11.500 1.500" fill="none" stroke="#dcdfe6" stroke-width="1.600" stroke-linecap="round" stroke-linejoin="round"/></svg>
<div style="left:2118px;top:754.0px;width:351px;height:37px;background:#eff1f6;border-radius:7px;"></div>
<svg style="left:2129.75px;top:763.0px;" width="13.5" height="19.0" viewBox="0 0 13.5 19.0"><path d="M3 2 L10.5 9.5 L3 17.0" fill="none" stroke="#333" stroke-width="1.9" stroke-linecap="round" stroke-linejoin="round"/></svg>
<svg style="left:2154px;top:764.5px;" width="18.5" height="16" viewBox="0 0 22 19"><path d="M1.5 4.5 a2 2 0 0 1 2 -2 h5 l2 2.6 h8.5 a1.6 1.6 0 0 1 1.6 1.6 v9.8 a1.6 1.6 0 0 1 -1.6 1.6 h-15.9 a1.6 1.6 0 0 1 -1.6 -1.6 z M8 5.1 h3" fill="none" stroke="#333" stroke-width="2" stroke-linejoin="round"/></svg>
<div class="t" style="left:2183.5px;top:751.0px;height:40px;line-height:40px;color:#222;">定时器</div>
<div class="t" style="left:2373.5px;top:750.0px;height:40px;line-height:40px;color:#222;">V1.0</div>
<svg style="left:2433.0px;top:769.5px;" width="13" height="8" viewBox="0 0 13 8"><path d="M1.500 1.500 L6.500 6 L11.500 1.500" fill="none" stroke="#dcdfe6" stroke-width="1.600" stroke-linecap="round" stroke-linejoin="round"/></svg>
<div style="left:2118px;top:794.0px;width:351px;height:37px;background:#eff1f6;border-radius:7px;"></div>
<svg style="left:2129.75px;top:803.0px;" width="13.5" height="19.0" viewBox="0 0 13.5 19.0"><path d="M3 2 L10.5 9.5 L3 17.0" fill="none" stroke="#333" stroke-width="1.9" stroke-linecap="round" stroke-linejoin="round"/></svg>
<svg style="left:2154px;top:804.5px;" width="18.5" height="16" viewBox="0 0 22 19"><path d="M1.5 4.5 a2 2 0 0 1 2 -2 h5 l2 2.6 h8.5 a1.6 1.6 0 0 1 1.6 1.6 v9.8 a1.6 1.6 0 0 1 -1.6 1.6 h-15.9 a1.6 1.6 0 0 1 -1.6 -1.6 z M8 5.1 h3" fill="none" stroke="#333" stroke-width="2" stroke-linejoin="round"/></svg>
<div class="t" style="left:2183.5px;top:791.0px;height:40px;line-height:40px;color:#222;">数值运算</div>
<div class="t" style="left:2373.5px;top:790.0px;height:40px;line-height:40px;color:#222;">V1.0</div>
<svg style="left:2433.0px;top:809.5px;" width="13" height="8" viewBox="0 0 13 8"><path d="M1.500 1.500 L6.500 6 L11.500 1.500" fill="none" stroke="#dcdfe6" stroke-width="1.600" stroke-linecap="round" stroke-linejoin="round"/></svg>
<div style="left:2118px;top:834.0px;width:351px;height:37px;background:#eff1f6;border-radius:7px;"></div>
<svg style="left:2129.75px;top:843.0px;" width="13.5" height="19.0" viewBox="0 0 13.5 19.0"><path d="M3 2 L10.5 9.5 L3 17.0" fill="none" stroke="#333" stroke-width="1.9" stroke-linecap="round" stroke-linejoin="round"/></svg>
<svg style="left:2154px;top:844.5px;" width="18.5" height="16" viewBox="0 0 22 19"><path d="M1.5 4.5 a2 2 0 0 1 2 -2 h5 l2 2.6 h8.5 a1.6 1.6 0 0 1 1.6 1.6 v9.8 a1.6 1.6 0 0 1 -1.6 1.6 h-15.9 a1.6 1.6 0 0 1 -1.6 -1.6 z M8 5.1 h3" fill="none" stroke="#333" stroke-width="2" stroke-linejoin="round"/></svg>
<div class="t" style="left:2183.5px;top:831.0px;height:40px;line-height:40px;color:#222;">串移位运算</div>
<div class="t" style="left:2373.5px;top:830.0px;height:40px;line-height:40px;color:#222;">V1.0</div>
<svg style="left:2433.0px;top:849.5px;" width="13" height="8" viewBox="0 0 13 8"><path d="M1.500 1.500 L6.500 6 L11.500 1.500" fill="none" stroke="#dcdfe6" stroke-width="1.600" stroke-linecap="round" stroke-linejoin="round"/></svg>
<div style="left:2118px;top:874.0px;width:351px;height:37px;background:#eff1f6;border-radius:7px;"></div>
<svg style="left:2129.75px;top:883.0px;" width="13.5" height="19.0" viewBox="0 0 13.5 19.0"><path d="M3 2 L10.5 9.5 L3 17.0" fill="none" stroke="#333" stroke-width="1.9" stroke-linecap="round" stroke-linejoin="round"/></svg>
<svg style="left:2154px;top:884.5px;" width="18.5" height="16" viewBox="0 0 22 19"><path d="M1.5 4.5 a2 2 0 0 1 2 -2 h5 l2 2.6 h8.5 a1.6 1.6 0 0 1 1.6 1.6 v9.8 a1.6 1.6 0 0 1 -1.6 1.6 h-15.9 a1.6 1.6 0 0 1 -1.6 -1.6 z M8 5.1 h3" fill="none" stroke="#333" stroke-width="2" stroke-linejoin="round"/></svg>
<div class="t" style="left:2183.5px;top:871.0px;height:40px;line-height:40px;color:#222;">位组装指令</div>
<div class="t" style="left:2373.5px;top:870.0px;height:40px;line-height:40px;color:#222;">V1.0</div>
<svg style="left:2433.0px;top:889.5px;" width="13" height="8" viewBox="0 0 13 8"><path d="M1.500 1.500 L6.500 6 L11.500 1.500" fill="none" stroke="#dcdfe6" stroke-width="1.600" stroke-linecap="round" stroke-linejoin="round"/></svg>
<div style="left:2118px;top:914.0px;width:351px;height:37px;background:#eff1f6;border-radius:7px;"></div>
<svg style="left:2129.75px;top:923.0px;" width="13.5" height="19.0" viewBox="0 0 13.5 19.0"><path d="M3 2 L10.5 9.5 L3 17.0" fill="none" stroke="#333" stroke-width="1.9" stroke-linecap="round" stroke-linejoin="round"/></svg>
<svg style="left:2154px;top:924.5px;" width="18.5" height="16" viewBox="0 0 22 19"><path d="M1.5 4.5 a2 2 0 0 1 2 -2 h5 l2 2.6 h8.5 a1.6 1.6 0 0 1 1.6 1.6 v9.8 a1.6 1.6 0 0 1 -1.6 1.6 h-15.9 a1.6 1.6 0 0 1 -1.6 -1.6 z M8 5.1 h3" fill="none" stroke="#333" stroke-width="2" stroke-linejoin="round"/></svg>
<div class="t" style="left:2183.5px;top:911.0px;height:40px;line-height:40px;color:#222;">选择语句</div>
<div class="t" style="left:2373.5px;top:910.0px;height:40px;line-height:40px;color:#222;">V1.0</div>
<svg style="left:2433.0px;top:929.5px;" width="13" height="8" viewBox="0 0 13 8"><path d="M1.500 1.500 L6.500 6 L11.500 1.500" fill="none" stroke="#dcdfe6" stroke-width="1.600" stroke-linecap="round" stroke-linejoin="round"/></svg>
<div style="left:2118px;top:954.0px;width:351px;height:37px;background:#eff1f6;border-radius:7px;"></div>
<svg style="left:2129.75px;top:963.0px;" width="13.5" height="19.0" viewBox="0 0 13.5 19.0"><path d="M3 2 L10.5 9.5 L3 17.0" fill="none" stroke="#333" stroke-width="1.9" stroke-linecap="round" stroke-linejoin="round"/></svg>
<svg style="left:2154px;top:964.5px;" width="18.5" height="16" viewBox="0 0 22 19"><path d="M1.5 4.5 a2 2 0 0 1 2 -2 h5 l2 2.6 h8.5 a1.6 1.6 0 0 1 1.6 1.6 v9.8 a1.6 1.6 0 0 1 -1.6 1.6 h-15.9 a1.6 1.6 0 0 1 -1.6 -1.6 z M8 5.1 h3" fill="none" stroke="#333" stroke-width="2" stroke-linejoin="round"/></svg>
<div class="t" style="left:2183.5px;top:951.0px;height:40px;line-height:40px;color:#222;">比较语句</div>
<div class="t" style="left:2373.5px;top:950.0px;height:40px;line-height:40px;color:#222;">V1.0</div>
<svg style="left:2433.0px;top:969.5px;" width="13" height="8" viewBox="0 0 13 8"><path d="M1.500 1.500 L6.500 6 L11.500 1.500" fill="none" stroke="#dcdfe6" stroke-width="1.600" stroke-linecap="round" stroke-linejoin="round"/></svg>
<div style="left:2118px;top:994.0px;width:351px;height:37px;background:#eff1f6;border-radius:7px;"></div>
<svg style="left:2127px;top:1007.0px;" width="18" height="13" viewBox="0 0 18 13"><path d="M2 3 L9 10 L16 3" fill="none" stroke="#2878f0" stroke-width="1.9" stroke-linecap="round" stroke-linejoin="round"/></svg>
<svg style="left:2154px;top:1003.5px;" width="21.5" height="18.5" viewBox="0 0 23 19"><path d="M2 16.5 V4.2 a1.7 1.7 0 0 1 1.7 -1.7 h4.8 l2 2.5 h7.5 a1.7 1.7 0 0 1 1.7 1.7 v1.6 M2 16.5 l2.6 -7 a1.6 1.6 0 0 1 1.5 -1.1 h14.2 a1 1 0 0 1 1 1.4 l-2.3 6.4 a1.6 1.6 0 0 1 -1.5 1.1 h-14 a1.5 1.5 0 0 1 -1.5 -1.5 z" fill="none" stroke="#2878f0" stroke-width="1.9" stroke-linejoin="round"/></svg>
<div class="t" style="left:2183.5px;top:991.0px;height:40px;line-height:40px;color:#2878f0;">字符串运算</div>
<div class="t" style="left:2373.5px;top:990.0px;height:40px;line-height:40px;color:#222;">V1.0</div>
<svg style="left:2433.0px;top:1009.5px;" width="13" height="8" viewBox="0 0 13 8"><path d="M1.500 1.500 L6.500 6 L11.500 1.500" fill="none" stroke="#dcdfe6" stroke-width="1.600" stroke-linecap="round" stroke-linejoin="round"/></svg>
<svg style="left:2167.5px;top:1043.5px;" width="19" height="18" viewBox="0 0 19 18"><rect x="3.500" y="1" width="14" height="16" rx="1" fill="none" stroke="#333" stroke-width="1.600"/><path d="M0 5 h18 M0.500 12.500 h3" stroke="#333" stroke-width="1.600"/></svg>
<div class="t" style="left:2197px;top:1030.0px;height:40px;line-height:40px;color:#222;letter-spacing:-0.75px;">LEN</div>
<svg style="left:2427.5px;top:1041.5px;" width="22" height="21" viewBox="0 0 22 21"><path d="M11 1.500 l2.900 6.100 l6.600 0.900 l-4.800 4.600 l1.200 6.600 l-5.900 -3.200 l-5.900 3.200 l1.200 -6.600 l-4.800 -4.600 l6.600 -0.900 z" fill="none" stroke="#f2c31b" stroke-width="1.800" stroke-linejoin="round"/></svg>
<svg style="left:2167.5px;top:1083.5px;" width="19" height="18" viewBox="0 0 19 18"><rect x="3.500" y="1" width="14" height="16" rx="1" fill="none" stroke="#333" stroke-width="1.600"/><path d="M0 5 h18 M0.500 12.500 h3" stroke="#333" stroke-width="1.600"/></svg>
<div class="t" style="left:2197px;top:1070.0px;height:40px;line-height:40px;color:#222;letter-spacing:-0.75px;">LEFT</div>
<svg style="left:2427.5px;top:1081.5px;" width="22" height="21" viewBox="0 0 22 21"><path d="M11 1.500 l2.900 6.100 l6.600 0.900 l-4.800 4.600 l1.200 6.600 l-5.900 -3.200 l-5.900 3.200 l1.200 -6.600 l-4.800 -4.600 l6.600 -0.900 z" fill="none" stroke="#f2c31b" stroke-width="1.800" stroke-linejoin="round"/></svg>
<svg style="left:2167.5px;top:1123.5px;" width="19" height="18" viewBox="0 0 19 18"><rect x="3.500" y="1" width="14" height="16" rx="1" fill="none" stroke="#333" stroke-width="1.600"/><path d="M0 5 h18 M0.500 12.500 h3" stroke="#333" stroke-width="1.600"/></svg>
<div class="t" style="left:2197px;top:1110.0px;height:40px;line-height:40px;color:#222;letter-spacing:-0.75px;">RIGHT</div>
<svg style="left:2427.5px;top:1121.5px;" width="22" height="21" viewBox="0 0 22 21"><path d="M11 1.500 l2.900 6.100 l6.600 0.900 l-4.800 4.600 l1.200 6.600 l-5.900 -3.200 l-5.900 3.200 l1.200 -6.600 l-4.800 -4.600 l6.600 -0.900 z" fill="none" stroke="#f2c31b" stroke-width="1.800" stroke-linejoin="round"/></svg>
<svg style="left:2167.5px;top:1163.5px;" width="19" height="18" viewBox="0 0 19 18"><rect x="3.500" y="1" width="14" height="16" rx="1" fill="none" stroke="#333" stroke-width="1.600"/><path d="M0 5 h18 M0.500 12.500 h3" stroke="#333" stroke-width="1.600"/></svg>
<div class="t" style="left:2197px;top:1150.0px;height:40px;line-height:40px;color:#222;letter-spacing:-0.75px;">MID</div>
<svg style="left:2427.5px;top:1161.5px;" width="22" height="21" viewBox="0 0 22 21"><path d="M11 1.500 l2.900 6.100 l6.600 0.900 l-4.800 4.600 l1.200 6.600 l-5.900 -3.200 l-5.900 3.200 l1.200 -6.600 l-4.800 -4.600 l6.600 -0.900 z" fill="none" stroke="#f2c31b" stroke-width="1.800" stroke-linejoin="round"/></svg>
<svg style="left:2167.5px;top:1203.5px;" width="19" height="18" viewBox="0 0 19 18"><rect x="3.500" y="1" width="14" height="16" rx="1" fill="none" stroke="#333" stroke-width="1.600"/><path d="M0 5 h18 M0.500 12.500 h3" stroke="#333" stroke-width="1.600"/></svg>
<div class="t" style="left:2197px;top:1190.0px;height:40px;line-height:40px;color:#222;letter-spacing:-0.75px;">CONCAT</div>
<svg style="left:2427.5px;top:1201.5px;" width="22" height="21" viewBox="0 0 22 21"><path d="M11 1.500 l2.900 6.100 l6.600 0.900 l-4.800 4.600 l1.200 6.600 l-5.900 -3.200 l-5.900 3.200 l1.200 -6.600 l-4.800 -4.600 l6.600 -0.900 z" fill="none" stroke="#f2c31b" stroke-width="1.800" stroke-linejoin="round"/></svg>
<svg style="left:2167.5px;top:1243.5px;" width="19" height="18" viewBox="0 0 19 18"><rect x="3.500" y="1" width="14" height="16" rx="1" fill="none" stroke="#333" stroke-width="1.600"/><path d="M0 5 h18 M0.500 12.500 h3" stroke="#333" stroke-width="1.600"/></svg>
<div class="t" style="left:2197px;top:1230.0px;height:40px;line-height:40px;color:#222;letter-spacing:-0.75px;">INSERT</div>
<svg style="left:2427.5px;top:1241.5px;" width="22" height="21" viewBox="0 0 22 21"><path d="M11 1.500 l2.900 6.100 l6.600 0.900 l-4.800 4.600 l1.200 6.600 l-5.900 -3.200 l-5.900 3.200 l1.200 -6.600 l-4.800 -4.600 l6.600 -0.900 z" fill="none" stroke="#f2c31b" stroke-width="1.800" stroke-linejoin="round"/></svg>
<svg style="left:2167.5px;top:1283.5px;" width="19" height="18" viewBox="0 0 19 18"><rect x="3.500" y="1" width="14" height="16" rx="1" fill="none" stroke="#333" stroke-width="1.600"/><path d="M0 5 h18 M0.500 12.500 h3" stroke="#333" stroke-width="1.600"/></svg>
<div class="t" style="left:2197px;top:1270.0px;height:40px;line-height:40px;color:#222;letter-spacing:-0.75px;">DELETE</div>
<svg style="left:2427.5px;top:1281.5px;" width="22" height="21" viewBox="0 0 22 21"><path d="M11 1.500 l2.900 6.100 l6.600 0.900 l-4.800 4.600 l1.200 6.600 l-5.900 -3.200 l-5.900 3.200 l1.200 -6.600 l-4.800 -4.600 l6.600 -0.900 z" fill="none" stroke="#f2c31b" stroke-width="1.800" stroke-linejoin="round"/></svg>
<svg style="left:2167.5px;top:1323.5px;" width="19" height="18" viewBox="0 0 19 18"><rect x="3.500" y="1" width="14" height="16" rx="1" fill="none" stroke="#333" stroke-width="1.600"/><path d="M0 5 h18 M0.500 12.500 h3" stroke="#333" stroke-width="1.600"/></svg>
<div class="t" style="left:2197px;top:1310.0px;height:40px;line-height:40px;color:#222;letter-spacing:-0.75px;">REPLACE</div>
<svg style="left:2427.5px;top:1321.5px;" width="22" height="21" viewBox="0 0 22 21"><path d="M11 1.500 l2.900 6.100 l6.600 0.900 l-4.800 4.600 l1.200 6.600 l-5.900 -3.200 l-5.900 3.200 l1.200 -6.600 l-4.800 -4.600 l6.600 -0.900 z" fill="none" stroke="#f2c31b" stroke-width="1.800" stroke-linejoin="round"/></svg>
<svg style="left:2167.5px;top:1363.5px;" width="19" height="18" viewBox="0 0 19 18"><rect x="3.500" y="1" width="14" height="16" rx="1" fill="none" stroke="#333" stroke-width="1.600"/><path d="M0 5 h18 M0.500 12.500 h3" stroke="#333" stroke-width="1.600"/></svg>
<div class="t" style="left:2197px;top:1350.0px;height:40px;line-height:40px;color:#222;letter-spacing:-0.75px;">FIND</div>
<svg style="left:2427.5px;top:1361.5px;" width="22" height="21" viewBox="0 0 22 21"><path d="M11 1.500 l2.900 6.100 l6.600 0.900 l-4.800 4.600 l1.200 6.600 l-5.900 -3.200 l-5.900 3.200 l1.200 -6.600 l-4.800 -4.600 l6.600 -0.900 z" fill="none" stroke="#f2c31b" stroke-width="1.800" stroke-linejoin="round"/></svg>
<svg style="left:2167.5px;top:1402.5px;" width="19" height="18" viewBox="0 0 19 18"><rect x="3.500" y="1" width="14" height="16" rx="1" fill="none" stroke="#333" stroke-width="1.600"/><path d="M0 5 h18 M0.500 12.500 h3" stroke="#333" stroke-width="1.600"/></svg>
<div class="t" style="left:2197px;top:1389.0px;height:40px;line-height:40px;color:#222;letter-spacing:-0.75px;">CHARS_TO_STRING</div>
<svg style="left:2427.5px;top:1400.5px;" width="22" height="21" viewBox="0 0 22 21"><path d="M11 1.500 l2.900 6.100 l6.600 0.900 l-4.800 4.600 l1.200 6.600 l-5.900 -3.200 l-5.900 3.200 l1.200 -6.600 l-4.800 -4.600 l6.600 -0.900 z" fill="none" stroke="#f2c31b" stroke-width="1.800" stroke-linejoin="round"/></svg>
<svg style="left:2167.5px;top:1442.5px;" width="19" height="18" viewBox="0 0 19 18"><rect x="3.500" y="1" width="14" height="16" rx="1" fill="none" stroke="#333" stroke-width="1.600"/><path d="M0 5 h18 M0.500 12.500 h3" stroke="#333" stroke-width="1.600"/></svg>
<div class="t" style="left:2197px;top:1429.0px;height:40px;line-height:40px;color:#222;letter-spacing:-0.75px;">STRING_TO_CHARS</div>
<svg style="left:2427.5px;top:1440.5px;" width="22" height="21" viewBox="0 0 22 21"><path d="M11 1.500 l2.900 6.100 l6.600 0.900 l-4.800 4.600 l1.200 6.600 l-5.900 -3.200 l-5.900 3.200 l1.200 -6.600 l-4.800 -4.600 l6.600 -0.900 z" fill="none" stroke="#f2c31b" stroke-width="1.800" stroke-linejoin="round"/></svg>
<div style="left:2116px;top:1470px;width:365px;height:31px;overflow:hidden;">
<div style="left:2px;top:3.0px;width:351px;height:37px;background:#eff1f6;border-radius:7px;"></div>
<svg style="left:13.75px;top:12.0px;" width="13.5" height="19.0" viewBox="0 0 13.5 19.0"><path d="M3 2 L10.5 9.5 L3 17.0" fill="none" stroke="#333" stroke-width="1.9" stroke-linecap="round" stroke-linejoin="round"/></svg>
<svg style="left:38px;top:13.5px;" width="18.5" height="16" viewBox="0 0 22 19"><path d="M1.5 4.5 a2 2 0 0 1 2 -2 h5 l2 2.6 h8.5 a1.6 1.6 0 0 1 1.6 1.6 v9.8 a1.6 1.6 0 0 1 -1.6 1.6 h-15.9 a1.6 1.6 0 0 1 -1.6 -1.6 z M8 5.1 h3" fill="none" stroke="#333" stroke-width="2" stroke-linejoin="round"/></svg>
<div class="t" style="left:67.5px;top:0.0px;height:40px;line-height:40px;color:#222;">数据转换语句</div>
<div class="t" style="left:257.5px;top:-1.0px;height:40px;line-height:40px;color:#222;">V1.0</div>
<svg style="left:317.0px;top:18.5px;" width="13" height="8" viewBox="0 0 13 8"><path d="M1.500 1.500 L6.500 6 L11.500 1.500" fill="none" stroke="#dcdfe6" stroke-width="1.600" stroke-linecap="round" stroke-linejoin="round"/></svg>
</div>
<div style="left:2472.5px;top:671.5px;width:8px;height:747px;background:#c6c6c6;border-radius:4px;"></div>
<div style="left:2116px;top:1501px;width:365px;height:3.5px;background:#a6c3f8;"></div>
<div style="left:2116px;top:1505.5px;width:365px;height:35.5px;background:#dde9fd;border-radius:6px;"></div>
<div class="t" style="left:2120px;top:1504.0px;height:36.5px;line-height:36.5px;color:#2878f0;font-weight:bold;">系统库高级指令</div>
<svg style="left:2454px;top:1518.25px;" width="18" height="11" viewBox="0 0 18 11"><path d="M1.500 1.500 L9 9 L16.500 1.500" fill="none" stroke="#2878f0" stroke-width="1.800" stroke-linecap="round" stroke-linejoin="round"/></svg>
<div style="left:2118px;top:1544.5px;width:351px;height:37px;background:#eff1f6;border-radius:7px;"></div>
<svg style="left:2129.75px;top:1553.5px;" width="13.5" height="19.0" viewBox="0 0 13.5 19.0"><path d="M3 2 L10.5 9.5 L3 17.0" fill="none" stroke="#333" stroke-width="1.9" stroke-linecap="round" stroke-linejoin="round"/></svg>
<svg style="left:2154px;top:1555.0px;" width="18.5" height="16" viewBox="0 0 22 19"><path d="M1.5 4.5 a2 2 0 0 1 2 -2 h5 l2 2.6 h8.5 a1.6 1.6 0 0 1 1.6 1.6 v9.8 a1.6 1.6 0 0 1 -1.6 1.6 h-15.9 a1.6 1.6 0 0 1 -1.6 -1.6 z M8 5.1 h3" fill="none" stroke="#333" stroke-width="2" stroke-linejoin="round"/></svg>
<div class="t" style="left:2183.5px;top:1541.5px;height:40px;line-height:40px;color:#222;">日期和时间函数</div>
<div class="t" style="left:2373.5px;top:1540.5px;height:40px;line-height:40px;color:#222;">V1.0</div>
<svg style="left:2433.0px;top:1560px;" width="13" height="8" viewBox="0 0 13 8"><path d="M1.500 1.500 L6.500 6 L11.500 1.500" fill="none" stroke="#dcdfe6" stroke-width="1.600" stroke-linecap="round" stroke-linejoin="round"/></svg>
<div style="left:2118px;top:1585.0px;width:351px;height:37px;background:#eff1f6;border-radius:7px;"></div>
<svg style="left:2129.75px;top:1594.0px;" width="13.5" height="19.0" viewBox="0 0 13.5 19.0"><path d="M3 2 L10.5 9.5 L3 17.0" fill="none" stroke="#333" stroke-width="1.9" stroke-linecap="round" stroke-linejoin="round"/></svg>
<svg style="left:2154px;top:1595.5px;" width="18.5" height="16" viewBox="0 0 22 19"><path d="M1.5 4.5 a2 2 0 0 1 2 -2 h5 l2 2.6 h8.5 a1.6 1.6 0 0 1 1.6 1.6 v9.8 a1.6 1.6 0 0 1 -1.6 1.6 h-15.9 a1.6 1.6 0 0 1 -1.6 -1.6 z M8 5.1 h3" fill="none" stroke="#333" stroke-width="2" stroke-linejoin="round"/></svg>
<div class="t" style="left:2183.5px;top:1582.0px;height:40px;line-height:40px;color:#222;">系统与诊断函数</div>
<div class="t" style="left:2373.5px;top:1581.0px;height:40px;line-height:40px;color:#222;">V1.0</div>
<svg style="left:2433.0px;top:1600.5px;" width="13" height="8" viewBox="0 0 13 8"><path d="M1.500 1.500 L6.500 6 L11.500 1.500" fill="none" stroke="#dcdfe6" stroke-width="1.600" stroke-linecap="round" stroke-linejoin="round"/></svg>
<div style="left:2116px;top:1620px;width:365px;height:39px;overflow:hidden;">
<div style="left:2px;top:5.0px;width:351px;height:37px;background:#eff1f6;border-radius:7px;"></div>
<svg style="left:13.75px;top:14.0px;" width="13.5" height="19.0" viewBox="0 0 13.5 19.0"><path d="M3 2 L10.5 9.5 L3 17.0" fill="none" stroke="#333" stroke-width="1.9" stroke-linecap="round" stroke-linejoin="round"/></svg>
<svg style="left:38px;top:15.5px;" width="18.5" height="16" viewBox="0 0 22 19"><path d="M1.5 4.5 a2 2 0 0 1 2 -2 h5 l2 2.6 h8.5 a1.6 1.6 0 0 1 1.6 1.6 v9.8 a1.6 1.6 0 0 1 -1.6 1.6 h-15.9 a1.6 1.6 0 0 1 -1.6 -1.6 z M8 5.1 h3" fill="none" stroke="#333" stroke-width="2" stroke-linejoin="round"/></svg>
<div class="t" style="left:67.5px;top:2.0px;height:40px;line-height:40px;color:#222;">通讯函数</div>
<div class="t" style="left:257.5px;top:1.0px;height:40px;line-height:40px;color:#222;">V1.0</div>
<svg style="left:317.0px;top:20.5px;" width="13" height="8" viewBox="0 0 13 8"><path d="M1.500 1.500 L6.500 6 L11.500 1.500" fill="none" stroke="#dcdfe6" stroke-width="1.600" stroke-linecap="round" stroke-linejoin="round"/></svg>
</div>
<div style="left:2472.5px;top:1541px;width:8px;height:111px;background:#c6c6c6;border-radius:4px;"></div>
<div style="left:2116px;top:1658.5px;width:365px;height:3.5px;background:#a6c3f8;"></div>
<div style="left:2116px;top:1662.5px;width:365px;height:36px;background:#dde9fd;border-radius:6px;"></div>
<div class="t" style="left:2120px;top:1661.0px;height:37px;line-height:37px;color:#2878f0;font-weight:bold;">系统库工艺指令</div>
<svg style="left:2454px;top:1675.5px;" width="18" height="11" viewBox="0 0 18 11"><path d="M1.500 1.500 L9 9 L16.500 1.500" fill="none" stroke="#2878f0" stroke-width="1.800" stroke-linecap="round" stroke-linejoin="round"/></svg>
<div style="left:2118px;top:1702.0px;width:360px;height:37px;background:#eff1f6;border-radius:7px;"></div>
<svg style="left:2129.75px;top:1711.0px;" width="13.5" height="19.0" viewBox="0 0 13.5 19.0"><path d="M3 2 L10.5 9.5 L3 17.0" fill="none" stroke="#333" stroke-width="1.9" stroke-linecap="round" stroke-linejoin="round"/></svg>
<svg style="left:2154px;top:1712.5px;" width="18.5" height="16" viewBox="0 0 22 19"><path d="M1.5 4.5 a2 2 0 0 1 2 -2 h5 l2 2.6 h8.5 a1.6 1.6 0 0 1 1.6 1.6 v9.8 a1.6 1.6 0 0 1 -1.6 1.6 h-15.9 a1.6 1.6 0 0 1 -1.6 -1.6 z M8 5.1 h3" fill="none" stroke="#333" stroke-width="2" stroke-linejoin="round"/></svg>
<div class="t" style="left:2183.5px;top:1699.0px;height:40px;line-height:40px;color:#222;">单轴函数</div>
<div class="t" style="left:2383.5px;top:1698.0px;height:40px;line-height:40px;color:#222;">V1.0</div>
<svg style="left:2443.0px;top:1717.5px;" width="13" height="8" viewBox="0 0 13 8"><path d="M1.500 1.500 L6.500 6 L11.500 1.500" fill="none" stroke="#dcdfe6" stroke-width="1.600" stroke-linecap="round" stroke-linejoin="round"/></svg>
<svg style="left:2451px;top:1714px;" width="20" height="28" viewBox="0 0 20 28"><path d="M1.500 1.500 V22 L6.500 17.500 L10 25.500 L13.500 24 L10 16.500 H17 Z" fill="#fff" stroke="#222" stroke-width="1.400" stroke-linejoin="round"/></svg>
<div style="left:2116px;top:1781px;width:365px;height:3.5px;background:#a6c3f8;"></div>
<div style="left:2116px;top:1785.5px;width:365px;height:36px;background:#dde9fd;border-radius:6px;"></div>
<div class="t" style="left:2120px;top:1784.0px;height:37px;line-height:37px;color:#2878f0;font-weight:bold;">用户库</div>
<svg style="left:2454px;top:1798.5px;" width="18" height="11" viewBox="0 0 18 11"><path d="M1.500 1.500 L9 9 L16.500 1.500" fill="none" stroke="#2878f0" stroke-width="1.800" stroke-linecap="round" stroke-linejoin="round"/></svg>
<div class="t" style="left:2163px;top:1814.5px;height:40px;line-height:40px;color:#222;font-weight:bold;">无符合条件函数</div>
<div style="left:2480.5px;top:80px;width:3.5px;height:1825px;background:#a6c3f8;"></div>
<div style="left:2484px;top:80px;width:54px;height:1825px;background:#dce8fd;"></div>
<div style="left:2484px;top:140.5px;width:54px;height:57.5px;background:#bfd6fb;"></div>
<div style="left:2484px;top:139.5px;width:54px;height:2px;background:#a5bdea;"></div>
<svg style="left:2498px;top:96px;" width="29" height="28" viewBox="0 0 29 28"><rect x="11.500" y="0.800" width="16" height="19.500" rx="1" fill="none" stroke="#f0c94a" stroke-width="1.200"/>
<path d="M17.500 3.500 v6 M20 3.500 v6" stroke="#f0c94a" stroke-width="1" fill="none"/><rect x="22" y="3.500" width="3" height="6" fill="none" stroke="#f0c94a" stroke-width="1"/>
<path d="M19 13 h6.500 M19 15.500 h6.500 M19 18 h6.500" stroke="#f0c94a" stroke-width="1.100" stroke-dasharray="1.500 1" fill="none"/>
<rect x="0.800" y="11" width="16.500" height="12" rx="1.500" fill="#dce8fd" stroke="#f5a623" stroke-width="1.400"/>
<path d="M4.500 17 l3 2.800 l5.500 -5.500" fill="none" stroke="#f5a623" stroke-width="1.500"/>
<rect x="7" y="23.500" width="3.500" height="2.500" fill="#f5a623"/><path d="M1 27 h4 M6.500 27 h5 M13 27 h4" stroke="#f5a623" stroke-width="1.400" fill="none"/></svg>
<svg style="left:2492.5px;top:152.5px;" width="36" height="36" viewBox="0 0 36 36"><rect x="0" y="0" width="15.500" height="10" rx="4" fill="#2a3f9e"/><rect x="19.500" y="3" width="16" height="15" rx="4" fill="#2a3f9e"/><rect x="19.500" y="0" width="16" height="15" rx="4" fill="#0060df"/>
<rect x="0" y="20" width="15.500" height="16" rx="4" fill="#2a3f9e"/><rect x="0" y="17" width="15.500" height="16" rx="4" fill="#0060df"/>
<rect x="19.500" y="24" width="16" height="12" rx="4" fill="#2a3f9e"/><rect x="19.500" y="21.500" width="16" height="12" rx="4" fill="#0060df"/>
<path d="M1 9 q7 5 14 0" fill="none" stroke="#eaf1fe" stroke-width="1.500"/></svg>
<svg style="left:0px;top:0px;" width="6" height="6" viewBox="0 0 6 6"><path d="M0 0 H5.500 A5.500 5.500 0 0 0 0 5.500 Z" fill="#58595b"/></svg>
<svg style="left:2532px;top:0px;" width="6" height="6" viewBox="0 0 6 6"><path d="M6 0 H0.500 A5.500 5.500 0 0 1 6 5.500 Z" fill="#58595b"/></svg>
<div style="left:55px;top:1893.5px;width:357px;height:12px;background:#f7fafe;"></div>
<div style="left:0px;top:1905px;width:2538px;height:33px;background:#007acc;"></div>
<div class="t" style="left:20px;top:1911px;height:33px;line-height:33px;color:#fff;padding-top:0;">语言服务空闲</div>
<svg style="left:161px;top:1914.5px;" width="21" height="21" viewBox="0 0 21 21"><circle cx="10.500" cy="10.500" r="9.300" fill="none" stroke="#fff" stroke-width="1.700"/><path d="M6.500 6.500 l8 8 M14.500 6.500 l-8 8" stroke="#fff" stroke-width="1.700"/></svg>
<div class="t" style="left:188px;top:1911.5px;height:33px;line-height:33px;color:#fff;padding-top:0;">0</div>
<svg style="left:205px;top:1913px;" width="23" height="21" viewBox="0 0 23 21"><path d="M11.500 2 L21.500 19.500 H1.500 Z" fill="none" stroke="#fff" stroke-width="1.700" stroke-linejoin="round"/><path d="M11.500 8 v6.500 M11.500 16 v1.800" stroke="#fff" stroke-width="1.900"/></svg>
<div class="t" style="left:232.5px;top:1911.5px;height:33px;line-height:33px;color:#fff;padding-top:0;">0</div>
<div class="t" style="left:263px;top:1911px;height:33px;line-height:33px;color:#fff;padding-top:0;">ClientID-db9e2598-17da-4ff3-8a3e-3d8cc5283da2</div>
<svg style="left:2256.5px;top:1912px;" width="24" height="26" viewBox="0 0 24 26"><path d="M3 19 c2.500 -2 3 -4 3 -8 a6 6 0 0 1 7 -6 M17.500 12 c0 3 0.800 5 3 7 z M3 19 h17.500 M9 22 a3 3 0 0 0 5.500 0" fill="none" stroke="#fff" stroke-width="1.900" stroke-linejoin="round"/><circle cx="15.500" cy="6.500" r="4.500" fill="#fff"/></svg>
<div class="t" style="left:2284px;top:1911px;height:33px;line-height:33px;color:#fff;padding-top:0;">3</div>
<svg style="left:2315px;top:1915px;" width="22" height="19" viewBox="0 0 22 19"><rect x="1" y="1" width="20" height="16.500" rx="1" fill="none" stroke="#fff" stroke-width="1.800"/><path d="M1 5.500 h20" stroke="#fff" stroke-width="1.800"/></svg>
<svg style="left:2367px;top:1909px;" width="28" height="27" viewBox="0 0 28 27"><rect x="11.500" y="0.800" width="15.500" height="19" rx="1" fill="none" stroke="#fff" stroke-width="1.300"/>
<path d="M17.500 3.500 v6 M20 3.500 v6" stroke="#fff" stroke-width="1" fill="none"/><rect x="22" y="3.500" width="3" height="6" fill="none" stroke="#fff" stroke-width="1"/>
<path d="M19 13 h6 M19 15.500 h6 M19 18 h6" stroke="#fff" stroke-width="1.100" fill="none" stroke-dasharray="1.400 0.800"/>
<rect x="0.800" y="11" width="16" height="12" rx="1.500" fill="#007acc" stroke="#fff" stroke-width="1.300"/>
<path d="M4.500 17 l3 2.800 l5 -5.200" fill="none" stroke="#fff" stroke-width="1.500"/>
<rect x="7" y="23" width="3.500" height="2.500" fill="#fff"/><path d="M1 26.300 h4 M6.500 26.300 h5 M13 26.300 h4" stroke="#fff" stroke-width="1.400" fill="none"/></svg>
<div class="t" style="left:2411px;top:1908.7px;height:33px;line-height:33px;color:#fff;padding-top:0;font-size:18px;">在线设备</div>
<div class="t" style="left:2502px;top:1908px;height:33px;line-height:33px;color:#fff;font-weight:bold;font-size:22px;padding-top:0;letter-spacing:-1px;">1</div>
</div></body></html>
